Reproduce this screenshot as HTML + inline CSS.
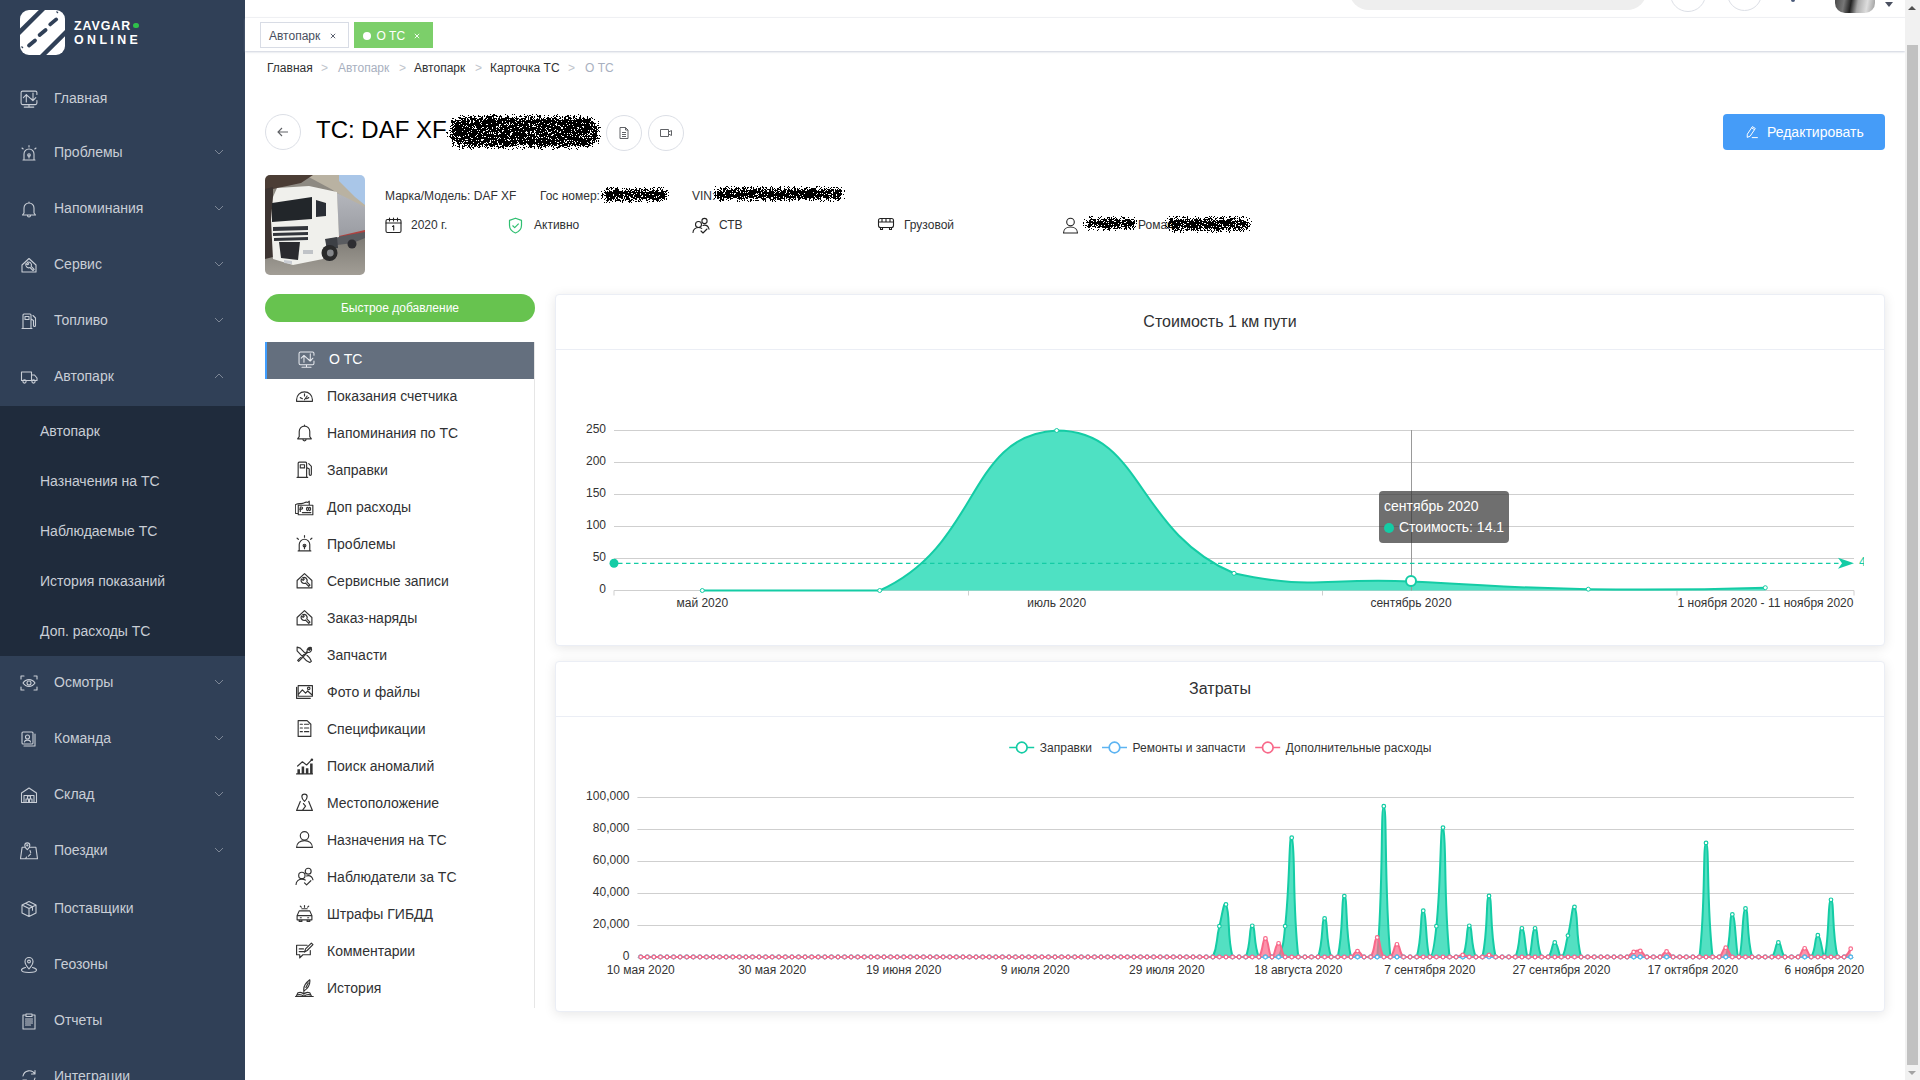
<!DOCTYPE html>
<html><head><meta charset="utf-8">
<style>
*{box-sizing:border-box;margin:0;padding:0}
html,body{width:1920px;height:1080px;overflow:hidden;background:#fff;font-family:"Liberation Sans",sans-serif}
.abs{position:absolute}
#sb{position:absolute;left:0;top:0;width:245px;height:1080px;background:#304057}
.mi{position:absolute;left:0;width:245px;height:56px;color:#c9ced6;font-size:14px}
.mi .t{position:absolute;left:54px;top:50%;transform:translateY(-50%);white-space:nowrap}
.mi svg.ic{position:absolute;left:20px;top:50%;margin-top:-8.5px;width:18px;height:18px}
.mi svg.ch{position:absolute;left:214px;top:50%;margin-top:-3px;width:10px;height:6px}
#sub{position:absolute;left:0;top:406px;width:245px;height:250px;background:#1f2b3c}
.si{position:absolute;left:40px;color:#c9ced6;font-size:14px;white-space:nowrap}
#hdr{position:absolute;left:245px;top:0;width:1660px;height:18px;background:#fff;border-bottom:1px solid #f3f4f6}
#tabs{position:absolute;left:245px;top:18px;width:1660px;height:33px;background:#fff;box-shadow:0 1px 2px rgba(160,170,190,.55)}
.tab{position:absolute;top:4px;height:26px;font-size:12px;line-height:24px;white-space:nowrap}
#sbar{position:absolute;left:1905px;top:0;width:15px;height:1080px;background:#f1f1f1}
.crumb{position:absolute;top:61px;font-size:12px;white-space:nowrap;color:#303133}
.circ{position:absolute;width:36px;height:36px;border:1px solid #dcdfe6;border-radius:50%;background:#fff}
.card{position:absolute;left:555px;width:1330px;background:#fff;border:1px solid #ebeef5;border-radius:4px;box-shadow:0 2px 12px 0 rgba(0,0,0,.1)}
.card .hd{position:absolute;left:0;top:0;width:100%;border-bottom:1px solid #ebeef5;text-align:center;color:#303133;font-size:16px}
.sm{position:absolute;left:265px;width:270px;height:37px;font-size:14px;color:#303133;white-space:nowrap}
.sm .t{position:absolute;left:62px;top:50%;margin-top:-2px;transform:translateY(-50%)}
.sm svg{position:absolute;left:30px;top:50%;margin-top:-11.5px;width:19px;height:19px}
.lbl{position:absolute;font-size:12px;color:#303133;white-space:nowrap}
</style></head><body>

<!-- SIDEBAR -->
<div id="sb">
 <svg class="abs" style="left:20px;top:10px" width="45" height="45" viewBox="0 0 45 45">
<path d="M9 0h9.8L0 18.6V9a9 9 0 0 1 9-9z" fill="#fff"/>
<path d="M25 0H36a9 9 0 0 1 9 9v11L20 45H9a9 9 0 0 1-9-9V25z" fill="#fff"/>
<path d="M45 26.2V36a9 9 0 0 1-9 9H26.2z" fill="#fff"/>
<path d="M30.2 14.4l6-5M19.6 25l6-5M9 35.5l6-5" stroke="#304057" stroke-width="3.8" stroke-linecap="round"/>
<path d="M36.5 1.5l1.5 1.5M1.5 36.5l1.5 1.5" stroke="#304057" stroke-width="1.2"/>
</svg>
<div class="abs" style="left:74px;top:20px;font-size:12.4px;font-weight:bold;color:#fff;letter-spacing:0.95px;line-height:13px">ZAVGAR</div>
<div class="abs" style="left:133px;top:22.7px;width:5.5px;height:5.5px;border-radius:50%;background:#2fc14a"></div>
<div class="abs" style="left:74px;top:34px;font-size:12.4px;font-weight:bold;color:#fff;letter-spacing:3.4px;line-height:13px">ONLINE</div>
<div id="sub"></div>
<div class="mi" style="top:70px"><svg class="ic" viewBox="0 0 18 18"><path d="M16.9 4.5V2.6a1.5 1.5 0 0 0-1.5-1.5H2.6a1.5 1.5 0 0 0-1.5 1.5v10.5a1.5 1.5 0 0 0 1.5 1.5h12.8a1.5 1.5 0 0 0 1.5-1.5V10.5M9 14.6v2M4.2 17.1h9.6M3.4 7.6l2.9-2.9 6.5 5.9 3-3M6.3 12V4.7M4.6 6.4l1.7-1.7 1.7 1.7M13 3v7.5M11.3 8.9l1.7 1.7 1.7-1.7" fill="none" stroke="#c9ced6" stroke-width="1.1" stroke-linecap="round" stroke-linejoin="round"/></svg><span class="t">Главная</span></div>
<div class="mi" style="top:124px"><svg class="ic" viewBox="0 0 18 18"><path d="M3 16h12M4 16v-6a5 5 0 0 1 10 0v6M9 11v3" fill="none" stroke="#c9ced6" stroke-width="1.1" stroke-linecap="round" stroke-linejoin="round"/><circle cx="9" cy="11" r="1.3" fill="none" stroke="#c9ced6" stroke-width="1.1" stroke-linecap="round" stroke-linejoin="round"/><path d="M9 1.5v1.5M2 4l1.2 1M16 4l-1.2 1" fill="none" stroke="#c9ced6" stroke-width="1.1" stroke-linecap="round" stroke-linejoin="round"/></svg><span class="t">Проблемы</span><svg class="ch" viewBox="0 0 10 6"><path d="M1 1l4 4 4-4" fill="none" stroke="#7d8796" stroke-width="1"/></svg></div>
<div class="mi" style="top:180px"><svg class="ic" viewBox="0 0 18 18"><path d="M4 13V8a5 5 0 0 1 10 0v5l1.5 2h-13z M7.5 15.5a1.5 1.5 0 0 0 3 0 M9 2v1" fill="none" stroke="#c9ced6" stroke-width="1.1" stroke-linecap="round" stroke-linejoin="round"/></svg><span class="t">Напоминания</span><svg class="ch" viewBox="0 0 10 6"><path d="M1 1l4 4 4-4" fill="none" stroke="#7d8796" stroke-width="1"/></svg></div>
<div class="mi" style="top:236px"><svg class="ic" viewBox="0 0 18 18"><path d="M2 9L9 2.5 16 9v7H2z" fill="none" stroke="#c9ced6" stroke-width="1.1" stroke-linecap="round" stroke-linejoin="round"/><path d="M6 7.5a3 3 0 0 0 4 4l3 3 1.2-1.2-3-3a3 3 0 0 0-4-4l1.5 1.5-1 1z" fill="none" stroke="#c9ced6" stroke-width="1.1" stroke-linecap="round" stroke-linejoin="round"/></svg><span class="t">Сервис</span><svg class="ch" viewBox="0 0 10 6"><path d="M1 1l4 4 4-4" fill="none" stroke="#7d8796" stroke-width="1"/></svg></div>
<div class="mi" style="top:292px"><svg class="ic" viewBox="0 0 18 18"><path d="M3 16V3a1 1 0 0 1 1-1h6a1 1 0 0 1 1 1v13M2 16.5h10M5 4.5h4v3H5zM11 7l2.5 1.5v5a1 1 0 0 0 2 0V6L13 3.5" fill="none" stroke="#c9ced6" stroke-width="1.1" stroke-linecap="round" stroke-linejoin="round"/></svg><span class="t">Топливо</span><svg class="ch" viewBox="0 0 10 6"><path d="M1 1l4 4 4-4" fill="none" stroke="#7d8796" stroke-width="1"/></svg></div>
<div class="mi" style="top:348px"><svg class="ic" viewBox="0 0 18 18"><path d="M1.5 4h10v8.5h-10zM11.5 7h3l2.5 3v2.5h-5.5" fill="none" stroke="#c9ced6" stroke-width="1.1" stroke-linecap="round" stroke-linejoin="round"/><circle cx="4.5" cy="13.5" r="1.6" fill="none" stroke="#c9ced6" stroke-width="1.1" stroke-linecap="round" stroke-linejoin="round"/><circle cx="13.5" cy="13.5" r="1.6" fill="none" stroke="#c9ced6" stroke-width="1.1" stroke-linecap="round" stroke-linejoin="round"/></svg><span class="t">Автопарк</span><svg class="ch" viewBox="0 0 10 6"><path d="M1 5l4-4 4 4" fill="none" stroke="#7d8796" stroke-width="1"/></svg></div>
<div class="mi" style="top:654px"><svg class="ic" viewBox="0 0 18 18"><path d="M1 5V2h3M14 2h3v3M17 13v3h-3M4 16H1v-3M3 9c3-4.5 9-4.5 12 0-3 4.5-9 4.5-12 0z" fill="none" stroke="#c9ced6" stroke-width="1.1" stroke-linecap="round" stroke-linejoin="round"/><circle cx="9" cy="9" r="2" fill="none" stroke="#c9ced6" stroke-width="1.1" stroke-linecap="round" stroke-linejoin="round"/></svg><span class="t">Осмотры</span><svg class="ch" viewBox="0 0 10 6"><path d="M1 1l4 4 4-4" fill="none" stroke="#7d8796" stroke-width="1"/></svg></div>
<div class="mi" style="top:710px"><svg class="ic" viewBox="0 0 18 18"><rect x="2" y="2" width="11" height="12" rx="1" fill="none" stroke="#c9ced6" stroke-width="1.1" stroke-linecap="round" stroke-linejoin="round"/><path d="M15 4v12H4M4.5 12c.5-2.5 5.5-2.5 6 0" fill="none" stroke="#c9ced6" stroke-width="1.1" stroke-linecap="round" stroke-linejoin="round"/><circle cx="7.5" cy="7" r="2" fill="none" stroke="#c9ced6" stroke-width="1.1" stroke-linecap="round" stroke-linejoin="round"/></svg><span class="t">Команда</span><svg class="ch" viewBox="0 0 10 6"><path d="M1 1l4 4 4-4" fill="none" stroke="#7d8796" stroke-width="1"/></svg></div>
<div class="mi" style="top:766px"><svg class="ic" viewBox="0 0 18 18"><path d="M1.5 7L9 2l7.5 5v9.5h-15zM4 16.5v-7h10v7M6 13h2.5v3.5H6zM9.5 13H12v3.5H9.5zM7.5 10h3v3h-3z" fill="none" stroke="#c9ced6" stroke-width="1.1" stroke-linecap="round" stroke-linejoin="round"/></svg><span class="t">Склад</span><svg class="ch" viewBox="0 0 10 6"><path d="M1 1l4 4 4-4" fill="none" stroke="#7d8796" stroke-width="1"/></svg></div>
<div class="mi" style="top:822px"><svg class="ic" viewBox="0 0 18 18"><path d="M5.2 5.3H2.1L.5 16.7h17L15.9 5.3H9.5M7.3 7.6S4.8 5.3 4.8 3.4a2.5 2.5 0 0 1 5 0c0 1.9-2.5 4.2-2.5 4.2zM10 8.5l.7 2.2M10.5 12.2l-2 2M6.6 15l-1.2 1.7" fill="none" stroke="#c9ced6" stroke-width="1.1" stroke-linecap="round" stroke-linejoin="round"/><circle cx="7.3" cy="3.4" r=".6" fill="none" stroke="#c9ced6" stroke-width="1.1" stroke-linecap="round" stroke-linejoin="round"/></svg><span class="t">Поездки</span><svg class="ch" viewBox="0 0 10 6"><path d="M1 1l4 4 4-4" fill="none" stroke="#7d8796" stroke-width="1"/></svg></div>
<div class="mi" style="top:880px"><svg class="ic" viewBox="0 0 18 18"><path d="M9 1.5l7 3.5v8l-7 3.5-7-3.5v-8zM2 5l7 3.5L16 5M9 8.5v8M5.5 3.3l7 3.5v3.5" fill="none" stroke="#c9ced6" stroke-width="1.1" stroke-linecap="round" stroke-linejoin="round"/></svg><span class="t">Поставщики</span></div>
<div class="mi" style="top:936px"><svg class="ic" viewBox="0 0 18 18"><path d="M9 13s-4-4.5-4-7.5a4 4 0 0 1 8 0c0 3-4 7.5-4 7.5z" fill="none" stroke="#c9ced6" stroke-width="1.1" stroke-linecap="round" stroke-linejoin="round"/><circle cx="9" cy="5.5" r="1.4" fill="none" stroke="#c9ced6" stroke-width="1.1" stroke-linecap="round" stroke-linejoin="round"/><path d="M5.5 11.5C2.5 12.2 1.5 13 1.5 14c0 1.5 3.4 2.5 7.5 2.5s7.5-1 7.5-2.5c0-1-1-1.8-4-2.5" fill="none" stroke="#c9ced6" stroke-width="1.1" stroke-linecap="round" stroke-linejoin="round"/></svg><span class="t">Геозоны</span></div>
<div class="mi" style="top:992px"><svg class="ic" viewBox="0 0 18 18"><path d="M3 3h3M12 3h3v14H3V3M6 2h6v2.5H6z M5.5 7h7M5.5 9h7M5.5 11h7M5.5 13h5" fill="none" stroke="#c9ced6" stroke-width="1.1" stroke-linecap="round" stroke-linejoin="round"/></svg><span class="t">Отчеты</span></div>
<div class="mi" style="top:1048px"><svg class="ic" viewBox="0 0 18 18"><path d="M3 8a6.5 6.5 0 0 1 12-2M15 10a6.5 6.5 0 0 1-12 2M15 2.5V6h-3.5M3 15.5V12h3.5" fill="none" stroke="#c9ced6" stroke-width="1.1" stroke-linecap="round" stroke-linejoin="round"/></svg><span class="t">Интеграции</span></div>
<div class="si" style="top:423px;line-height:16px">Автопарк</div>
<div class="si" style="top:473px;line-height:16px">Назначения на ТС</div>
<div class="si" style="top:523px;line-height:16px">Наблюдаемые ТС</div>
<div class="si" style="top:573px;line-height:16px">История показаний</div>
<div class="si" style="top:623px;line-height:16px">Доп. расходы ТС</div>
</div>

<!-- HEADER -->
<div id="hdr">
  <div class="abs" style="left:1104px;top:-30px;width:298px;height:40px;border-radius:20px;background:#eeeeee"></div>
  <div class="abs" style="left:1425px;top:-24px;width:36px;height:36px;border-radius:50%;border:1px solid #dcdfe6"></div>
  <div class="abs" style="left:1482px;top:-24px;width:35px;height:35px;border-radius:50%;border:1px solid #dcdfe6"></div>
  <div class="abs" style="left:1546px;top:-2px;width:4px;height:4px;border-radius:50%;background:#4a5a7a"></div>
  <div class="abs" style="left:1590px;top:-27px;width:40px;height:40px;border-radius:10px;background:linear-gradient(100deg,#333 0%,#777 30%,#222 45%,#aaa 60%,#ddd 80%,#999 100%)"></div>
  <div class="abs" style="left:1640px;top:2px;width:0;height:0;border-left:4px solid transparent;border-right:4px solid transparent;border-top:5px solid #4a5060"></div>
</div>

<!-- TABS -->
<div id="tabs">
  <div class="tab" style="left:15px;width:89px;border:1px solid #d8dce5"></div>
  <div class="abs" style="left:24px;top:11px;font-size:12px;line-height:14px;color:#495060;white-space:nowrap">Автопарк</div>
  <svg class="abs" style="left:84.5px;top:14.5px" width="6" height="6" viewBox="0 0 6 6"><path d="M.8 .8l4.4 4.4M5.2 .8L.8 5.2" stroke="#495060" stroke-width="0.9"/></svg>
  <div class="tab" style="left:109px;width:79px;background:#7ccf6a"></div>
  <div class="abs" style="left:117.9px;top:14px;width:8px;height:8px;border-radius:50%;background:#fff"></div>
  <div class="abs" style="left:131.4px;top:11px;font-size:12px;line-height:14px;color:#fff;white-space:nowrap">О ТС</div>
  <svg class="abs" style="left:168.5px;top:14.5px" width="6" height="6" viewBox="0 0 6 6"><path d="M.8 .8l4.4 4.4M5.2 .8L.8 5.2" stroke="#fff" stroke-width="0.9"/></svg>
</div>

<!-- SCROLLBAR -->
<div id="sbar">
  <div class="abs" style="left:3px;top:6px;width:0;height:0;border-left:4.5px solid transparent;border-right:4.5px solid transparent;border-bottom:4.5px solid #505050"></div>
  <div class="abs" style="left:2px;top:45px;width:11px;height:1020px;background:#c1c1c1"></div>
  <div class="abs" style="left:3px;top:1071px;width:0;height:0;border-left:4px solid transparent;border-right:4px solid transparent;border-top:4px solid #a3a3a3"></div>
</div>

<!-- BREADCRUMBS -->
<div class="crumb" style="left:267px">Главная</div>
<div class="crumb" style="left:321px;color:#c0c4cc">&gt;</div>
<div class="crumb" style="left:338px;color:#a8b0c0">Автопарк</div>
<div class="crumb" style="left:399px;color:#c0c4cc">&gt;</div>
<div class="crumb" style="left:414px">Автопарк</div>
<div class="crumb" style="left:475px;color:#c0c4cc">&gt;</div>
<div class="crumb" style="left:490px">Карточка ТС</div>
<div class="crumb" style="left:568px;color:#c0c4cc">&gt;</div>
<div class="crumb" style="left:585px;color:#a8b0c0">О ТС</div>

<!-- TITLE -->
<div class="circ" style="left:265px;top:114px"></div>
<svg class="abs" style="left:276px;top:125px" width="14" height="14" viewBox="0 0 14 14"><path d="M12 7H2M6 3L2 7l4 4" fill="none" stroke="#606266" stroke-width="1.1"/></svg>
<div class="abs" style="left:316px;top:114px;font-size:24px;color:#000;white-space:nowrap;line-height:32px">ТС: DAF XF</div>
<svg class="abs" style="left:446px;top:114px" width="156" height="36" viewBox="0 0 156 36" shape-rendering="crispEdges"><path d="M44 0h1v1h-1zM47 0h2v1h-2zM59 0h1v1h-1zM66 0h1v1h-1zM68 0h1v1h-1zM78 0h1v1h-1zM86 0h1v1h-1zM90 0h1v1h-1zM111 0h1v1h-1zM132 0h1v1h-1zM14 1h1v1h-1zM16 1h1v1h-1zM22 1h1v1h-1zM27 1h1v1h-1zM32 1h1v1h-1zM38 1h1v1h-1zM41 1h1v1h-1zM46 1h5v1h-5zM54 1h1v1h-1zM61 1h1v1h-1zM74 1h1v1h-1zM81 1h1v1h-1zM83 1h2v1h-2zM91 1h1v1h-1zM93 1h2v1h-2zM98 1h1v1h-1zM102 1h1v1h-1zM108 1h1v1h-1zM110 1h1v1h-1zM121 1h2v1h-2zM124 1h1v1h-1zM128 1h1v1h-1zM134 1h1v1h-1zM17 2h2v1h-2zM24 2h2v1h-2zM28 2h2v1h-2zM32 2h3v1h-3zM36 2h1v1h-1zM38 2h1v1h-1zM40 2h8v1h-8zM50 2h2v1h-2zM53 2h3v1h-3zM61 2h2v1h-2zM70 2h1v1h-1zM73 2h3v1h-3zM78 2h3v1h-3zM82 2h1v1h-1zM85 2h2v1h-2zM88 2h1v1h-1zM91 2h4v1h-4zM107 2h1v1h-1zM110 2h2v1h-2zM113 2h1v1h-1zM116 2h1v1h-1zM119 2h4v1h-4zM127 2h2v1h-2zM130 2h1v1h-1zM134 2h1v1h-1zM141 2h1v1h-1zM12 3h3v1h-3zM19 3h2v1h-2zM22 3h4v1h-4zM28 3h1v1h-1zM35 3h2v1h-2zM40 3h6v1h-6zM47 3h1v1h-1zM53 3h1v1h-1zM55 3h1v1h-1zM59 3h4v1h-4zM66 3h1v1h-1zM68 3h1v1h-1zM70 3h1v1h-1zM79 3h2v1h-2zM82 3h1v1h-1zM84 3h3v1h-3zM88 3h1v1h-1zM93 3h2v1h-2zM98 3h1v1h-1zM101 3h2v1h-2zM105 3h1v1h-1zM108 3h2v1h-2zM114 3h1v1h-1zM116 3h1v1h-1zM118 3h2v1h-2zM122 3h3v1h-3zM127 3h2v1h-2zM133 3h2v1h-2zM137 3h1v1h-1zM141 3h1v1h-1zM145 3h1v1h-1zM6 4h2v1h-2zM13 4h7v1h-7zM21 4h1v1h-1zM24 4h7v1h-7zM33 4h4v1h-4zM39 4h2v1h-2zM42 4h4v1h-4zM47 4h4v1h-4zM52 4h2v1h-2zM55 4h13v1h-13zM69 4h4v1h-4zM75 4h5v1h-5zM82 4h1v1h-1zM84 4h2v1h-2zM87 4h1v1h-1zM91 4h1v1h-1zM93 4h1v1h-1zM95 4h1v1h-1zM97 4h1v1h-1zM100 4h5v1h-5zM106 4h5v1h-5zM113 4h2v1h-2zM118 4h2v1h-2zM122 4h4v1h-4zM127 4h1v1h-1zM129 4h2v1h-2zM133 4h2v1h-2zM136 4h3v1h-3zM141 4h1v1h-1zM143 4h2v1h-2zM146 4h1v1h-1zM9 5h1v1h-1zM15 5h2v1h-2zM18 5h2v1h-2zM21 5h2v1h-2zM24 5h6v1h-6zM31 5h6v1h-6zM38 5h2v1h-2zM41 5h8v1h-8zM50 5h1v1h-1zM52 5h9v1h-9zM62 5h1v1h-1zM64 5h5v1h-5zM70 5h2v1h-2zM73 5h4v1h-4zM78 5h2v1h-2zM82 5h1v1h-1zM84 5h3v1h-3zM88 5h1v1h-1zM90 5h4v1h-4zM95 5h5v1h-5zM101 5h4v1h-4zM106 5h2v1h-2zM109 5h4v1h-4zM116 5h1v1h-1zM118 5h5v1h-5zM124 5h1v1h-1zM128 5h1v1h-1zM130 5h6v1h-6zM137 5h8v1h-8zM148 5h1v1h-1zM5 6h2v1h-2zM9 6h6v1h-6zM16 6h4v1h-4zM21 6h3v1h-3zM25 6h2v1h-2zM28 6h5v1h-5zM34 6h2v1h-2zM37 6h13v1h-13zM51 6h20v1h-20zM73 6h2v1h-2zM76 6h3v1h-3zM80 6h5v1h-5zM86 6h23v1h-23zM110 6h35v1h-35zM5 7h5v1h-5zM11 7h2v1h-2zM15 7h9v1h-9zM25 7h2v1h-2zM29 7h4v1h-4zM34 7h22v1h-22zM57 7h2v1h-2zM60 7h9v1h-9zM70 7h26v1h-26zM97 7h14v1h-14zM112 7h3v1h-3zM116 7h6v1h-6zM123 7h3v1h-3zM127 7h17v1h-17zM145 7h2v1h-2zM152 7h1v1h-1zM5 8h4v1h-4zM10 8h10v1h-10zM21 8h2v1h-2zM25 8h2v1h-2zM28 8h7v1h-7zM36 8h14v1h-14zM51 8h5v1h-5zM57 8h6v1h-6zM64 8h6v1h-6zM71 8h4v1h-4zM76 8h1v1h-1zM78 8h15v1h-15zM94 8h11v1h-11zM106 8h24v1h-24zM131 8h5v1h-5zM137 8h11v1h-11zM6 9h1v1h-1zM8 9h7v1h-7zM16 9h7v1h-7zM24 9h10v1h-10zM35 9h10v1h-10zM46 9h14v1h-14zM61 9h2v1h-2zM64 9h2v1h-2zM67 9h10v1h-10zM78 9h4v1h-4zM84 9h6v1h-6zM91 9h1v1h-1zM93 9h5v1h-5zM99 9h4v1h-4zM104 9h6v1h-6zM111 9h9v1h-9zM121 9h14v1h-14zM136 9h1v1h-1zM138 9h1v1h-1zM140 9h3v1h-3zM144 9h6v1h-6zM152 9h1v1h-1zM6 10h2v1h-2zM9 10h4v1h-4zM14 10h21v1h-21zM36 10h4v1h-4zM42 10h11v1h-11zM55 10h3v1h-3zM60 10h1v1h-1zM62 10h1v1h-1zM64 10h1v1h-1zM66 10h1v1h-1zM68 10h4v1h-4zM73 10h10v1h-10zM84 10h2v1h-2zM87 10h1v1h-1zM89 10h12v1h-12zM103 10h6v1h-6zM111 10h12v1h-12zM124 10h2v1h-2zM127 10h17v1h-17zM145 10h2v1h-2zM148 10h1v1h-1zM5 11h2v1h-2zM8 11h9v1h-9zM18 11h2v1h-2zM21 11h7v1h-7zM29 11h24v1h-24zM54 11h8v1h-8zM63 11h20v1h-20zM84 11h3v1h-3zM88 11h3v1h-3zM92 11h3v1h-3zM96 11h8v1h-8zM105 11h5v1h-5zM111 11h1v1h-1zM114 11h3v1h-3zM118 11h3v1h-3zM122 11h22v1h-22zM145 11h2v1h-2zM148 11h1v1h-1zM151 11h2v1h-2zM4 12h1v1h-1zM7 12h12v1h-12zM20 12h1v1h-1zM22 12h4v1h-4zM27 12h2v1h-2zM30 12h20v1h-20zM52 12h1v1h-1zM54 12h1v1h-1zM56 12h5v1h-5zM62 12h9v1h-9zM73 12h3v1h-3zM77 12h3v1h-3zM81 12h5v1h-5zM90 12h17v1h-17zM108 12h6v1h-6zM115 12h12v1h-12zM128 12h8v1h-8zM138 12h13v1h-13zM6 13h2v1h-2zM9 13h7v1h-7zM17 13h6v1h-6zM24 13h3v1h-3zM28 13h1v1h-1zM30 13h6v1h-6zM38 13h3v1h-3zM42 13h4v1h-4zM47 13h3v1h-3zM51 13h1v1h-1zM53 13h15v1h-15zM69 13h5v1h-5zM76 13h7v1h-7zM84 13h7v1h-7zM92 13h2v1h-2zM95 13h5v1h-5zM101 13h14v1h-14zM117 13h2v1h-2zM120 13h11v1h-11zM133 13h4v1h-4zM138 13h8v1h-8zM147 13h4v1h-4zM152 13h3v1h-3zM4 14h3v1h-3zM8 14h18v1h-18zM27 14h1v1h-1zM31 14h4v1h-4zM36 14h4v1h-4zM41 14h5v1h-5zM47 14h6v1h-6zM54 14h3v1h-3zM58 14h6v1h-6zM66 14h7v1h-7zM74 14h21v1h-21zM96 14h3v1h-3zM100 14h3v1h-3zM105 14h10v1h-10zM117 14h15v1h-15zM133 14h1v1h-1zM135 14h12v1h-12zM148 14h3v1h-3zM152 14h1v1h-1zM6 15h12v1h-12zM19 15h23v1h-23zM43 15h7v1h-7zM51 15h11v1h-11zM63 15h14v1h-14zM78 15h12v1h-12zM91 15h9v1h-9zM101 15h8v1h-8zM110 15h15v1h-15zM126 15h2v1h-2zM129 15h2v1h-2zM132 15h17v1h-17zM150 15h2v1h-2zM3 16h2v1h-2zM6 16h19v1h-19zM26 16h5v1h-5zM32 16h1v1h-1zM34 16h6v1h-6zM42 16h2v1h-2zM45 16h11v1h-11zM58 16h6v1h-6zM65 16h23v1h-23zM89 16h5v1h-5zM95 16h6v1h-6zM102 16h6v1h-6zM109 16h2v1h-2zM112 16h5v1h-5zM118 16h10v1h-10zM129 16h6v1h-6zM136 16h6v1h-6zM143 16h1v1h-1zM145 16h1v1h-1zM147 16h4v1h-4zM152 16h1v1h-1zM5 17h4v1h-4zM10 17h6v1h-6zM17 17h6v1h-6zM24 17h13v1h-13zM39 17h13v1h-13zM53 17h3v1h-3zM57 17h12v1h-12zM70 17h2v1h-2zM73 17h7v1h-7zM81 17h3v1h-3zM86 17h2v1h-2zM90 17h9v1h-9zM100 17h1v1h-1zM102 17h3v1h-3zM106 17h5v1h-5zM112 17h2v1h-2zM115 17h10v1h-10zM126 17h3v1h-3zM130 17h14v1h-14zM145 17h7v1h-7zM153 17h1v1h-1zM0 18h2v1h-2zM4 18h1v1h-1zM6 18h2v1h-2zM9 18h12v1h-12zM22 18h3v1h-3zM26 18h6v1h-6zM33 18h4v1h-4zM38 18h5v1h-5zM44 18h1v1h-1zM46 18h1v1h-1zM48 18h1v1h-1zM50 18h3v1h-3zM54 18h11v1h-11zM67 18h8v1h-8zM76 18h3v1h-3zM82 18h2v1h-2zM85 18h3v1h-3zM89 18h8v1h-8zM98 18h4v1h-4zM105 18h8v1h-8zM115 18h29v1h-29zM146 18h2v1h-2zM149 18h2v1h-2zM1 19h1v1h-1zM7 19h28v1h-28zM36 19h5v1h-5zM42 19h1v1h-1zM44 19h1v1h-1zM46 19h1v1h-1zM48 19h4v1h-4zM55 19h4v1h-4zM60 19h4v1h-4zM66 19h14v1h-14zM81 19h3v1h-3zM85 19h1v1h-1zM88 19h1v1h-1zM90 19h3v1h-3zM94 19h1v1h-1zM96 19h6v1h-6zM103 19h6v1h-6zM110 19h8v1h-8zM119 19h2v1h-2zM122 19h1v1h-1zM124 19h1v1h-1zM126 19h6v1h-6zM133 19h3v1h-3zM137 19h4v1h-4zM142 19h1v1h-1zM144 19h2v1h-2zM147 19h4v1h-4zM4 20h18v1h-18zM23 20h8v1h-8zM32 20h4v1h-4zM37 20h11v1h-11zM50 20h2v1h-2zM53 20h11v1h-11zM66 20h15v1h-15zM82 20h7v1h-7zM90 20h16v1h-16zM108 20h18v1h-18zM127 20h3v1h-3zM131 20h8v1h-8zM140 20h2v1h-2zM144 20h7v1h-7zM4 21h1v1h-1zM6 21h1v1h-1zM8 21h11v1h-11zM20 21h2v1h-2zM23 21h7v1h-7zM31 21h30v1h-30zM62 21h2v1h-2zM65 21h24v1h-24zM90 21h1v1h-1zM93 21h8v1h-8zM102 21h3v1h-3zM107 21h8v1h-8zM116 21h5v1h-5zM122 21h2v1h-2zM125 21h9v1h-9zM135 21h1v1h-1zM137 21h1v1h-1zM139 21h2v1h-2zM142 21h2v1h-2zM146 21h6v1h-6zM153 21h1v1h-1zM1 22h1v1h-1zM3 22h2v1h-2zM6 22h2v1h-2zM9 22h2v1h-2zM12 22h1v1h-1zM14 22h3v1h-3zM18 22h11v1h-11zM30 22h6v1h-6zM37 22h1v1h-1zM40 22h22v1h-22zM63 22h6v1h-6zM70 22h2v1h-2zM73 22h8v1h-8zM82 22h1v1h-1zM84 22h8v1h-8zM93 22h5v1h-5zM99 22h11v1h-11zM111 22h5v1h-5zM118 22h8v1h-8zM127 22h2v1h-2zM130 22h3v1h-3zM134 22h1v1h-1zM136 22h15v1h-15zM154 22h1v1h-1zM4 23h5v1h-5zM10 23h2v1h-2zM15 23h9v1h-9zM25 23h6v1h-6zM32 23h10v1h-10zM43 23h1v1h-1zM45 23h3v1h-3zM49 23h1v1h-1zM51 23h2v1h-2zM54 23h9v1h-9zM64 23h14v1h-14zM79 23h1v1h-1zM81 23h5v1h-5zM87 23h3v1h-3zM91 23h2v1h-2zM94 23h1v1h-1zM97 23h3v1h-3zM101 23h1v1h-1zM103 23h30v1h-30zM134 23h2v1h-2zM138 23h1v1h-1zM140 23h1v1h-1zM142 23h1v1h-1zM145 23h1v1h-1zM147 23h3v1h-3zM151 23h1v1h-1zM5 24h20v1h-20zM27 24h25v1h-25zM53 24h1v1h-1zM55 24h3v1h-3zM59 24h11v1h-11zM71 24h8v1h-8zM80 24h6v1h-6zM87 24h2v1h-2zM90 24h1v1h-1zM92 24h10v1h-10zM103 24h1v1h-1zM105 24h6v1h-6zM112 24h7v1h-7zM121 24h16v1h-16zM138 24h16v1h-16zM6 25h3v1h-3zM10 25h2v1h-2zM13 25h6v1h-6zM22 25h13v1h-13zM38 25h13v1h-13zM52 25h9v1h-9zM63 25h1v1h-1zM65 25h2v1h-2zM68 25h2v1h-2zM71 25h1v1h-1zM73 25h3v1h-3zM77 25h28v1h-28zM106 25h3v1h-3zM110 25h2v1h-2zM113 25h27v1h-27zM141 25h5v1h-5zM147 25h3v1h-3zM6 26h1v1h-1zM8 26h8v1h-8zM17 26h8v1h-8zM26 26h4v1h-4zM31 26h1v1h-1zM33 26h2v1h-2zM37 26h7v1h-7zM45 26h1v1h-1zM47 26h1v1h-1zM49 26h10v1h-10zM60 26h2v1h-2zM64 26h16v1h-16zM81 26h1v1h-1zM83 26h6v1h-6zM90 26h5v1h-5zM96 26h4v1h-4zM101 26h17v1h-17zM119 26h2v1h-2zM123 26h1v1h-1zM125 26h1v1h-1zM127 26h18v1h-18zM146 26h3v1h-3zM150 26h1v1h-1zM152 26h1v1h-1zM6 27h1v1h-1zM10 27h8v1h-8zM19 27h1v1h-1zM22 27h22v1h-22zM45 27h6v1h-6zM52 27h19v1h-19zM72 27h5v1h-5zM78 27h11v1h-11zM90 27h19v1h-19zM110 27h4v1h-4zM115 27h3v1h-3zM119 27h1v1h-1zM121 27h7v1h-7zM129 27h2v1h-2zM132 27h12v1h-12zM146 27h1v1h-1zM148 27h1v1h-1zM150 27h1v1h-1zM152 27h1v1h-1zM7 28h2v1h-2zM11 28h2v1h-2zM14 28h1v1h-1zM16 28h1v1h-1zM18 28h9v1h-9zM28 28h6v1h-6zM35 28h5v1h-5zM41 28h2v1h-2zM45 28h6v1h-6zM52 28h13v1h-13zM66 28h6v1h-6zM73 28h31v1h-31zM105 28h6v1h-6zM113 28h6v1h-6zM121 28h2v1h-2zM124 28h2v1h-2zM127 28h2v1h-2zM130 28h4v1h-4zM135 28h6v1h-6zM142 28h3v1h-3zM146 28h3v1h-3zM6 29h2v1h-2zM11 29h5v1h-5zM17 29h15v1h-15zM33 29h5v1h-5zM40 29h1v1h-1zM42 29h4v1h-4zM47 29h5v1h-5zM53 29h3v1h-3zM57 29h14v1h-14zM73 29h7v1h-7zM81 29h11v1h-11zM93 29h3v1h-3zM97 29h20v1h-20zM118 29h11v1h-11zM130 29h12v1h-12zM143 29h4v1h-4zM152 29h1v1h-1zM7 30h1v1h-1zM12 30h2v1h-2zM18 30h1v1h-1zM21 30h1v1h-1zM23 30h2v1h-2zM26 30h5v1h-5zM32 30h5v1h-5zM38 30h14v1h-14zM53 30h3v1h-3zM57 30h7v1h-7zM65 30h3v1h-3zM69 30h1v1h-1zM71 30h2v1h-2zM74 30h3v1h-3zM78 30h2v1h-2zM82 30h5v1h-5zM88 30h1v1h-1zM90 30h10v1h-10zM101 30h4v1h-4zM106 30h5v1h-5zM112 30h2v1h-2zM116 30h6v1h-6zM123 30h2v1h-2zM126 30h7v1h-7zM134 30h10v1h-10zM146 30h1v1h-1zM7 31h1v1h-1zM9 31h1v1h-1zM13 31h1v1h-1zM16 31h1v1h-1zM18 31h3v1h-3zM22 31h2v1h-2zM25 31h2v1h-2zM28 31h3v1h-3zM32 31h2v1h-2zM36 31h1v1h-1zM39 31h3v1h-3zM43 31h6v1h-6zM51 31h1v1h-1zM56 31h7v1h-7zM64 31h7v1h-7zM77 31h1v1h-1zM83 31h3v1h-3zM91 31h1v1h-1zM93 31h4v1h-4zM98 31h4v1h-4zM103 31h1v1h-1zM105 31h2v1h-2zM108 31h3v1h-3zM113 31h9v1h-9zM123 31h1v1h-1zM125 31h2v1h-2zM128 31h2v1h-2zM131 31h4v1h-4zM136 31h3v1h-3zM142 31h3v1h-3zM6 32h1v1h-1zM11 32h3v1h-3zM16 32h3v1h-3zM22 32h2v1h-2zM25 32h1v1h-1zM28 32h2v1h-2zM31 32h1v1h-1zM33 32h2v1h-2zM36 32h1v1h-1zM38 32h1v1h-1zM40 32h1v1h-1zM44 32h3v1h-3zM48 32h1v1h-1zM50 32h3v1h-3zM54 32h4v1h-4zM59 32h3v1h-3zM63 32h2v1h-2zM66 32h1v1h-1zM72 32h1v1h-1zM80 32h1v1h-1zM83 32h6v1h-6zM91 32h3v1h-3zM95 32h1v1h-1zM97 32h3v1h-3zM102 32h1v1h-1zM105 32h1v1h-1zM107 32h1v1h-1zM112 32h3v1h-3zM116 32h2v1h-2zM121 32h3v1h-3zM129 32h1v1h-1zM134 32h1v1h-1zM137 32h1v1h-1zM139 32h4v1h-4zM146 32h1v1h-1zM13 33h1v1h-1zM16 33h1v1h-1zM21 33h1v1h-1zM23 33h2v1h-2zM26 33h2v1h-2zM32 33h2v1h-2zM39 33h1v1h-1zM41 33h2v1h-2zM52 33h3v1h-3zM56 33h2v1h-2zM70 33h1v1h-1zM74 33h1v1h-1zM77 33h2v1h-2zM82 33h1v1h-1zM84 33h2v1h-2zM88 33h1v1h-1zM92 33h1v1h-1zM94 33h2v1h-2zM99 33h1v1h-1zM107 33h1v1h-1zM110 33h4v1h-4zM118 33h3v1h-3zM132 33h1v1h-1zM141 33h1v1h-1zM16 34h2v1h-2zM24 34h1v1h-1zM27 34h1v1h-1zM41 34h1v1h-1zM45 34h1v1h-1zM48 34h1v1h-1zM52 34h1v1h-1zM57 34h1v1h-1zM59 34h1v1h-1zM67 34h1v1h-1zM71 34h1v1h-1zM78 34h1v1h-1zM88 34h1v1h-1zM92 34h1v1h-1zM94 34h1v1h-1zM108 34h1v1h-1zM111 34h1v1h-1zM122 34h1v1h-1zM125 34h1v1h-1zM130 34h1v1h-1zM13 35h1v1h-1zM25 35h1v1h-1zM62 35h1v1h-1zM66 35h1v1h-1zM76 35h1v1h-1zM95 35h2v1h-2zM106 35h2v1h-2zM123 35h1v1h-1zM131 35h1v1h-1z" fill="#000"/></svg>
<div class="circ" style="left:606px;top:115px"></div>
<div class="circ" style="left:648px;top:115px"></div>
<svg class="abs" style="left:617px;top:126px" width="14" height="14" viewBox="0 0 14 14"><path d="M3 1.5h5.5L11 4v8.5H3z M8.5 1.5V4H11 M5 6.5h4M5 8.5h4M5 10.5h4" fill="none" stroke="#606266" stroke-width="1"/></svg>
<svg class="abs" style="left:659px;top:126px" width="14" height="14" viewBox="0 0 14 14"><path d="M1.5 3.5h8v7h-8z M9.5 6l3-1.5v5l-3-1.5" fill="none" stroke="#606266" stroke-width="1"/></svg>

<div class="abs" style="left:1723px;top:114px;width:162px;height:36px;background:#459cf8;border-radius:4px;color:#fff;font-size:14px;line-height:36px;padding-left:44px;white-space:nowrap">Редактировать</div>
<svg class="abs" style="left:1744px;top:125px" width="14" height="14" viewBox="0 0 14 14"><path d="M3.3 9.2L8.4 1.6l2.9 1.9-5.1 7.6-3 1.3z M7.6 2.8l2.9 1.9 M7.8 12.6h6" fill="none" stroke="#fff" stroke-width="1" stroke-linejoin="round"/></svg>

<!-- PHOTO -->
<svg class="abs" style="left:265px;top:175px" width="100" height="100" viewBox="0 0 100 100">
<defs><filter id="pbl"><feGaussianBlur stdDeviation="0.35"/></filter><clipPath id="pc"><rect x="0" y="0" width="100" height="100" rx="5"/></clipPath>
<linearGradient id="trl" x1="0" y1="0" x2="0" y2="1"><stop offset="0" stop-color="#b4b6bc"/><stop offset="1" stop-color="#9a9ca2"/></linearGradient>
<linearGradient id="gr" x1="0" y1="0" x2="0" y2="1"><stop offset="0" stop-color="#7d7a74"/><stop offset="1" stop-color="#a29e96"/></linearGradient></defs>
<g clip-path="url(#pc)" filter="url(#pbl)">
<rect width="100" height="100" fill="#8e8a82"/>
<rect x="0" y="62" width="100" height="38" fill="url(#gr)"/>
<path d="M40 0H100V36L66 14z" fill="#b9b2a2"/>
<path d="M74 0H100V30L90 22 74 6z" fill="#a9c6e8"/>
<path d="M0 0H48L36 8 8 14 0 20z" fill="#4b3c36"/>
<path d="M0 14L8 12V82L0 84z" fill="#3d3430"/>
<path d="M72 18L100 32V56L74 62z" fill="url(#trl)"/>
<path d="M74 61L100 55V58L75 64z" fill="#b0423f"/>
<path d="M72 62L100 57V63L88 68 72 70z" fill="#5a5b60"/>
<path d="M8 22L12 13 44 11 72 17 74 62 64 64 58 84 28 90 8 84 6 45z" fill="#f0f0ec"/>
<path d="M7 28L47 22V44L7 47z" fill="#24272c"/>
<path d="M51 25L61 28V41L51 42z" fill="#2c2f34"/>
<path d="M8 52L43 51V55L8 56zM8 58L43 57V60L8 61zM9 63L43 62V65L9 66z" fill="#33363b"/>
<path d="M14 67L35 67 33 85 16 83z" fill="#2a2c2f"/>
<path d="M60 64L72 62 73 73 62 75z" fill="#3c3f44"/>
<circle cx="64.5" cy="78" r="8" fill="#29292a"/><circle cx="65.3" cy="78" r="3.4" fill="#85878a"/>
<circle cx="87" cy="69" r="4.5" fill="#2e2e30"/>
<path d="M38 75L48 75 48 79 38 79z" fill="#c0c3c7"/>
<path d="M19 85L27 86 27 89 19 88z" fill="#c9ccd2"/>
</g></svg>

<!-- INFO -->
<div class="lbl" style="left:385px;top:189px">Марка/Модель: DAF XF</div>
<div class="lbl" style="left:540px;top:189px">Гос номер:</div>
<svg class="abs" style="left:601px;top:187px" width="69" height="16" viewBox="0 0 69 16" shape-rendering="crispEdges"><path d="M6 0h1v1h-1zM9 0h2v1h-2zM12 0h1v1h-1zM16 0h1v1h-1zM34 0h1v1h-1zM43 0h1v1h-1zM52 0h2v1h-2zM57 0h2v1h-2zM60 0h1v1h-1zM62 0h1v1h-1zM5 1h2v1h-2zM8 1h1v1h-1zM10 1h2v1h-2zM14 1h3v1h-3zM21 1h1v1h-1zM23 1h1v1h-1zM25 1h1v1h-1zM28 1h1v1h-1zM35 1h1v1h-1zM38 1h2v1h-2zM44 1h1v1h-1zM49 1h1v1h-1zM51 1h1v1h-1zM56 1h1v1h-1zM59 1h1v1h-1zM5 2h3v1h-3zM10 2h1v1h-1zM14 2h4v1h-4zM25 2h2v1h-2zM28 2h1v1h-1zM30 2h3v1h-3zM34 2h2v1h-2zM38 2h1v1h-1zM40 2h2v1h-2zM43 2h4v1h-4zM49 2h1v1h-1zM52 2h1v1h-1zM56 2h1v1h-1zM59 2h1v1h-1zM61 2h1v1h-1zM3 3h1v1h-1zM8 3h1v1h-1zM12 3h6v1h-6zM21 3h1v1h-1zM24 3h1v1h-1zM27 3h1v1h-1zM29 3h2v1h-2zM33 3h6v1h-6zM40 3h1v1h-1zM42 3h3v1h-3zM46 3h2v1h-2zM51 3h3v1h-3zM55 3h3v1h-3zM60 3h2v1h-2zM65 3h2v1h-2zM0 4h1v1h-1zM4 4h1v1h-1zM6 4h1v1h-1zM8 4h3v1h-3zM12 4h10v1h-10zM23 4h7v1h-7zM31 4h3v1h-3zM35 4h1v1h-1zM37 4h2v1h-2zM40 4h2v1h-2zM44 4h1v1h-1zM48 4h5v1h-5zM54 4h3v1h-3zM60 4h6v1h-6zM3 5h24v1h-24zM28 5h35v1h-35zM64 5h1v1h-1zM67 5h1v1h-1zM1 6h1v1h-1zM4 6h26v1h-26zM32 6h3v1h-3zM36 6h3v1h-3zM40 6h4v1h-4zM45 6h19v1h-19zM65 6h1v1h-1zM1 7h2v1h-2zM5 7h7v1h-7zM13 7h5v1h-5zM19 7h3v1h-3zM24 7h9v1h-9zM34 7h5v1h-5zM40 7h8v1h-8zM49 7h2v1h-2zM53 7h13v1h-13zM0 8h2v1h-2zM3 8h9v1h-9zM13 8h10v1h-10zM24 8h2v1h-2zM27 8h5v1h-5zM33 8h8v1h-8zM42 8h16v1h-16zM59 8h5v1h-5zM67 8h1v1h-1zM1 9h1v1h-1zM5 9h10v1h-10zM16 9h6v1h-6zM23 9h5v1h-5zM29 9h3v1h-3zM33 9h7v1h-7zM42 9h2v1h-2zM45 9h10v1h-10zM56 9h1v1h-1zM58 9h8v1h-8zM1 10h1v1h-1zM5 10h3v1h-3zM9 10h5v1h-5zM15 10h2v1h-2zM18 10h4v1h-4zM23 10h1v1h-1zM25 10h3v1h-3zM30 10h4v1h-4zM35 10h18v1h-18zM54 10h1v1h-1zM56 10h8v1h-8zM0 11h1v1h-1zM4 11h1v1h-1zM6 11h8v1h-8zM15 11h2v1h-2zM20 11h2v1h-2zM23 11h1v1h-1zM25 11h4v1h-4zM32 11h4v1h-4zM38 11h1v1h-1zM40 11h6v1h-6zM48 11h12v1h-12zM61 11h3v1h-3zM65 11h1v1h-1zM3 12h1v1h-1zM6 12h5v1h-5zM12 12h1v1h-1zM14 12h1v1h-1zM16 12h3v1h-3zM22 12h1v1h-1zM24 12h5v1h-5zM30 12h2v1h-2zM34 12h2v1h-2zM38 12h2v1h-2zM41 12h1v1h-1zM45 12h1v1h-1zM47 12h2v1h-2zM51 12h7v1h-7zM60 12h1v1h-1zM63 12h1v1h-1zM65 12h1v1h-1zM5 13h3v1h-3zM9 13h2v1h-2zM14 13h6v1h-6zM21 13h2v1h-2zM24 13h1v1h-1zM28 13h3v1h-3zM32 13h1v1h-1zM37 13h1v1h-1zM39 13h1v1h-1zM45 13h2v1h-2zM52 13h1v1h-1zM55 13h3v1h-3zM59 13h1v1h-1zM61 13h1v1h-1zM6 14h1v1h-1zM11 14h1v1h-1zM14 14h1v1h-1zM19 14h1v1h-1zM21 14h1v1h-1zM27 14h3v1h-3zM34 14h2v1h-2zM37 14h2v1h-2zM40 14h1v1h-1zM48 14h1v1h-1zM51 14h2v1h-2zM56 14h1v1h-1zM58 14h1v1h-1zM3 15h1v1h-1zM5 15h1v1h-1zM8 15h1v1h-1zM21 15h1v1h-1zM28 15h1v1h-1zM30 15h1v1h-1zM46 15h1v1h-1z" fill="#000"/></svg>
<div class="lbl" style="left:692px;top:189px">VIN:</div>
<svg class="abs" style="left:713px;top:186px" width="132" height="16" viewBox="0 0 132 16" shape-rendering="crispEdges"><path d="M2 0h1v1h-1zM13 0h2v1h-2zM18 0h1v1h-1zM21 0h1v1h-1zM31 0h1v1h-1zM38 0h1v1h-1zM44 0h1v1h-1zM49 0h1v1h-1zM58 0h1v1h-1zM67 0h1v1h-1zM71 0h1v1h-1zM75 0h1v1h-1zM81 0h1v1h-1zM88 0h1v1h-1zM103 0h2v1h-2zM106 0h1v1h-1zM111 0h1v1h-1zM7 1h1v1h-1zM12 1h1v1h-1zM15 1h1v1h-1zM23 1h1v1h-1zM25 1h1v1h-1zM29 1h2v1h-2zM32 1h1v1h-1zM34 1h2v1h-2zM37 1h2v1h-2zM40 1h1v1h-1zM47 1h1v1h-1zM49 1h2v1h-2zM52 1h2v1h-2zM57 1h1v1h-1zM59 1h1v1h-1zM66 1h2v1h-2zM74 1h1v1h-1zM76 1h1v1h-1zM80 1h2v1h-2zM93 1h2v1h-2zM96 1h1v1h-1zM103 1h1v1h-1zM108 1h1v1h-1zM115 1h1v1h-1zM118 1h1v1h-1zM120 1h2v1h-2zM123 1h2v1h-2zM128 1h1v1h-1zM7 2h2v1h-2zM10 2h4v1h-4zM16 2h1v1h-1zM18 2h1v1h-1zM22 2h5v1h-5zM29 2h4v1h-4zM34 2h1v1h-1zM38 2h1v1h-1zM40 2h1v1h-1zM43 2h1v1h-1zM45 2h3v1h-3zM50 2h1v1h-1zM53 2h1v1h-1zM57 2h1v1h-1zM59 2h1v1h-1zM61 2h1v1h-1zM64 2h2v1h-2zM67 2h1v1h-1zM71 2h1v1h-1zM75 2h1v1h-1zM79 2h1v1h-1zM81 2h2v1h-2zM84 2h1v1h-1zM86 2h1v1h-1zM91 2h3v1h-3zM98 2h5v1h-5zM107 2h1v1h-1zM111 2h1v1h-1zM113 2h1v1h-1zM117 2h1v1h-1zM125 2h1v1h-1zM1 3h1v1h-1zM4 3h2v1h-2zM8 3h1v1h-1zM10 3h3v1h-3zM14 3h1v1h-1zM18 3h2v1h-2zM21 3h3v1h-3zM25 3h1v1h-1zM27 3h1v1h-1zM30 3h2v1h-2zM33 3h1v1h-1zM37 3h1v1h-1zM40 3h4v1h-4zM45 3h3v1h-3zM49 3h1v1h-1zM51 3h2v1h-2zM54 3h4v1h-4zM59 3h2v1h-2zM62 3h1v1h-1zM64 3h4v1h-4zM71 3h3v1h-3zM75 3h2v1h-2zM78 3h1v1h-1zM81 3h2v1h-2zM84 3h2v1h-2zM88 3h2v1h-2zM91 3h2v1h-2zM94 3h1v1h-1zM96 3h7v1h-7zM106 3h1v1h-1zM108 3h2v1h-2zM111 3h2v1h-2zM114 3h3v1h-3zM118 3h3v1h-3zM122 3h1v1h-1zM124 3h1v1h-1zM126 3h2v1h-2zM6 4h2v1h-2zM10 4h2v1h-2zM13 4h10v1h-10zM24 4h2v1h-2zM27 4h5v1h-5zM33 4h11v1h-11zM45 4h2v1h-2zM48 4h3v1h-3zM52 4h2v1h-2zM56 4h2v1h-2zM59 4h1v1h-1zM61 4h4v1h-4zM67 4h2v1h-2zM70 4h3v1h-3zM74 4h6v1h-6zM81 4h2v1h-2zM84 4h4v1h-4zM89 4h3v1h-3zM94 4h10v1h-10zM105 4h1v1h-1zM108 4h4v1h-4zM113 4h1v1h-1zM115 4h6v1h-6zM122 4h7v1h-7zM131 4h1v1h-1zM2 5h1v1h-1zM4 5h2v1h-2zM7 5h2v1h-2zM10 5h2v1h-2zM13 5h6v1h-6zM20 5h3v1h-3zM25 5h2v1h-2zM28 5h7v1h-7zM36 5h14v1h-14zM51 5h3v1h-3zM56 5h5v1h-5zM62 5h1v1h-1zM64 5h3v1h-3zM68 5h5v1h-5zM74 5h37v1h-37zM112 5h7v1h-7zM120 5h1v1h-1zM122 5h7v1h-7zM131 5h1v1h-1zM1 6h2v1h-2zM4 6h7v1h-7zM12 6h15v1h-15zM28 6h2v1h-2zM31 6h1v1h-1zM33 6h1v1h-1zM35 6h13v1h-13zM49 6h13v1h-13zM63 6h3v1h-3zM67 6h6v1h-6zM74 6h2v1h-2zM77 6h23v1h-23zM101 6h17v1h-17zM120 6h6v1h-6zM127 6h1v1h-1zM2 7h1v1h-1zM4 7h6v1h-6zM12 7h5v1h-5zM18 7h1v1h-1zM20 7h1v1h-1zM23 7h20v1h-20zM44 7h1v1h-1zM46 7h2v1h-2zM49 7h12v1h-12zM62 7h10v1h-10zM73 7h12v1h-12zM86 7h5v1h-5zM92 7h12v1h-12zM105 7h2v1h-2zM108 7h1v1h-1zM110 7h3v1h-3zM114 7h5v1h-5zM120 7h9v1h-9zM2 8h1v1h-1zM4 8h17v1h-17zM22 8h20v1h-20zM45 8h6v1h-6zM52 8h2v1h-2zM55 8h22v1h-22zM78 8h8v1h-8zM87 8h16v1h-16zM104 8h7v1h-7zM112 8h3v1h-3zM118 8h5v1h-5zM124 8h5v1h-5zM130 8h1v1h-1zM1 9h11v1h-11zM13 9h22v1h-22zM36 9h4v1h-4zM41 9h4v1h-4zM46 9h30v1h-30zM77 9h1v1h-1zM79 9h1v1h-1zM81 9h8v1h-8zM90 9h29v1h-29zM120 9h3v1h-3zM124 9h4v1h-4zM2 10h1v1h-1zM4 10h2v1h-2zM7 10h20v1h-20zM28 10h3v1h-3zM32 10h1v1h-1zM34 10h10v1h-10zM45 10h8v1h-8zM54 10h7v1h-7zM62 10h1v1h-1zM64 10h6v1h-6zM71 10h12v1h-12zM84 10h3v1h-3zM88 10h13v1h-13zM102 10h7v1h-7zM110 10h6v1h-6zM117 10h2v1h-2zM120 10h7v1h-7zM2 11h1v1h-1zM4 11h5v1h-5zM10 11h8v1h-8zM20 11h4v1h-4zM25 11h4v1h-4zM30 11h1v1h-1zM32 11h3v1h-3zM36 11h5v1h-5zM43 11h6v1h-6zM50 11h1v1h-1zM53 11h5v1h-5zM60 11h6v1h-6zM67 11h3v1h-3zM71 11h1v1h-1zM73 11h10v1h-10zM84 11h6v1h-6zM91 11h11v1h-11zM103 11h3v1h-3zM107 11h1v1h-1zM110 11h7v1h-7zM118 11h5v1h-5zM124 11h2v1h-2zM127 11h1v1h-1zM1 12h1v1h-1zM4 12h2v1h-2zM7 12h2v1h-2zM10 12h1v1h-1zM14 12h2v1h-2zM17 12h3v1h-3zM24 12h8v1h-8zM33 12h2v1h-2zM40 12h1v1h-1zM42 12h3v1h-3zM48 12h5v1h-5zM56 12h2v1h-2zM60 12h3v1h-3zM64 12h8v1h-8zM73 12h1v1h-1zM76 12h2v1h-2zM80 12h1v1h-1zM82 12h1v1h-1zM85 12h3v1h-3zM89 12h5v1h-5zM96 12h2v1h-2zM100 12h2v1h-2zM104 12h4v1h-4zM113 12h3v1h-3zM117 12h1v1h-1zM120 12h8v1h-8zM131 12h1v1h-1zM7 13h4v1h-4zM13 13h1v1h-1zM17 13h1v1h-1zM26 13h1v1h-1zM28 13h1v1h-1zM31 13h1v1h-1zM37 13h2v1h-2zM49 13h4v1h-4zM57 13h4v1h-4zM62 13h1v1h-1zM64 13h4v1h-4zM71 13h1v1h-1zM75 13h2v1h-2zM78 13h2v1h-2zM81 13h2v1h-2zM85 13h2v1h-2zM92 13h2v1h-2zM96 13h1v1h-1zM100 13h1v1h-1zM102 13h2v1h-2zM105 13h1v1h-1zM107 13h1v1h-1zM113 13h1v1h-1zM115 13h1v1h-1zM122 13h1v1h-1zM125 13h2v1h-2zM6 14h2v1h-2zM9 14h2v1h-2zM15 14h1v1h-1zM24 14h1v1h-1zM29 14h1v1h-1zM31 14h1v1h-1zM34 14h1v1h-1zM37 14h2v1h-2zM40 14h1v1h-1zM42 14h4v1h-4zM50 14h1v1h-1zM52 14h1v1h-1zM57 14h1v1h-1zM59 14h1v1h-1zM61 14h1v1h-1zM67 14h2v1h-2zM71 14h1v1h-1zM73 14h1v1h-1zM76 14h1v1h-1zM79 14h1v1h-1zM85 14h1v1h-1zM96 14h1v1h-1zM98 14h1v1h-1zM100 14h1v1h-1zM108 14h1v1h-1zM111 14h1v1h-1zM115 14h1v1h-1zM117 14h1v1h-1zM124 14h2v1h-2zM7 15h1v1h-1zM24 15h1v1h-1zM26 15h1v1h-1zM35 15h1v1h-1zM37 15h1v1h-1zM52 15h1v1h-1zM59 15h1v1h-1zM62 15h1v1h-1zM76 15h1v1h-1zM107 15h1v1h-1zM110 15h1v1h-1zM117 15h1v1h-1zM120 15h1v1h-1z" fill="#000"/></svg>
<div class="lbl" style="left:411px;top:218px">2020 г.</div>
<div class="lbl" style="left:534px;top:218px">Активно</div>
<div class="lbl" style="left:719px;top:218px">СТВ</div>
<div class="lbl" style="left:904px;top:218px">Грузовой</div>
<div class="lbl" style="left:1138px;top:218px">Роман</div>
<svg class="abs" style="left:1083px;top:216px" width="55" height="15" viewBox="0 0 55 15" shape-rendering="crispEdges"><path d="M6 0h1v1h-1zM8 0h2v1h-2zM18 0h1v1h-1zM30 0h1v1h-1zM38 0h1v1h-1zM6 1h2v1h-2zM15 1h1v1h-1zM17 1h1v1h-1zM24 1h3v1h-3zM28 1h1v1h-1zM32 1h1v1h-1zM39 1h3v1h-3zM45 1h1v1h-1zM51 1h1v1h-1zM8 2h1v1h-1zM16 2h1v1h-1zM21 2h1v1h-1zM24 2h1v1h-1zM26 2h1v1h-1zM28 2h1v1h-1zM30 2h2v1h-2zM33 2h1v1h-1zM37 2h1v1h-1zM40 2h2v1h-2zM1 3h1v1h-1zM7 3h6v1h-6zM14 3h2v1h-2zM18 3h6v1h-6zM25 3h6v1h-6zM32 3h3v1h-3zM36 3h1v1h-1zM42 3h5v1h-5zM48 3h3v1h-3zM3 4h1v1h-1zM6 4h2v1h-2zM10 4h3v1h-3zM15 4h1v1h-1zM17 4h1v1h-1zM20 4h4v1h-4zM26 4h3v1h-3zM31 4h7v1h-7zM39 4h9v1h-9zM51 4h1v1h-1zM53 4h1v1h-1zM4 5h1v1h-1zM6 5h4v1h-4zM11 5h2v1h-2zM14 5h7v1h-7zM22 5h9v1h-9zM33 5h4v1h-4zM39 5h4v1h-4zM44 5h5v1h-5zM50 5h2v1h-2zM53 5h1v1h-1zM0 6h1v1h-1zM3 6h17v1h-17zM21 6h2v1h-2zM24 6h1v1h-1zM26 6h15v1h-15zM43 6h9v1h-9zM0 7h1v1h-1zM6 7h2v1h-2zM9 7h26v1h-26zM36 7h2v1h-2zM39 7h13v1h-13zM53 7h1v1h-1zM5 8h5v1h-5zM11 8h3v1h-3zM15 8h10v1h-10zM26 8h2v1h-2zM29 8h1v1h-1zM31 8h6v1h-6zM38 8h6v1h-6zM45 8h6v1h-6zM0 9h1v1h-1zM2 9h2v1h-2zM5 9h4v1h-4zM11 9h1v1h-1zM13 9h2v1h-2zM16 9h2v1h-2zM19 9h2v1h-2zM22 9h15v1h-15zM38 9h1v1h-1zM41 9h8v1h-8zM50 9h1v1h-1zM4 10h4v1h-4zM9 10h4v1h-4zM15 10h15v1h-15zM31 10h2v1h-2zM34 10h2v1h-2zM38 10h6v1h-6zM45 10h1v1h-1zM47 10h1v1h-1zM49 10h2v1h-2zM52 10h1v1h-1zM2 11h1v1h-1zM5 11h2v1h-2zM12 11h1v1h-1zM14 11h3v1h-3zM19 11h8v1h-8zM28 11h1v1h-1zM31 11h1v1h-1zM34 11h4v1h-4zM42 11h2v1h-2zM45 11h2v1h-2zM49 11h1v1h-1zM51 11h1v1h-1zM8 12h1v1h-1zM22 12h1v1h-1zM25 12h3v1h-3zM30 12h5v1h-5zM36 12h1v1h-1zM38 12h1v1h-1zM41 12h3v1h-3zM46 12h2v1h-2zM50 12h1v1h-1zM6 13h1v1h-1zM10 13h1v1h-1zM15 13h1v1h-1zM20 13h2v1h-2zM24 13h3v1h-3zM41 13h1v1h-1zM43 13h1v1h-1zM47 13h1v1h-1zM50 13h1v1h-1zM5 14h1v1h-1zM14 14h1v1h-1zM20 14h1v1h-1zM26 14h1v1h-1zM32 14h1v1h-1z" fill="#000"/></svg>
<svg class="abs" style="left:1165px;top:216px" width="87" height="17" viewBox="0 0 87 17" shape-rendering="crispEdges"><path d="M4 0h1v1h-1zM8 0h1v1h-1zM11 0h2v1h-2zM14 0h1v1h-1zM18 0h1v1h-1zM22 0h1v1h-1zM30 0h1v1h-1zM44 0h1v1h-1zM46 0h1v1h-1zM49 0h1v1h-1zM57 0h1v1h-1zM59 0h1v1h-1zM64 0h2v1h-2zM70 0h1v1h-1zM72 0h1v1h-1zM77 0h2v1h-2zM10 1h2v1h-2zM17 1h4v1h-4zM22 1h1v1h-1zM33 1h1v1h-1zM40 1h3v1h-3zM45 1h1v1h-1zM48 1h1v1h-1zM52 1h1v1h-1zM55 1h2v1h-2zM58 1h1v1h-1zM61 1h1v1h-1zM64 1h1v1h-1zM69 1h1v1h-1zM74 1h1v1h-1zM76 1h1v1h-1zM78 1h1v1h-1zM81 1h1v1h-1zM2 2h1v1h-1zM5 2h3v1h-3zM9 2h1v1h-1zM12 2h1v1h-1zM22 2h1v1h-1zM25 2h1v1h-1zM28 2h1v1h-1zM31 2h1v1h-1zM33 2h1v1h-1zM35 2h1v1h-1zM39 2h1v1h-1zM43 2h4v1h-4zM50 2h2v1h-2zM54 2h5v1h-5zM65 2h6v1h-6zM72 2h1v1h-1zM74 2h1v1h-1zM84 2h1v1h-1zM4 3h4v1h-4zM11 3h1v1h-1zM13 3h1v1h-1zM15 3h2v1h-2zM18 3h1v1h-1zM20 3h5v1h-5zM27 3h1v1h-1zM29 3h4v1h-4zM34 3h2v1h-2zM38 3h7v1h-7zM46 3h2v1h-2zM50 3h1v1h-1zM58 3h1v1h-1zM62 3h6v1h-6zM69 3h1v1h-1zM74 3h2v1h-2zM82 3h1v1h-1zM0 4h1v1h-1zM5 4h3v1h-3zM9 4h10v1h-10zM20 4h1v1h-1zM22 4h1v1h-1zM24 4h1v1h-1zM26 4h2v1h-2zM29 4h8v1h-8zM39 4h2v1h-2zM42 4h1v1h-1zM44 4h1v1h-1zM46 4h1v1h-1zM48 4h2v1h-2zM51 4h2v1h-2zM54 4h6v1h-6zM61 4h6v1h-6zM70 4h1v1h-1zM72 4h1v1h-1zM74 4h5v1h-5zM82 4h1v1h-1zM4 5h25v1h-25zM30 5h4v1h-4zM35 5h7v1h-7zM43 5h3v1h-3zM47 5h4v1h-4zM52 5h14v1h-14zM67 5h10v1h-10zM78 5h3v1h-3zM86 5h1v1h-1zM1 6h1v1h-1zM4 6h7v1h-7zM12 6h3v1h-3zM16 6h6v1h-6zM24 6h13v1h-13zM38 6h11v1h-11zM50 6h20v1h-20zM71 6h2v1h-2zM75 6h9v1h-9zM3 7h3v1h-3zM7 7h11v1h-11zM19 7h20v1h-20zM41 7h10v1h-10zM52 7h2v1h-2zM55 7h16v1h-16zM72 7h9v1h-9zM82 7h1v1h-1zM84 7h1v1h-1zM3 8h2v1h-2zM6 8h10v1h-10zM17 8h2v1h-2zM21 8h10v1h-10zM32 8h2v1h-2zM35 8h7v1h-7zM43 8h10v1h-10zM54 8h1v1h-1zM56 8h1v1h-1zM58 8h6v1h-6zM65 8h3v1h-3zM69 8h1v1h-1zM71 8h12v1h-12zM85 8h1v1h-1zM0 9h1v1h-1zM3 9h5v1h-5zM9 9h9v1h-9zM19 9h6v1h-6zM26 9h10v1h-10zM37 9h20v1h-20zM58 9h12v1h-12zM71 9h2v1h-2zM75 9h1v1h-1zM77 9h3v1h-3zM81 9h2v1h-2zM84 9h1v1h-1zM1 10h1v1h-1zM3 10h2v1h-2zM7 10h6v1h-6zM14 10h1v1h-1zM16 10h17v1h-17zM34 10h3v1h-3zM39 10h7v1h-7zM47 10h1v1h-1zM49 10h2v1h-2zM52 10h5v1h-5zM59 10h2v1h-2zM63 10h1v1h-1zM65 10h5v1h-5zM71 10h4v1h-4zM77 10h4v1h-4zM82 10h3v1h-3zM2 11h1v1h-1zM4 11h11v1h-11zM17 11h1v1h-1zM19 11h2v1h-2zM22 11h11v1h-11zM34 11h4v1h-4zM39 11h15v1h-15zM56 11h7v1h-7zM64 11h2v1h-2zM67 11h1v1h-1zM69 11h9v1h-9zM80 11h3v1h-3zM7 12h3v1h-3zM11 12h3v1h-3zM16 12h3v1h-3zM22 12h1v1h-1zM24 12h1v1h-1zM26 12h1v1h-1zM28 12h2v1h-2zM31 12h5v1h-5zM38 12h1v1h-1zM40 12h3v1h-3zM44 12h1v1h-1zM46 12h1v1h-1zM48 12h11v1h-11zM61 12h1v1h-1zM63 12h3v1h-3zM68 12h3v1h-3zM73 12h2v1h-2zM76 12h1v1h-1zM78 12h1v1h-1zM81 12h2v1h-2zM4 13h1v1h-1zM7 13h2v1h-2zM10 13h1v1h-1zM12 13h3v1h-3zM16 13h1v1h-1zM20 13h5v1h-5zM26 13h4v1h-4zM31 13h2v1h-2zM35 13h1v1h-1zM39 13h1v1h-1zM42 13h1v1h-1zM45 13h1v1h-1zM49 13h1v1h-1zM51 13h4v1h-4zM57 13h2v1h-2zM61 13h1v1h-1zM63 13h2v1h-2zM68 13h1v1h-1zM70 13h1v1h-1zM73 13h3v1h-3zM77 13h1v1h-1zM79 13h1v1h-1zM81 13h1v1h-1zM4 14h1v1h-1zM9 14h4v1h-4zM15 14h2v1h-2zM18 14h1v1h-1zM21 14h2v1h-2zM26 14h1v1h-1zM28 14h1v1h-1zM30 14h1v1h-1zM32 14h2v1h-2zM35 14h3v1h-3zM39 14h2v1h-2zM42 14h3v1h-3zM46 14h1v1h-1zM49 14h1v1h-1zM51 14h3v1h-3zM55 14h1v1h-1zM63 14h1v1h-1zM65 14h1v1h-1zM68 14h2v1h-2zM71 14h2v1h-2zM74 14h1v1h-1zM76 14h1v1h-1zM78 14h1v1h-1zM84 14h1v1h-1zM7 15h1v1h-1zM9 15h1v1h-1zM15 15h1v1h-1zM46 15h1v1h-1zM48 15h1v1h-1zM53 15h1v1h-1zM55 15h2v1h-2zM61 15h1v1h-1zM64 15h1v1h-1zM75 15h1v1h-1zM78 15h1v1h-1zM9 16h1v1h-1zM15 16h1v1h-1zM18 16h1v1h-1zM32 16h1v1h-1zM42 16h1v1h-1zM47 16h1v1h-1zM51 16h1v1h-1zM64 16h1v1h-1z" fill="#000"/></svg>
<svg class="abs" style="left:385px;top:217px" width="17" height="17" viewBox="0 0 17 17"><rect x="1" y="2.5" width="15" height="13" rx="1.5" fill="none" stroke="#222" stroke-width="1.1" stroke-linecap="round" stroke-linejoin="round"/><path d="M1 6h15M4.5 1v3M8.5 1v3M12.5 1v3M7.5 9.5l1.2-.8V13" fill="none" stroke="#222" stroke-width="1.1" stroke-linecap="round" stroke-linejoin="round"/></svg>
<svg class="abs" style="left:507px;top:217px" width="17" height="17" viewBox="0 0 17 17"><path d="M8.5 1.2l6 2.2v4.8c0 4-2.8 6.5-6 7.8-3.2-1.3-6-3.8-6-7.8V3.4z M5.5 8.5l2.2 2.2 4-4" fill="none" stroke="#2fbf71" stroke-width="1.2" stroke-linejoin="round"/></svg>
<svg class="abs" style="left:692px;top:217px" width="18" height="17" viewBox="0 0 18 17"><circle cx="6.5" cy="7.5" r="3" fill="none" stroke="#222" stroke-width="1.1" stroke-linecap="round" stroke-linejoin="round"/><circle cx="12.5" cy="4" r="2.6" fill="none" stroke="#222" stroke-width="1.1" stroke-linecap="round" stroke-linejoin="round"/><path d="M1 15.5c0-3 2.5-5 5.5-5 1.2 0 2.3.3 3.2.9M11 8.5c.6-.3 1-.4 1.5-.4 2.2 0 4 1.7 4.5 4M9 14l2 2 4-4" fill="none" stroke="#222" stroke-width="1.1" stroke-linecap="round" stroke-linejoin="round"/></svg>
<svg class="abs" style="left:877px;top:217px" width="18" height="14" viewBox="0 0 18 14"><rect x="1.5" y="1.5" width="15" height="9" rx="2" fill="none" stroke="#222" stroke-width="1.1" stroke-linecap="round" stroke-linejoin="round"/><path d="M1.5 5h15M5 1.5V5M9 1.5V5M13 1.5V5M3.5 10.5v2h2v-2M12.5 10.5v2h2v-2" fill="none" stroke="#222" stroke-width="1.1" stroke-linecap="round" stroke-linejoin="round"/></svg>
<svg class="abs" style="left:1062px;top:217px" width="17" height="17" viewBox="0 0 17 17"><circle cx="8.5" cy="5" r="3.8" fill="none" stroke="#222" stroke-width="1.1" stroke-linecap="round" stroke-linejoin="round"/><path d="M1.5 16c0-3.8 3-6 7-6s7 2.2 7 6z" fill="none" stroke="#222" stroke-width="1.1" stroke-linecap="round" stroke-linejoin="round"/></svg>

<!-- QUICK ADD -->
<div class="abs" style="left:265px;top:294px;width:270px;height:28px;border-radius:14px;background:#67c34f;color:#fff;font-size:12px;line-height:28px;text-align:center">Быстрое добавление</div>

<!-- SUBMENU -->
<div class="abs" style="left:534px;top:342px;width:1px;height:666px;background:#e6e6e6"></div>
<div class="sm" style="top:342px;background:#646f7e;width:269px;border-left:2px solid #409eff;color:#fff"><svg viewBox="0 0 18 18" style="left:31px;width:17px;height:17px;margin-top:-10px"><path d="M16.9 4.5V2.6a1.5 1.5 0 0 0-1.5-1.5H2.6a1.5 1.5 0 0 0-1.5 1.5v10.5a1.5 1.5 0 0 0 1.5 1.5h12.8a1.5 1.5 0 0 0 1.5-1.5V10.5M9 14.6v2M4.2 17.1h9.6M3.4 7.6l2.9-2.9 6.5 5.9 3-3M6.3 12V4.7M4.6 6.4l1.7-1.7 1.7 1.7M13 3v7.5M11.3 8.9l1.7 1.7 1.7-1.7" fill="none" stroke="#e6e9ee" stroke-width="1.1" stroke-linecap="round" stroke-linejoin="round"/></svg><span class="t" style="left:62px">О ТС</span></div>
<div class="sm" style="top:379px"><svg viewBox="0 0 18 18"><path d="M1.5 13a7.5 7.5 0 0 1 15 0v1.5h-15z M5 11l2 1M9 7.5v2M13 11l-2 1M9 13l2.5-3.5" fill="none" stroke="#333" stroke-width="1.1" stroke-linecap="round" stroke-linejoin="round"/></svg><span class="t">Показания счетчика</span></div>
<div class="sm" style="top:416px"><svg viewBox="0 0 18 18"><path d="M4 13V8a5 5 0 0 1 10 0v5l1.5 2h-13z M7.5 15.5a1.5 1.5 0 0 0 3 0 M9 2v1" fill="none" stroke="#333" stroke-width="1.1" stroke-linecap="round" stroke-linejoin="round"/></svg><span class="t">Напоминания по ТС</span></div>
<div class="sm" style="top:453px"><svg viewBox="0 0 18 18"><path d="M3 16V3a1 1 0 0 1 1-1h6a1 1 0 0 1 1 1v13M2 16.5h10M5 4.5h4v3H5zM11 7l2.5 1.5v5a1 1 0 0 0 2 0V6L13 3.5" fill="none" stroke="#333" stroke-width="1.1" stroke-linecap="round" stroke-linejoin="round"/></svg><span class="t">Заправки</span></div>
<div class="sm" style="top:490px"><svg viewBox="0 0 18 18"><path d="M3.1 7.8h13.8v9H3.1zM3.1 15.6H1.2a.9.9 0 0 1-.9-.9V7.8a.9.9 0 0 1 .9-.9C3 6 5 6.5 7 6s3-1.5 4.5-1c1 .3 2-1 2-1v3.8M5 13.7V9.5h1.2a1 1 0 0 1 0 2H4.4M7 14.8h8" fill="none" stroke="#333" stroke-width="1.1" stroke-linecap="round" stroke-linejoin="round"/><ellipse cx="11.8" cy="11.4" rx=".9" ry="1.5" fill="none" stroke="#333" stroke-width="1.1" stroke-linecap="round" stroke-linejoin="round"/><ellipse cx="13.9" cy="11.4" rx=".9" ry="1.5" fill="none" stroke="#333" stroke-width="1.1" stroke-linecap="round" stroke-linejoin="round"/></svg><span class="t">Доп расходы</span></div>
<div class="sm" style="top:527px"><svg viewBox="0 0 18 18"><path d="M3 16h12M4 16v-6a5 5 0 0 1 10 0v6M9 11v3" fill="none" stroke="#333" stroke-width="1.1" stroke-linecap="round" stroke-linejoin="round"/><circle cx="9" cy="11" r="1.3" fill="none" stroke="#333" stroke-width="1.1" stroke-linecap="round" stroke-linejoin="round"/><path d="M9 1.5v1.5M2 4l1.2 1M16 4l-1.2 1" fill="none" stroke="#333" stroke-width="1.1" stroke-linecap="round" stroke-linejoin="round"/></svg><span class="t">Проблемы</span></div>
<div class="sm" style="top:564px"><svg viewBox="0 0 18 18"><path d="M2 9L9 2.5 16 9v7H2z" fill="none" stroke="#333" stroke-width="1.1" stroke-linecap="round" stroke-linejoin="round"/><path d="M6 7.5a3 3 0 0 0 4 4l3 3 1.2-1.2-3-3a3 3 0 0 0-4-4l1.5 1.5-1 1z" fill="none" stroke="#333" stroke-width="1.1" stroke-linecap="round" stroke-linejoin="round"/></svg><span class="t">Сервисные записи</span></div>
<div class="sm" style="top:601px"><svg viewBox="0 0 18 18"><path d="M2 9L9 2.5 16 9v7H2z" fill="none" stroke="#333" stroke-width="1.1" stroke-linecap="round" stroke-linejoin="round"/><path d="M6 7.5a3 3 0 0 0 4 4l3 3 1.2-1.2-3-3a3 3 0 0 0-4-4l1.5 1.5-1 1z" fill="none" stroke="#333" stroke-width="1.1" stroke-linecap="round" stroke-linejoin="round"/></svg><span class="t">Заказ-наряды</span></div>
<div class="sm" style="top:638px"><svg viewBox="0 0 18 18"><path d="M2 2l3 1 9 9.5 1.5 3-1.5 1-3-1.5L2 5.5zM15.5 2.5a3 3 0 0 0-4 3.5L2.5 14.5l1 1 8.5-8.5a3 3 0 0 0 3.5-4l-2 2-1-1z" fill="none" stroke="#333" stroke-width="1.1" stroke-linecap="round" stroke-linejoin="round"/></svg><span class="t">Запчасти</span></div>
<div class="sm" style="top:675px"><svg viewBox="0 0 18 18"><path d="M3 3.5h13.5v10H3zM1.5 5v10.5h13M3 12l4-4.5 3 3 2-2 4.5 4" fill="none" stroke="#333" stroke-width="1.1" stroke-linecap="round" stroke-linejoin="round"/><circle cx="13" cy="6" r="1.2" fill="none" stroke="#333" stroke-width="1.1" stroke-linecap="round" stroke-linejoin="round"/></svg><span class="t">Фото и файлы</span></div>
<div class="sm" style="top:712px"><svg viewBox="0 0 18 18"><path d="M3 1.5h8.5L15 5v11.5H3zM5 5h2M5 8.5h2M5 12h2M9 5h4M9 8.5h4M9 12h4" fill="none" stroke="#333" stroke-width="1.1" stroke-linecap="round" stroke-linejoin="round"/></svg><span class="t">Спецификации</span></div>
<div class="sm" style="top:749px"><svg viewBox="0 0 18 18"><path d="M1.5 17h15" fill="none" stroke="#333" stroke-width="1.1" stroke-linecap="round" stroke-linejoin="round"/><path d="M2.3 12.5h2.4v4.5H2.3zM6.3 10h2.4v7H6.3zM10.3 11.5h2.4v5.5h-2.4zM14.3 7h2.4v10h-2.4z" fill="#333"/><path d="M2.5 9.5L7 5.5l4 3 5-5" fill="none" stroke="#333" stroke-width="1.1" stroke-linecap="round" stroke-linejoin="round"/><circle cx="16" cy="3.5" r="1.2" fill="#333"/></svg><span class="t">Поиск аномалий</span></div>
<div class="sm" style="top:786px"><svg viewBox="0 0 18 18"><path d="M9 8s-2.5-2.5-2.5-4.5a2.5 2.5 0 0 1 5 0C11.5 5.5 9 8 9 8zM5 8l-3.5 8.5h15L13 8M7 16.5l3-4-2-2.5" fill="none" stroke="#333" stroke-width="1.1" stroke-linecap="round" stroke-linejoin="round"/></svg><span class="t">Местоположение</span></div>
<div class="sm" style="top:823px"><svg viewBox="0 0 18 18"><circle cx="9" cy="5.5" r="4" fill="none" stroke="#333" stroke-width="1.1" stroke-linecap="round" stroke-linejoin="round"/><path d="M1.5 16.5c0-4 3.3-6.5 7.5-6.5s7.5 2.5 7.5 6.5z" fill="none" stroke="#333" stroke-width="1.1" stroke-linecap="round" stroke-linejoin="round"/></svg><span class="t">Назначения на ТС</span></div>
<div class="sm" style="top:860px"><svg viewBox="0 0 18 18"><circle cx="6.5" cy="8" r="3" fill="none" stroke="#333" stroke-width="1.1" stroke-linecap="round" stroke-linejoin="round"/><circle cx="12.5" cy="4" r="2.8" fill="none" stroke="#333" stroke-width="1.1" stroke-linecap="round" stroke-linejoin="round"/><path d="M1 16.5c0-3 2.5-5 5.5-5 1.2 0 2.3.3 3.2.9M11 8.5c.6-.3 1-.4 1.5-.4 2.2 0 4 1.7 4.5 4M9 15l2 2 4-4" fill="none" stroke="#333" stroke-width="1.1" stroke-linecap="round" stroke-linejoin="round"/></svg><span class="t">Наблюдатели за ТС</span></div>
<div class="sm" style="top:897px"><svg viewBox="0 0 18 18"><path d="M2 11l2-4.5h10l2 4.5v4H2zM2 11h14M4 15v1.5h2.5V15M11.5 15v1.5H14V15M5 13h1M12 13h1M6.5 4.5h5M9 1.5v1.5M5 2l1 1M13 2l-1 1" fill="none" stroke="#333" stroke-width="1.1" stroke-linecap="round" stroke-linejoin="round"/></svg><span class="t">Штрафы ГИБДД</span></div>
<div class="sm" style="top:934px"><svg viewBox="0 0 18 18"><path d="M1.5 4h10M1.5 4v9h3v3l3-3h7v-4M4 7.5h4M4 10h5M9 10.5l1-3L15.5 2l1.5 1.5L11.5 9z" fill="none" stroke="#333" stroke-width="1.1" stroke-linecap="round" stroke-linejoin="round"/></svg><span class="t">Комментарии</span></div>
<div class="sm" style="top:971px"><svg viewBox="0 0 18 18"><path d="M.5 17.5h16.8M1.2 17.3l1.6-3.3c2-.7 4.2-.3 5.6 1.3 1.4-1.6 3.6-2 5.6-1.3l1.6 3.3M2.5 16c2-.5 4.2 0 5.9 1.3 1.7-1.3 3.9-1.8 5.9-1.3M8.4 12.3c-.5-3 1.5-7.5 5.6-10.6.4 3.5-1.5 8-5.6 10.6zM8.4 12.3v2.8M10.3 9l2.3-4.3" fill="none" stroke="#333" stroke-width="1.1" stroke-linecap="round" stroke-linejoin="round"/></svg><span class="t">История</span></div>

<!-- CHART 1 -->
<div class="card" style="top:294px;height:352px">
  <div class="hd" style="height:55px;line-height:54px">Стоимость 1 км пути</div>
</div>
<svg class="abs" style="left:0;top:0" width="1920" height="1080" viewBox="0 0 1920 1080">
<line x1="614" y1="590.5" x2="1854" y2="590.5" stroke="#cfcfcf" stroke-width="1"/>
<text x="606" y="593.0" text-anchor="end" font-size="12" fill="#333" font-family="Liberation Sans">0</text>
<line x1="614" y1="558.5" x2="1854" y2="558.5" stroke="#cfcfcf" stroke-width="1"/>
<text x="606" y="561.0" text-anchor="end" font-size="12" fill="#333" font-family="Liberation Sans">50</text>
<line x1="614" y1="526.5" x2="1854" y2="526.5" stroke="#cfcfcf" stroke-width="1"/>
<text x="606" y="529.0" text-anchor="end" font-size="12" fill="#333" font-family="Liberation Sans">100</text>
<line x1="614" y1="494.5" x2="1854" y2="494.5" stroke="#cfcfcf" stroke-width="1"/>
<text x="606" y="497.0" text-anchor="end" font-size="12" fill="#333" font-family="Liberation Sans">150</text>
<line x1="614" y1="462.5" x2="1854" y2="462.5" stroke="#cfcfcf" stroke-width="1"/>
<text x="606" y="465.0" text-anchor="end" font-size="12" fill="#333" font-family="Liberation Sans">200</text>
<line x1="614" y1="430.5" x2="1854" y2="430.5" stroke="#cfcfcf" stroke-width="1"/>
<text x="606" y="433.0" text-anchor="end" font-size="12" fill="#333" font-family="Liberation Sans">250</text>
<line x1="614.0" y1="590.5" x2="614.0" y2="595.5" stroke="#cfcfcf"/>
<line x1="968.5" y1="590.5" x2="968.5" y2="595.5" stroke="#cfcfcf"/>
<line x1="1322.5" y1="590.5" x2="1322.5" y2="595.5" stroke="#cfcfcf"/>
<line x1="1677.0" y1="590.5" x2="1677.0" y2="595.5" stroke="#cfcfcf"/>
<line x1="1854.0" y1="590.5" x2="1854.0" y2="595.5" stroke="#cfcfcf"/>
<path d="M702.30 590.50 C702.30 590.50 804.13 590.50 879.70 590.50 C981.33 544.62 966.04 434.91 1056.70 430.50 C1143.19 430.50 1134.39 530.84 1234.00 573.28 C1311.54 590.50 1322.49 577.50 1411.00 581.48 C1499.64 585.46 1499.61 587.67 1588.30 589.22 C1676.76 590.50 1765.30 587.68 1765.30 587.68 L1765.3 590.5 L702.3 590.5 Z" fill="#4ee1c3"/>
<path d="M702.30 590.50 C702.30 590.50 804.13 590.50 879.70 590.50 C981.33 544.62 966.04 434.91 1056.70 430.50 C1143.19 430.50 1134.39 530.84 1234.00 573.28 C1311.54 590.50 1322.49 577.50 1411.00 581.48 C1499.64 585.46 1499.61 587.67 1588.30 589.22 C1676.76 590.50 1765.30 587.68 1765.30 587.68" fill="none" stroke="#14cca5" stroke-width="2"/>
<circle cx="702.3" cy="590.5" r="2" fill="#fff" stroke="#14cca5" stroke-width="1"/>
<circle cx="879.7" cy="590.5" r="2" fill="#fff" stroke="#14cca5" stroke-width="1"/>
<circle cx="1056.7" cy="430.5" r="2" fill="#fff" stroke="#14cca5" stroke-width="1"/>
<circle cx="1234.0" cy="573.3" r="2" fill="#fff" stroke="#14cca5" stroke-width="1"/>
<circle cx="1411.0" cy="581.5" r="2" fill="#fff" stroke="#14cca5" stroke-width="1"/>
<circle cx="1588.3" cy="589.2" r="2" fill="#fff" stroke="#14cca5" stroke-width="1"/>
<circle cx="1765.3" cy="587.7" r="2" fill="#fff" stroke="#14cca5" stroke-width="1"/>
<line x1="1411.5" y1="430" x2="1411.5" y2="590.5" stroke="#999" stroke-width="1"/>
<circle cx="1411" cy="581" r="5" fill="#fff" stroke="#14cca5" stroke-width="2"/>
<line x1="618" y1="563.3" x2="1845" y2="563.3" stroke="#14cca5" stroke-width="1.2" stroke-dasharray="4.5,3.5"/>
<circle cx="614" cy="563.3" r="4.5" fill="#14cca5"/>
<path d="M1838 557.8 L1854 563.3 L1838 568.8 L1842 563.3 Z" fill="#14cca5"/>
<svg x="1850" y="553.3" width="14" height="20" overflow="hidden"><text x="9" y="13" font-size="12" fill="#14cca5" font-family="Liberation Sans">4</text></svg>
<text x="702.3" y="607" text-anchor="middle" font-size="12" fill="#333" font-family="Liberation Sans">май 2020</text>
<text x="1056.7" y="607" text-anchor="middle" font-size="12" fill="#333" font-family="Liberation Sans">июль 2020</text>
<text x="1411.0" y="607" text-anchor="middle" font-size="12" fill="#333" font-family="Liberation Sans">сентябрь 2020</text>
<text x="1765.5" y="607" text-anchor="middle" font-size="12" fill="#333" font-family="Liberation Sans">1 ноября 2020 - 11 ноября 2020</text>
</svg>
<div class="abs" style="left:1379px;top:491px;width:130px;height:52px;background:rgba(50,50,50,.7);border-radius:4px;color:#fff;font-size:14px;line-height:21px;padding:5px 5px 0 5px;white-space:nowrap">сентябрь 2020<br><span style="display:inline-block;width:10px;height:10px;border-radius:50%;background:#14cca5;margin-right:5px;vertical-align:-1px"></span>Стоимость: 14.1</div>

<!-- CHART 2 -->
<div class="card" style="top:661px;height:351px">
  <div class="hd" style="height:55px;line-height:54px">Затраты</div>
</div>
<svg class="abs" style="left:0;top:0" width="1920" height="1080" viewBox="0 0 1920 1080">
<line x1="637.4" y1="957.5" x2="1854" y2="957.5" stroke="#cfcfcf" stroke-width="1"/>
<text x="629.5" y="960.0" text-anchor="end" font-size="12" fill="#333" font-family="Liberation Sans">0</text>
<line x1="637.4" y1="925.5" x2="1854" y2="925.5" stroke="#cfcfcf" stroke-width="1"/>
<text x="629.5" y="928.0" text-anchor="end" font-size="12" fill="#333" font-family="Liberation Sans">20,000</text>
<line x1="637.4" y1="893.5" x2="1854" y2="893.5" stroke="#cfcfcf" stroke-width="1"/>
<text x="629.5" y="896.0" text-anchor="end" font-size="12" fill="#333" font-family="Liberation Sans">40,000</text>
<line x1="637.4" y1="861.5" x2="1854" y2="861.5" stroke="#cfcfcf" stroke-width="1"/>
<text x="629.5" y="864.0" text-anchor="end" font-size="12" fill="#333" font-family="Liberation Sans">60,000</text>
<line x1="637.4" y1="829.5" x2="1854" y2="829.5" stroke="#cfcfcf" stroke-width="1"/>
<text x="629.5" y="832.0" text-anchor="end" font-size="12" fill="#333" font-family="Liberation Sans">80,000</text>
<line x1="637.4" y1="797.5" x2="1854" y2="797.5" stroke="#cfcfcf" stroke-width="1"/>
<text x="629.5" y="800.0" text-anchor="end" font-size="12" fill="#333" font-family="Liberation Sans">100,000</text>
<path d="M640.69 957.00 C640.69 957.00 643.98 957.00 647.26 957.00 C650.55 957.00 650.55 957.00 653.84 957.00 C657.13 957.00 657.13 957.00 660.42 957.00 C663.70 957.00 663.70 957.00 666.99 957.00 C670.28 957.00 670.28 957.00 673.57 957.00 C676.86 957.00 676.86 957.00 680.15 957.00 C683.43 957.00 683.43 957.00 686.72 957.00 C690.01 957.00 690.01 957.00 693.30 957.00 C696.59 957.00 696.59 957.00 699.87 957.00 C703.16 957.00 703.16 957.00 706.45 957.00 C709.74 957.00 709.74 957.00 713.03 957.00 C716.31 957.00 716.31 957.00 719.60 957.00 C722.89 957.00 722.89 957.00 726.18 957.00 C729.47 957.00 729.47 957.00 732.76 957.00 C736.04 957.00 736.04 957.00 739.33 957.00 C742.62 957.00 742.62 957.00 745.91 957.00 C749.20 957.00 749.20 957.00 752.48 957.00 C755.77 957.00 755.77 957.00 759.06 957.00 C762.35 957.00 762.35 957.00 765.64 957.00 C768.92 957.00 768.92 957.00 772.21 957.00 C775.50 957.00 775.50 957.00 778.79 957.00 C782.08 957.00 782.08 957.00 785.36 957.00 C788.65 957.00 788.65 957.00 791.94 957.00 C795.23 957.00 795.23 957.00 798.52 957.00 C801.81 957.00 801.81 957.00 805.09 957.00 C808.38 957.00 808.38 957.00 811.67 957.00 C814.96 957.00 814.96 957.00 818.25 957.00 C821.53 957.00 821.53 957.00 824.82 957.00 C828.11 957.00 828.11 957.00 831.40 957.00 C834.69 957.00 834.69 957.00 837.97 957.00 C841.26 957.00 841.26 957.00 844.55 957.00 C847.84 957.00 847.84 957.00 851.13 957.00 C854.42 957.00 854.42 957.00 857.70 957.00 C860.99 957.00 860.99 957.00 864.28 957.00 C867.57 957.00 867.57 957.00 870.86 957.00 C874.14 957.00 874.14 957.00 877.43 957.00 C880.72 957.00 880.72 957.00 884.01 957.00 C887.30 957.00 887.30 957.00 890.58 957.00 C893.87 957.00 893.87 957.00 897.16 957.00 C900.45 957.00 900.45 957.00 903.74 957.00 C907.02 957.00 907.02 957.00 910.31 957.00 C913.60 957.00 913.60 957.00 916.89 957.00 C920.18 957.00 920.18 957.00 923.47 957.00 C926.75 957.00 926.75 957.00 930.04 957.00 C933.33 957.00 933.33 957.00 936.62 957.00 C939.91 957.00 939.91 957.00 943.19 957.00 C946.48 957.00 946.48 957.00 949.77 957.00 C953.06 957.00 953.06 957.00 956.35 957.00 C959.63 957.00 959.63 957.00 962.92 957.00 C966.21 957.00 966.21 957.00 969.50 957.00 C972.79 957.00 972.79 957.00 976.08 957.00 C979.36 957.00 979.36 957.00 982.65 957.00 C985.94 957.00 985.94 957.00 989.23 957.00 C992.52 957.00 992.52 957.00 995.80 957.00 C999.09 957.00 999.09 957.00 1002.38 957.00 C1005.67 957.00 1005.67 957.00 1008.96 957.00 C1012.24 957.00 1012.24 957.00 1015.53 957.00 C1018.82 957.00 1018.82 957.00 1022.11 957.00 C1025.40 957.00 1025.40 957.00 1028.68 957.00 C1031.97 957.00 1031.97 957.00 1035.26 957.00 C1038.55 957.00 1038.55 957.00 1041.84 957.00 C1045.13 957.00 1045.13 957.00 1048.41 957.00 C1051.70 957.00 1051.70 957.00 1054.99 957.00 C1058.28 957.00 1058.28 957.00 1061.57 957.00 C1064.85 957.00 1064.85 957.00 1068.14 957.00 C1071.43 957.00 1071.43 957.00 1074.72 957.00 C1078.01 957.00 1078.01 957.00 1081.29 957.00 C1084.58 957.00 1084.58 957.00 1087.87 957.00 C1091.16 957.00 1091.16 957.00 1094.45 957.00 C1097.74 957.00 1097.74 957.00 1101.02 957.00 C1104.31 957.00 1104.31 957.00 1107.60 957.00 C1110.89 957.00 1110.89 957.00 1114.18 957.00 C1117.46 957.00 1117.46 957.00 1120.75 957.00 C1124.04 957.00 1124.04 957.00 1127.33 957.00 C1130.62 957.00 1130.62 957.00 1133.90 957.00 C1137.19 957.00 1137.19 957.00 1140.48 957.00 C1143.77 957.00 1143.77 957.00 1147.06 957.00 C1150.34 957.00 1150.34 957.00 1153.63 957.00 C1156.92 957.00 1156.92 957.00 1160.21 957.00 C1163.50 957.00 1163.50 957.00 1166.79 957.00 C1170.07 957.00 1170.07 957.00 1173.36 957.00 C1176.65 957.00 1176.65 957.00 1179.94 957.00 C1183.23 957.00 1183.23 957.00 1186.51 957.00 C1189.80 957.00 1189.80 957.00 1193.09 957.00 C1196.38 957.00 1196.38 957.00 1199.67 957.00 C1202.95 957.00 1202.95 957.00 1206.24 957.00 C1209.53 957.00 1211.68 957.00 1212.82 957.00 C1218.26 944.26 1215.58 941.46 1219.40 926.20 C1222.15 915.16 1224.00 899.77 1225.97 904.40 C1230.57 915.17 1226.70 933.60 1232.55 957.00 C1233.27 957.00 1235.84 957.00 1239.12 957.00 C1242.41 957.00 1244.58 957.00 1245.70 957.00 C1251.15 944.07 1248.99 925.80 1252.28 925.80 C1255.56 925.80 1253.40 944.07 1258.85 957.00 C1259.98 957.00 1262.14 957.00 1265.43 957.00 C1268.72 957.00 1268.72 957.00 1272.00 957.00 C1275.29 957.00 1277.45 957.00 1278.58 957.00 C1284.02 944.26 1283.43 941.82 1285.16 926.20 C1290.01 882.17 1288.93 831.14 1291.73 837.70 C1295.51 846.54 1292.08 900.46 1298.31 957.00 C1298.65 957.00 1301.60 957.00 1304.89 957.00 C1308.17 957.00 1308.17 957.00 1311.46 957.00 C1314.75 957.00 1317.09 957.00 1318.04 957.00 C1323.67 940.48 1321.33 918.40 1324.61 918.40 C1327.90 918.40 1325.56 940.48 1331.19 957.00 C1332.14 957.00 1337.13 957.00 1337.77 957.00 C1343.71 929.50 1341.06 896.10 1344.34 896.10 C1347.63 896.10 1344.98 929.50 1350.92 957.00 C1351.56 957.00 1354.21 957.00 1357.50 957.00 C1360.78 957.00 1360.78 957.00 1364.07 957.00 C1367.36 957.00 1367.36 957.00 1370.65 957.00 C1373.94 957.00 1376.95 957.00 1377.22 957.00 C1383.53 884.75 1380.51 806.20 1383.80 806.20 C1387.09 806.20 1384.08 884.75 1390.38 957.00 C1390.65 957.00 1393.66 957.00 1396.95 957.00 C1400.24 957.00 1400.24 957.00 1403.53 957.00 C1406.82 957.00 1406.82 957.00 1410.11 957.00 C1413.39 957.00 1415.87 957.00 1416.68 957.00 C1422.45 936.70 1419.97 910.70 1423.26 910.70 C1426.55 910.70 1425.90 952.37 1429.83 957.00 C1432.48 957.00 1434.82 941.84 1436.41 926.20 C1441.40 877.14 1440.14 820.94 1442.99 827.60 C1446.72 836.34 1443.30 895.43 1449.56 957.00 C1449.88 957.00 1452.85 957.00 1456.14 957.00 C1459.43 957.00 1461.59 957.00 1462.72 957.00 C1468.17 944.07 1466.00 925.80 1469.29 925.80 C1472.58 925.80 1470.42 944.07 1475.87 957.00 C1476.99 957.00 1481.81 957.00 1482.44 957.00 C1488.38 929.45 1485.73 896.00 1489.02 896.00 C1492.31 896.00 1489.66 929.45 1495.60 957.00 C1496.23 957.00 1498.88 957.00 1502.17 957.00 C1505.46 957.00 1505.46 957.00 1508.75 957.00 C1512.04 957.00 1514.12 957.00 1515.32 957.00 C1520.70 945.27 1518.61 928.30 1521.90 928.30 C1525.19 928.30 1525.19 957.00 1528.48 957.00 C1531.77 957.00 1531.77 928.30 1535.05 928.30 C1538.34 928.30 1536.25 945.27 1541.63 957.00 C1542.83 957.00 1546.28 957.00 1548.21 957.00 C1552.86 951.87 1551.49 942.50 1554.78 942.50 C1558.07 942.50 1558.63 957.00 1561.36 957.00 C1565.20 954.98 1565.09 946.42 1567.93 935.60 C1571.66 921.42 1572.09 903.06 1574.51 907.00 C1578.67 913.76 1575.27 934.88 1581.09 957.00 C1581.85 957.00 1584.38 957.00 1587.66 957.00 C1590.95 957.00 1590.95 957.00 1594.24 957.00 C1597.53 957.00 1597.53 957.00 1600.82 957.00 C1604.10 957.00 1604.10 957.00 1607.39 957.00 C1610.68 957.00 1610.68 957.00 1613.97 957.00 C1617.26 957.00 1617.26 957.00 1620.54 957.00 C1623.83 957.00 1623.83 957.00 1627.12 957.00 C1630.41 957.00 1630.41 957.00 1633.70 957.00 C1636.98 957.00 1636.98 957.00 1640.27 957.00 C1643.56 957.00 1643.56 957.00 1646.85 957.00 C1650.14 957.00 1650.14 957.00 1653.43 957.00 C1656.71 957.00 1656.71 957.00 1660.00 957.00 C1663.29 957.00 1663.29 957.00 1666.58 957.00 C1669.87 957.00 1669.87 957.00 1673.15 957.00 C1676.44 957.00 1676.44 957.00 1679.73 957.00 C1683.02 957.00 1683.02 957.00 1686.31 957.00 C1689.59 957.00 1689.59 957.00 1692.88 957.00 C1696.17 957.00 1699.10 957.00 1699.46 957.00 C1705.68 903.05 1702.75 842.90 1706.04 842.90 C1709.32 842.90 1706.39 903.05 1712.61 957.00 C1712.97 957.00 1715.90 957.00 1719.19 957.00 C1722.48 957.00 1724.89 957.00 1725.76 957.00 C1731.47 938.52 1729.05 914.40 1732.34 914.40 C1735.63 914.40 1735.84 957.00 1738.92 957.00 C1742.41 955.43 1742.20 908.50 1745.49 908.50 C1748.78 908.50 1746.27 935.62 1752.07 957.00 C1752.85 957.00 1755.36 957.00 1758.64 957.00 C1761.93 957.00 1761.93 957.00 1765.22 957.00 C1768.51 957.00 1769.87 957.00 1771.80 957.00 C1776.45 951.87 1775.09 942.50 1778.37 942.50 C1781.66 942.50 1780.30 951.87 1784.95 957.00 C1786.87 957.00 1788.24 957.00 1791.53 957.00 C1794.81 957.00 1794.81 957.00 1798.10 957.00 C1801.39 957.00 1801.39 957.00 1804.68 957.00 C1807.97 957.00 1809.78 957.00 1811.25 957.00 C1816.36 948.54 1814.54 935.20 1817.83 935.20 C1821.12 935.20 1822.54 957.00 1824.41 957.00 C1829.12 944.32 1827.70 899.80 1830.98 899.80 C1834.27 899.80 1831.66 931.33 1837.56 957.00 C1838.23 957.00 1840.85 957.00 1844.14 957.00 C1847.42 957.00 1850.71 957.00 1850.71 957.00 L1850.71 957.00 L640.69 957.00 Z" fill="#19d5ad" fill-opacity="0.75"/>
<path d="M640.69 957.00 C640.69 957.00 643.98 957.00 647.26 957.00 C650.55 957.00 650.55 957.00 653.84 957.00 C657.13 957.00 657.13 957.00 660.42 957.00 C663.70 957.00 663.70 957.00 666.99 957.00 C670.28 957.00 670.28 957.00 673.57 957.00 C676.86 957.00 676.86 957.00 680.15 957.00 C683.43 957.00 683.43 957.00 686.72 957.00 C690.01 957.00 690.01 957.00 693.30 957.00 C696.59 957.00 696.59 957.00 699.87 957.00 C703.16 957.00 703.16 957.00 706.45 957.00 C709.74 957.00 709.74 957.00 713.03 957.00 C716.31 957.00 716.31 957.00 719.60 957.00 C722.89 957.00 722.89 957.00 726.18 957.00 C729.47 957.00 729.47 957.00 732.76 957.00 C736.04 957.00 736.04 957.00 739.33 957.00 C742.62 957.00 742.62 957.00 745.91 957.00 C749.20 957.00 749.20 957.00 752.48 957.00 C755.77 957.00 755.77 957.00 759.06 957.00 C762.35 957.00 762.35 957.00 765.64 957.00 C768.92 957.00 768.92 957.00 772.21 957.00 C775.50 957.00 775.50 957.00 778.79 957.00 C782.08 957.00 782.08 957.00 785.36 957.00 C788.65 957.00 788.65 957.00 791.94 957.00 C795.23 957.00 795.23 957.00 798.52 957.00 C801.81 957.00 801.81 957.00 805.09 957.00 C808.38 957.00 808.38 957.00 811.67 957.00 C814.96 957.00 814.96 957.00 818.25 957.00 C821.53 957.00 821.53 957.00 824.82 957.00 C828.11 957.00 828.11 957.00 831.40 957.00 C834.69 957.00 834.69 957.00 837.97 957.00 C841.26 957.00 841.26 957.00 844.55 957.00 C847.84 957.00 847.84 957.00 851.13 957.00 C854.42 957.00 854.42 957.00 857.70 957.00 C860.99 957.00 860.99 957.00 864.28 957.00 C867.57 957.00 867.57 957.00 870.86 957.00 C874.14 957.00 874.14 957.00 877.43 957.00 C880.72 957.00 880.72 957.00 884.01 957.00 C887.30 957.00 887.30 957.00 890.58 957.00 C893.87 957.00 893.87 957.00 897.16 957.00 C900.45 957.00 900.45 957.00 903.74 957.00 C907.02 957.00 907.02 957.00 910.31 957.00 C913.60 957.00 913.60 957.00 916.89 957.00 C920.18 957.00 920.18 957.00 923.47 957.00 C926.75 957.00 926.75 957.00 930.04 957.00 C933.33 957.00 933.33 957.00 936.62 957.00 C939.91 957.00 939.91 957.00 943.19 957.00 C946.48 957.00 946.48 957.00 949.77 957.00 C953.06 957.00 953.06 957.00 956.35 957.00 C959.63 957.00 959.63 957.00 962.92 957.00 C966.21 957.00 966.21 957.00 969.50 957.00 C972.79 957.00 972.79 957.00 976.08 957.00 C979.36 957.00 979.36 957.00 982.65 957.00 C985.94 957.00 985.94 957.00 989.23 957.00 C992.52 957.00 992.52 957.00 995.80 957.00 C999.09 957.00 999.09 957.00 1002.38 957.00 C1005.67 957.00 1005.67 957.00 1008.96 957.00 C1012.24 957.00 1012.24 957.00 1015.53 957.00 C1018.82 957.00 1018.82 957.00 1022.11 957.00 C1025.40 957.00 1025.40 957.00 1028.68 957.00 C1031.97 957.00 1031.97 957.00 1035.26 957.00 C1038.55 957.00 1038.55 957.00 1041.84 957.00 C1045.13 957.00 1045.13 957.00 1048.41 957.00 C1051.70 957.00 1051.70 957.00 1054.99 957.00 C1058.28 957.00 1058.28 957.00 1061.57 957.00 C1064.85 957.00 1064.85 957.00 1068.14 957.00 C1071.43 957.00 1071.43 957.00 1074.72 957.00 C1078.01 957.00 1078.01 957.00 1081.29 957.00 C1084.58 957.00 1084.58 957.00 1087.87 957.00 C1091.16 957.00 1091.16 957.00 1094.45 957.00 C1097.74 957.00 1097.74 957.00 1101.02 957.00 C1104.31 957.00 1104.31 957.00 1107.60 957.00 C1110.89 957.00 1110.89 957.00 1114.18 957.00 C1117.46 957.00 1117.46 957.00 1120.75 957.00 C1124.04 957.00 1124.04 957.00 1127.33 957.00 C1130.62 957.00 1130.62 957.00 1133.90 957.00 C1137.19 957.00 1137.19 957.00 1140.48 957.00 C1143.77 957.00 1143.77 957.00 1147.06 957.00 C1150.34 957.00 1150.34 957.00 1153.63 957.00 C1156.92 957.00 1156.92 957.00 1160.21 957.00 C1163.50 957.00 1163.50 957.00 1166.79 957.00 C1170.07 957.00 1170.07 957.00 1173.36 957.00 C1176.65 957.00 1176.65 957.00 1179.94 957.00 C1183.23 957.00 1183.23 957.00 1186.51 957.00 C1189.80 957.00 1189.80 957.00 1193.09 957.00 C1196.38 957.00 1196.38 957.00 1199.67 957.00 C1202.95 957.00 1202.95 957.00 1206.24 957.00 C1209.53 957.00 1211.68 957.00 1212.82 957.00 C1218.26 944.26 1215.58 941.46 1219.40 926.20 C1222.15 915.16 1224.00 899.77 1225.97 904.40 C1230.57 915.17 1226.70 933.60 1232.55 957.00 C1233.27 957.00 1235.84 957.00 1239.12 957.00 C1242.41 957.00 1244.58 957.00 1245.70 957.00 C1251.15 944.07 1248.99 925.80 1252.28 925.80 C1255.56 925.80 1253.40 944.07 1258.85 957.00 C1259.98 957.00 1262.14 957.00 1265.43 957.00 C1268.72 957.00 1268.72 957.00 1272.00 957.00 C1275.29 957.00 1277.45 957.00 1278.58 957.00 C1284.02 944.26 1283.43 941.82 1285.16 926.20 C1290.01 882.17 1288.93 831.14 1291.73 837.70 C1295.51 846.54 1292.08 900.46 1298.31 957.00 C1298.65 957.00 1301.60 957.00 1304.89 957.00 C1308.17 957.00 1308.17 957.00 1311.46 957.00 C1314.75 957.00 1317.09 957.00 1318.04 957.00 C1323.67 940.48 1321.33 918.40 1324.61 918.40 C1327.90 918.40 1325.56 940.48 1331.19 957.00 C1332.14 957.00 1337.13 957.00 1337.77 957.00 C1343.71 929.50 1341.06 896.10 1344.34 896.10 C1347.63 896.10 1344.98 929.50 1350.92 957.00 C1351.56 957.00 1354.21 957.00 1357.50 957.00 C1360.78 957.00 1360.78 957.00 1364.07 957.00 C1367.36 957.00 1367.36 957.00 1370.65 957.00 C1373.94 957.00 1376.95 957.00 1377.22 957.00 C1383.53 884.75 1380.51 806.20 1383.80 806.20 C1387.09 806.20 1384.08 884.75 1390.38 957.00 C1390.65 957.00 1393.66 957.00 1396.95 957.00 C1400.24 957.00 1400.24 957.00 1403.53 957.00 C1406.82 957.00 1406.82 957.00 1410.11 957.00 C1413.39 957.00 1415.87 957.00 1416.68 957.00 C1422.45 936.70 1419.97 910.70 1423.26 910.70 C1426.55 910.70 1425.90 952.37 1429.83 957.00 C1432.48 957.00 1434.82 941.84 1436.41 926.20 C1441.40 877.14 1440.14 820.94 1442.99 827.60 C1446.72 836.34 1443.30 895.43 1449.56 957.00 C1449.88 957.00 1452.85 957.00 1456.14 957.00 C1459.43 957.00 1461.59 957.00 1462.72 957.00 C1468.17 944.07 1466.00 925.80 1469.29 925.80 C1472.58 925.80 1470.42 944.07 1475.87 957.00 C1476.99 957.00 1481.81 957.00 1482.44 957.00 C1488.38 929.45 1485.73 896.00 1489.02 896.00 C1492.31 896.00 1489.66 929.45 1495.60 957.00 C1496.23 957.00 1498.88 957.00 1502.17 957.00 C1505.46 957.00 1505.46 957.00 1508.75 957.00 C1512.04 957.00 1514.12 957.00 1515.32 957.00 C1520.70 945.27 1518.61 928.30 1521.90 928.30 C1525.19 928.30 1525.19 957.00 1528.48 957.00 C1531.77 957.00 1531.77 928.30 1535.05 928.30 C1538.34 928.30 1536.25 945.27 1541.63 957.00 C1542.83 957.00 1546.28 957.00 1548.21 957.00 C1552.86 951.87 1551.49 942.50 1554.78 942.50 C1558.07 942.50 1558.63 957.00 1561.36 957.00 C1565.20 954.98 1565.09 946.42 1567.93 935.60 C1571.66 921.42 1572.09 903.06 1574.51 907.00 C1578.67 913.76 1575.27 934.88 1581.09 957.00 C1581.85 957.00 1584.38 957.00 1587.66 957.00 C1590.95 957.00 1590.95 957.00 1594.24 957.00 C1597.53 957.00 1597.53 957.00 1600.82 957.00 C1604.10 957.00 1604.10 957.00 1607.39 957.00 C1610.68 957.00 1610.68 957.00 1613.97 957.00 C1617.26 957.00 1617.26 957.00 1620.54 957.00 C1623.83 957.00 1623.83 957.00 1627.12 957.00 C1630.41 957.00 1630.41 957.00 1633.70 957.00 C1636.98 957.00 1636.98 957.00 1640.27 957.00 C1643.56 957.00 1643.56 957.00 1646.85 957.00 C1650.14 957.00 1650.14 957.00 1653.43 957.00 C1656.71 957.00 1656.71 957.00 1660.00 957.00 C1663.29 957.00 1663.29 957.00 1666.58 957.00 C1669.87 957.00 1669.87 957.00 1673.15 957.00 C1676.44 957.00 1676.44 957.00 1679.73 957.00 C1683.02 957.00 1683.02 957.00 1686.31 957.00 C1689.59 957.00 1689.59 957.00 1692.88 957.00 C1696.17 957.00 1699.10 957.00 1699.46 957.00 C1705.68 903.05 1702.75 842.90 1706.04 842.90 C1709.32 842.90 1706.39 903.05 1712.61 957.00 C1712.97 957.00 1715.90 957.00 1719.19 957.00 C1722.48 957.00 1724.89 957.00 1725.76 957.00 C1731.47 938.52 1729.05 914.40 1732.34 914.40 C1735.63 914.40 1735.84 957.00 1738.92 957.00 C1742.41 955.43 1742.20 908.50 1745.49 908.50 C1748.78 908.50 1746.27 935.62 1752.07 957.00 C1752.85 957.00 1755.36 957.00 1758.64 957.00 C1761.93 957.00 1761.93 957.00 1765.22 957.00 C1768.51 957.00 1769.87 957.00 1771.80 957.00 C1776.45 951.87 1775.09 942.50 1778.37 942.50 C1781.66 942.50 1780.30 951.87 1784.95 957.00 C1786.87 957.00 1788.24 957.00 1791.53 957.00 C1794.81 957.00 1794.81 957.00 1798.10 957.00 C1801.39 957.00 1801.39 957.00 1804.68 957.00 C1807.97 957.00 1809.78 957.00 1811.25 957.00 C1816.36 948.54 1814.54 935.20 1817.83 935.20 C1821.12 935.20 1822.54 957.00 1824.41 957.00 C1829.12 944.32 1827.70 899.80 1830.98 899.80 C1834.27 899.80 1831.66 931.33 1837.56 957.00 C1838.23 957.00 1840.85 957.00 1844.14 957.00 C1847.42 957.00 1850.71 957.00 1850.71 957.00" fill="none" stroke="#14cca5" stroke-width="2"/>
<path d="M640.69 957.00 C640.69 957.00 643.98 957.00 647.26 957.00 C650.55 957.00 650.55 957.00 653.84 957.00 C657.13 957.00 657.13 957.00 660.42 957.00 C663.70 957.00 663.70 957.00 666.99 957.00 C670.28 957.00 670.28 957.00 673.57 957.00 C676.86 957.00 676.86 957.00 680.15 957.00 C683.43 957.00 683.43 957.00 686.72 957.00 C690.01 957.00 690.01 957.00 693.30 957.00 C696.59 957.00 696.59 957.00 699.87 957.00 C703.16 957.00 703.16 957.00 706.45 957.00 C709.74 957.00 709.74 957.00 713.03 957.00 C716.31 957.00 716.31 957.00 719.60 957.00 C722.89 957.00 722.89 957.00 726.18 957.00 C729.47 957.00 729.47 957.00 732.76 957.00 C736.04 957.00 736.04 957.00 739.33 957.00 C742.62 957.00 742.62 957.00 745.91 957.00 C749.20 957.00 749.20 957.00 752.48 957.00 C755.77 957.00 755.77 957.00 759.06 957.00 C762.35 957.00 762.35 957.00 765.64 957.00 C768.92 957.00 768.92 957.00 772.21 957.00 C775.50 957.00 775.50 957.00 778.79 957.00 C782.08 957.00 782.08 957.00 785.36 957.00 C788.65 957.00 788.65 957.00 791.94 957.00 C795.23 957.00 795.23 957.00 798.52 957.00 C801.81 957.00 801.81 957.00 805.09 957.00 C808.38 957.00 808.38 957.00 811.67 957.00 C814.96 957.00 814.96 957.00 818.25 957.00 C821.53 957.00 821.53 957.00 824.82 957.00 C828.11 957.00 828.11 957.00 831.40 957.00 C834.69 957.00 834.69 957.00 837.97 957.00 C841.26 957.00 841.26 957.00 844.55 957.00 C847.84 957.00 847.84 957.00 851.13 957.00 C854.42 957.00 854.42 957.00 857.70 957.00 C860.99 957.00 860.99 957.00 864.28 957.00 C867.57 957.00 867.57 957.00 870.86 957.00 C874.14 957.00 874.14 957.00 877.43 957.00 C880.72 957.00 880.72 957.00 884.01 957.00 C887.30 957.00 887.30 957.00 890.58 957.00 C893.87 957.00 893.87 957.00 897.16 957.00 C900.45 957.00 900.45 957.00 903.74 957.00 C907.02 957.00 907.02 957.00 910.31 957.00 C913.60 957.00 913.60 957.00 916.89 957.00 C920.18 957.00 920.18 957.00 923.47 957.00 C926.75 957.00 926.75 957.00 930.04 957.00 C933.33 957.00 933.33 957.00 936.62 957.00 C939.91 957.00 939.91 957.00 943.19 957.00 C946.48 957.00 946.48 957.00 949.77 957.00 C953.06 957.00 953.06 957.00 956.35 957.00 C959.63 957.00 959.63 957.00 962.92 957.00 C966.21 957.00 966.21 957.00 969.50 957.00 C972.79 957.00 972.79 957.00 976.08 957.00 C979.36 957.00 979.36 957.00 982.65 957.00 C985.94 957.00 985.94 957.00 989.23 957.00 C992.52 957.00 992.52 957.00 995.80 957.00 C999.09 957.00 999.09 957.00 1002.38 957.00 C1005.67 957.00 1005.67 957.00 1008.96 957.00 C1012.24 957.00 1012.24 957.00 1015.53 957.00 C1018.82 957.00 1018.82 957.00 1022.11 957.00 C1025.40 957.00 1025.40 957.00 1028.68 957.00 C1031.97 957.00 1031.97 957.00 1035.26 957.00 C1038.55 957.00 1038.55 957.00 1041.84 957.00 C1045.13 957.00 1045.13 957.00 1048.41 957.00 C1051.70 957.00 1051.70 957.00 1054.99 957.00 C1058.28 957.00 1058.28 957.00 1061.57 957.00 C1064.85 957.00 1064.85 957.00 1068.14 957.00 C1071.43 957.00 1071.43 957.00 1074.72 957.00 C1078.01 957.00 1078.01 957.00 1081.29 957.00 C1084.58 957.00 1084.58 957.00 1087.87 957.00 C1091.16 957.00 1091.16 957.00 1094.45 957.00 C1097.74 957.00 1097.74 957.00 1101.02 957.00 C1104.31 957.00 1104.31 957.00 1107.60 957.00 C1110.89 957.00 1110.89 957.00 1114.18 957.00 C1117.46 957.00 1117.46 957.00 1120.75 957.00 C1124.04 957.00 1124.04 957.00 1127.33 957.00 C1130.62 957.00 1130.62 957.00 1133.90 957.00 C1137.19 957.00 1137.19 957.00 1140.48 957.00 C1143.77 957.00 1143.77 957.00 1147.06 957.00 C1150.34 957.00 1150.34 957.00 1153.63 957.00 C1156.92 957.00 1156.92 957.00 1160.21 957.00 C1163.50 957.00 1163.50 957.00 1166.79 957.00 C1170.07 957.00 1170.07 957.00 1173.36 957.00 C1176.65 957.00 1176.65 957.00 1179.94 957.00 C1183.23 957.00 1183.23 957.00 1186.51 957.00 C1189.80 957.00 1189.80 957.00 1193.09 957.00 C1196.38 957.00 1196.38 957.00 1199.67 957.00 C1202.95 957.00 1202.95 957.00 1206.24 957.00 C1209.53 957.00 1209.53 957.00 1212.82 957.00 C1216.11 957.00 1216.11 957.00 1219.40 957.00 C1222.68 957.00 1222.68 957.00 1225.97 957.00 C1229.26 957.00 1229.26 957.00 1232.55 957.00 C1235.84 957.00 1235.84 957.00 1239.12 957.00 C1242.41 957.00 1242.41 957.00 1245.70 957.00 C1248.99 957.00 1248.99 957.00 1252.28 957.00 C1255.56 957.00 1255.56 957.00 1258.85 957.00 C1262.14 957.00 1262.14 957.00 1265.43 957.00 C1268.72 957.00 1268.72 957.00 1272.00 957.00 C1275.29 957.00 1275.29 957.00 1278.58 957.00 C1281.87 957.00 1281.87 957.00 1285.16 957.00 C1288.45 957.00 1288.45 957.00 1291.73 957.00 C1295.02 957.00 1295.02 957.00 1298.31 957.00 C1301.60 957.00 1301.60 957.00 1304.89 957.00 C1308.17 957.00 1308.17 957.00 1311.46 957.00 C1314.75 957.00 1314.75 957.00 1318.04 957.00 C1321.33 957.00 1321.33 957.00 1324.61 957.00 C1327.90 957.00 1327.90 957.00 1331.19 957.00 C1334.48 957.00 1334.48 957.00 1337.77 957.00 C1341.06 957.00 1341.06 957.00 1344.34 957.00 C1347.63 957.00 1347.63 957.00 1350.92 957.00 C1354.21 957.00 1354.21 957.00 1357.50 957.00 C1360.78 957.00 1360.78 957.00 1364.07 957.00 C1367.36 957.00 1367.36 957.00 1370.65 957.00 C1373.94 957.00 1373.94 957.00 1377.22 957.00 C1380.51 957.00 1380.51 957.00 1383.80 957.00 C1387.09 957.00 1387.09 957.00 1390.38 957.00 C1393.66 957.00 1393.66 957.00 1396.95 957.00 C1400.24 957.00 1400.24 957.00 1403.53 957.00 C1406.82 957.00 1406.82 957.00 1410.11 957.00 C1413.39 957.00 1413.39 957.00 1416.68 957.00 C1419.97 957.00 1419.97 957.00 1423.26 957.00 C1426.55 957.00 1426.55 957.00 1429.83 957.00 C1433.12 957.00 1433.12 957.00 1436.41 957.00 C1439.70 957.00 1439.70 957.00 1442.99 957.00 C1446.27 957.00 1446.27 957.00 1449.56 957.00 C1452.85 957.00 1452.85 957.00 1456.14 957.00 C1459.43 957.00 1459.43 957.00 1462.72 957.00 C1466.00 957.00 1466.00 957.00 1469.29 957.00 C1472.58 957.00 1472.58 957.00 1475.87 957.00 C1479.16 957.00 1479.16 957.00 1482.44 957.00 C1485.73 957.00 1485.73 957.00 1489.02 957.00 C1492.31 957.00 1492.31 957.00 1495.60 957.00 C1498.88 957.00 1498.88 957.00 1502.17 957.00 C1505.46 957.00 1505.46 957.00 1508.75 957.00 C1512.04 957.00 1512.04 957.00 1515.32 957.00 C1518.61 957.00 1518.61 957.00 1521.90 957.00 C1525.19 957.00 1525.19 957.00 1528.48 957.00 C1531.77 957.00 1531.77 957.00 1535.05 957.00 C1538.34 957.00 1538.34 957.00 1541.63 957.00 C1544.92 957.00 1544.92 957.00 1548.21 957.00 C1551.49 957.00 1551.49 957.00 1554.78 957.00 C1558.07 957.00 1558.07 957.00 1561.36 957.00 C1564.65 957.00 1564.65 957.00 1567.93 957.00 C1571.22 957.00 1571.22 957.00 1574.51 957.00 C1577.80 957.00 1577.80 957.00 1581.09 957.00 C1584.38 957.00 1584.38 957.00 1587.66 957.00 C1590.95 957.00 1590.95 957.00 1594.24 957.00 C1597.53 957.00 1597.53 957.00 1600.82 957.00 C1604.10 957.00 1604.10 957.00 1607.39 957.00 C1610.68 957.00 1610.68 957.00 1613.97 957.00 C1617.26 957.00 1617.26 957.00 1620.54 957.00 C1623.83 957.00 1623.83 957.00 1627.12 957.00 C1630.41 957.00 1630.41 957.00 1633.70 957.00 C1636.98 957.00 1636.98 957.00 1640.27 957.00 C1643.56 957.00 1643.56 957.00 1646.85 957.00 C1650.14 957.00 1650.14 957.00 1653.43 957.00 C1656.71 957.00 1656.71 957.00 1660.00 957.00 C1663.29 957.00 1663.29 957.00 1666.58 957.00 C1669.87 957.00 1669.87 957.00 1673.15 957.00 C1676.44 957.00 1676.44 957.00 1679.73 957.00 C1683.02 957.00 1683.02 957.00 1686.31 957.00 C1689.59 957.00 1689.59 957.00 1692.88 957.00 C1696.17 957.00 1696.17 957.00 1699.46 957.00 C1702.75 957.00 1702.75 957.00 1706.04 957.00 C1709.32 957.00 1709.32 957.00 1712.61 957.00 C1715.90 957.00 1715.90 957.00 1719.19 957.00 C1722.48 957.00 1722.48 957.00 1725.76 957.00 C1729.05 957.00 1729.05 957.00 1732.34 957.00 C1735.63 957.00 1735.63 957.00 1738.92 957.00 C1742.20 957.00 1742.20 957.00 1745.49 957.00 C1748.78 957.00 1748.78 957.00 1752.07 957.00 C1755.36 957.00 1755.36 957.00 1758.64 957.00 C1761.93 957.00 1761.93 957.00 1765.22 957.00 C1768.51 957.00 1768.51 957.00 1771.80 957.00 C1775.09 957.00 1775.09 957.00 1778.37 957.00 C1781.66 957.00 1781.66 957.00 1784.95 957.00 C1788.24 957.00 1788.24 957.00 1791.53 957.00 C1794.81 957.00 1794.81 957.00 1798.10 957.00 C1801.39 957.00 1801.39 957.00 1804.68 957.00 C1807.97 957.00 1807.97 957.00 1811.25 957.00 C1814.54 957.00 1814.54 957.00 1817.83 957.00 C1821.12 957.00 1821.12 957.00 1824.41 957.00 C1827.70 957.00 1827.70 957.00 1830.98 957.00 C1834.27 957.00 1834.27 957.00 1837.56 957.00 C1840.85 957.00 1840.85 957.00 1844.14 957.00 C1847.42 957.00 1850.71 957.00 1850.71 957.00" fill="none" stroke="#5db4f2" stroke-width="2"/>
<path d="M640.69 957.00 C640.69 957.00 643.98 957.00 647.26 957.00 C650.55 957.00 650.55 957.00 653.84 957.00 C657.13 957.00 657.13 957.00 660.42 957.00 C663.70 957.00 663.70 957.00 666.99 957.00 C670.28 957.00 670.28 957.00 673.57 957.00 C676.86 957.00 676.86 957.00 680.15 957.00 C683.43 957.00 683.43 957.00 686.72 957.00 C690.01 957.00 690.01 957.00 693.30 957.00 C696.59 957.00 696.59 957.00 699.87 957.00 C703.16 957.00 703.16 957.00 706.45 957.00 C709.74 957.00 709.74 957.00 713.03 957.00 C716.31 957.00 716.31 957.00 719.60 957.00 C722.89 957.00 722.89 957.00 726.18 957.00 C729.47 957.00 729.47 957.00 732.76 957.00 C736.04 957.00 736.04 957.00 739.33 957.00 C742.62 957.00 742.62 957.00 745.91 957.00 C749.20 957.00 749.20 957.00 752.48 957.00 C755.77 957.00 755.77 957.00 759.06 957.00 C762.35 957.00 762.35 957.00 765.64 957.00 C768.92 957.00 768.92 957.00 772.21 957.00 C775.50 957.00 775.50 957.00 778.79 957.00 C782.08 957.00 782.08 957.00 785.36 957.00 C788.65 957.00 788.65 957.00 791.94 957.00 C795.23 957.00 795.23 957.00 798.52 957.00 C801.81 957.00 801.81 957.00 805.09 957.00 C808.38 957.00 808.38 957.00 811.67 957.00 C814.96 957.00 814.96 957.00 818.25 957.00 C821.53 957.00 821.53 957.00 824.82 957.00 C828.11 957.00 828.11 957.00 831.40 957.00 C834.69 957.00 834.69 957.00 837.97 957.00 C841.26 957.00 841.26 957.00 844.55 957.00 C847.84 957.00 847.84 957.00 851.13 957.00 C854.42 957.00 854.42 957.00 857.70 957.00 C860.99 957.00 860.99 957.00 864.28 957.00 C867.57 957.00 867.57 957.00 870.86 957.00 C874.14 957.00 874.14 957.00 877.43 957.00 C880.72 957.00 880.72 957.00 884.01 957.00 C887.30 957.00 887.30 957.00 890.58 957.00 C893.87 957.00 893.87 957.00 897.16 957.00 C900.45 957.00 900.45 957.00 903.74 957.00 C907.02 957.00 907.02 957.00 910.31 957.00 C913.60 957.00 913.60 957.00 916.89 957.00 C920.18 957.00 920.18 957.00 923.47 957.00 C926.75 957.00 926.75 957.00 930.04 957.00 C933.33 957.00 933.33 957.00 936.62 957.00 C939.91 957.00 939.91 957.00 943.19 957.00 C946.48 957.00 946.48 957.00 949.77 957.00 C953.06 957.00 953.06 957.00 956.35 957.00 C959.63 957.00 959.63 957.00 962.92 957.00 C966.21 957.00 966.21 957.00 969.50 957.00 C972.79 957.00 972.79 957.00 976.08 957.00 C979.36 957.00 979.36 957.00 982.65 957.00 C985.94 957.00 985.94 957.00 989.23 957.00 C992.52 957.00 992.52 957.00 995.80 957.00 C999.09 957.00 999.09 957.00 1002.38 957.00 C1005.67 957.00 1005.67 957.00 1008.96 957.00 C1012.24 957.00 1012.24 957.00 1015.53 957.00 C1018.82 957.00 1018.82 957.00 1022.11 957.00 C1025.40 957.00 1025.40 957.00 1028.68 957.00 C1031.97 957.00 1031.97 957.00 1035.26 957.00 C1038.55 957.00 1038.55 957.00 1041.84 957.00 C1045.13 957.00 1045.13 957.00 1048.41 957.00 C1051.70 957.00 1051.70 957.00 1054.99 957.00 C1058.28 957.00 1058.28 957.00 1061.57 957.00 C1064.85 957.00 1064.85 957.00 1068.14 957.00 C1071.43 957.00 1071.43 957.00 1074.72 957.00 C1078.01 957.00 1078.01 957.00 1081.29 957.00 C1084.58 957.00 1084.58 957.00 1087.87 957.00 C1091.16 957.00 1091.16 957.00 1094.45 957.00 C1097.74 957.00 1097.74 957.00 1101.02 957.00 C1104.31 957.00 1104.31 957.00 1107.60 957.00 C1110.89 957.00 1110.89 957.00 1114.18 957.00 C1117.46 957.00 1117.46 957.00 1120.75 957.00 C1124.04 957.00 1124.04 957.00 1127.33 957.00 C1130.62 957.00 1130.62 957.00 1133.90 957.00 C1137.19 957.00 1137.19 957.00 1140.48 957.00 C1143.77 957.00 1143.77 957.00 1147.06 957.00 C1150.34 957.00 1150.34 957.00 1153.63 957.00 C1156.92 957.00 1156.92 957.00 1160.21 957.00 C1163.50 957.00 1163.50 957.00 1166.79 957.00 C1170.07 957.00 1170.07 957.00 1173.36 957.00 C1176.65 957.00 1176.65 957.00 1179.94 957.00 C1183.23 957.00 1183.23 957.00 1186.51 957.00 C1189.80 957.00 1189.80 957.00 1193.09 957.00 C1196.38 957.00 1196.38 957.00 1199.67 957.00 C1202.95 957.00 1202.95 957.00 1206.24 957.00 C1209.53 957.00 1209.53 957.00 1212.82 957.00 C1216.11 957.00 1216.11 957.00 1219.40 957.00 C1222.68 957.00 1222.68 957.00 1225.97 957.00 C1229.26 957.00 1229.26 957.00 1232.55 957.00 C1235.84 957.00 1235.84 957.00 1239.12 957.00 C1242.41 957.00 1242.41 957.00 1245.70 957.00 C1248.99 957.00 1248.99 957.00 1252.28 957.00 C1255.56 957.00 1257.20 957.00 1258.85 957.00 C1263.78 950.07 1262.14 938.50 1265.43 938.50 C1268.72 938.50 1268.30 955.65 1272.00 957.00 C1274.87 957.00 1275.29 943.30 1278.58 943.30 C1281.87 943.30 1280.57 952.22 1285.16 957.00 C1287.14 957.00 1288.45 957.00 1291.73 957.00 C1295.02 957.00 1295.02 957.00 1298.31 957.00 C1301.60 957.00 1301.60 957.00 1304.89 957.00 C1308.17 957.00 1308.17 957.00 1311.46 957.00 C1314.75 957.00 1314.75 957.00 1318.04 957.00 C1321.33 957.00 1321.33 957.00 1324.61 957.00 C1327.90 957.00 1327.90 957.00 1331.19 957.00 C1334.48 957.00 1334.48 957.00 1337.77 957.00 C1341.06 957.00 1341.06 957.00 1344.34 957.00 C1347.63 957.00 1348.11 957.00 1350.92 957.00 C1354.69 955.31 1354.21 951.10 1357.50 951.10 C1360.78 951.10 1360.30 955.31 1364.07 957.00 C1366.88 957.00 1369.06 957.00 1370.65 957.00 C1375.63 949.61 1373.94 937.50 1377.22 937.50 C1380.51 937.50 1378.82 949.61 1383.80 957.00 C1385.39 957.00 1388.31 957.00 1390.38 957.00 C1394.88 952.65 1393.66 944.30 1396.95 944.30 C1400.24 944.30 1399.02 952.65 1403.53 957.00 C1405.60 957.00 1406.82 957.00 1410.11 957.00 C1413.39 957.00 1413.39 957.00 1416.68 957.00 C1419.97 957.00 1419.97 957.00 1423.26 957.00 C1426.55 957.00 1426.55 957.00 1429.83 957.00 C1433.12 957.00 1433.12 957.00 1436.41 957.00 C1439.70 957.00 1439.70 957.00 1442.99 957.00 C1446.27 957.00 1446.27 957.00 1449.56 957.00 C1452.85 957.00 1452.92 957.00 1456.14 957.00 C1459.50 956.49 1459.43 955.00 1462.72 955.00 C1466.00 955.00 1465.93 956.49 1469.29 957.00 C1472.51 957.00 1472.58 957.00 1475.87 957.00 C1479.16 957.00 1479.23 957.00 1482.44 957.00 C1485.80 956.49 1485.73 955.00 1489.02 955.00 C1492.31 955.00 1492.24 956.49 1495.60 957.00 C1498.81 957.00 1498.88 957.00 1502.17 957.00 C1505.46 957.00 1505.46 957.00 1508.75 957.00 C1512.04 957.00 1512.04 957.00 1515.32 957.00 C1518.61 957.00 1518.61 957.00 1521.90 957.00 C1525.19 957.00 1525.19 957.00 1528.48 957.00 C1531.77 957.00 1531.77 957.00 1535.05 957.00 C1538.34 957.00 1538.34 957.00 1541.63 957.00 C1544.92 957.00 1544.92 957.00 1548.21 957.00 C1551.49 957.00 1551.49 957.00 1554.78 957.00 C1558.07 957.00 1558.07 957.00 1561.36 957.00 C1564.65 957.00 1564.65 957.00 1567.93 957.00 C1571.22 957.00 1571.22 957.00 1574.51 957.00 C1577.80 957.00 1577.80 957.00 1581.09 957.00 C1584.38 957.00 1584.38 957.00 1587.66 957.00 C1590.95 957.00 1590.95 957.00 1594.24 957.00 C1597.53 957.00 1597.53 957.00 1600.82 957.00 C1604.10 957.00 1604.10 957.00 1607.39 957.00 C1610.68 957.00 1610.68 957.00 1613.97 957.00 C1617.26 957.00 1617.26 957.00 1620.54 957.00 C1623.83 957.00 1624.22 957.00 1627.12 957.00 C1630.79 955.58 1630.04 953.57 1633.70 951.90 C1636.61 950.57 1637.46 949.91 1640.27 951.00 C1644.04 952.46 1643.07 955.27 1646.85 957.00 C1649.64 957.00 1650.14 957.00 1653.43 957.00 C1656.71 957.00 1657.15 957.00 1660.00 957.00 C1663.72 955.44 1663.29 951.50 1666.58 951.50 C1669.87 951.50 1669.43 955.44 1673.15 957.00 C1676.01 957.00 1676.44 957.00 1679.73 957.00 C1683.02 957.00 1683.02 957.00 1686.31 957.00 C1689.59 957.00 1689.59 957.00 1692.88 957.00 C1696.17 957.00 1696.17 957.00 1699.46 957.00 C1702.75 957.00 1702.75 957.00 1706.04 957.00 C1709.32 957.00 1709.32 957.00 1712.61 957.00 C1715.90 957.00 1716.78 957.00 1719.19 957.00 C1723.36 954.05 1722.48 947.70 1725.76 947.70 C1729.05 947.70 1728.17 954.05 1732.34 957.00 C1734.75 957.00 1735.63 957.00 1738.92 957.00 C1742.20 957.00 1742.20 957.00 1745.49 957.00 C1748.78 957.00 1748.78 957.00 1752.07 957.00 C1755.36 957.00 1755.36 957.00 1758.64 957.00 C1761.93 957.00 1761.93 957.00 1765.22 957.00 C1768.51 957.00 1768.51 957.00 1771.80 957.00 C1775.09 957.00 1775.09 957.00 1778.37 957.00 C1781.66 957.00 1781.66 957.00 1784.95 957.00 C1788.24 957.00 1788.24 957.00 1791.53 957.00 C1794.81 957.00 1795.63 957.00 1798.10 957.00 C1802.20 954.29 1801.39 948.30 1804.68 948.30 C1807.97 948.30 1807.15 954.29 1811.25 957.00 C1813.73 957.00 1814.54 957.00 1817.83 957.00 C1821.12 957.00 1821.12 957.00 1824.41 957.00 C1827.70 957.00 1827.70 957.00 1830.98 957.00 C1834.27 957.00 1834.27 957.00 1837.56 957.00 C1840.85 957.00 1841.61 957.00 1844.14 957.00 C1848.19 954.46 1850.71 948.75 1850.71 948.75 L1850.71 957.00 L640.69 957.00 Z" fill="#fa6f8f" fill-opacity="0.75"/>
<path d="M640.69 957.00 C640.69 957.00 643.98 957.00 647.26 957.00 C650.55 957.00 650.55 957.00 653.84 957.00 C657.13 957.00 657.13 957.00 660.42 957.00 C663.70 957.00 663.70 957.00 666.99 957.00 C670.28 957.00 670.28 957.00 673.57 957.00 C676.86 957.00 676.86 957.00 680.15 957.00 C683.43 957.00 683.43 957.00 686.72 957.00 C690.01 957.00 690.01 957.00 693.30 957.00 C696.59 957.00 696.59 957.00 699.87 957.00 C703.16 957.00 703.16 957.00 706.45 957.00 C709.74 957.00 709.74 957.00 713.03 957.00 C716.31 957.00 716.31 957.00 719.60 957.00 C722.89 957.00 722.89 957.00 726.18 957.00 C729.47 957.00 729.47 957.00 732.76 957.00 C736.04 957.00 736.04 957.00 739.33 957.00 C742.62 957.00 742.62 957.00 745.91 957.00 C749.20 957.00 749.20 957.00 752.48 957.00 C755.77 957.00 755.77 957.00 759.06 957.00 C762.35 957.00 762.35 957.00 765.64 957.00 C768.92 957.00 768.92 957.00 772.21 957.00 C775.50 957.00 775.50 957.00 778.79 957.00 C782.08 957.00 782.08 957.00 785.36 957.00 C788.65 957.00 788.65 957.00 791.94 957.00 C795.23 957.00 795.23 957.00 798.52 957.00 C801.81 957.00 801.81 957.00 805.09 957.00 C808.38 957.00 808.38 957.00 811.67 957.00 C814.96 957.00 814.96 957.00 818.25 957.00 C821.53 957.00 821.53 957.00 824.82 957.00 C828.11 957.00 828.11 957.00 831.40 957.00 C834.69 957.00 834.69 957.00 837.97 957.00 C841.26 957.00 841.26 957.00 844.55 957.00 C847.84 957.00 847.84 957.00 851.13 957.00 C854.42 957.00 854.42 957.00 857.70 957.00 C860.99 957.00 860.99 957.00 864.28 957.00 C867.57 957.00 867.57 957.00 870.86 957.00 C874.14 957.00 874.14 957.00 877.43 957.00 C880.72 957.00 880.72 957.00 884.01 957.00 C887.30 957.00 887.30 957.00 890.58 957.00 C893.87 957.00 893.87 957.00 897.16 957.00 C900.45 957.00 900.45 957.00 903.74 957.00 C907.02 957.00 907.02 957.00 910.31 957.00 C913.60 957.00 913.60 957.00 916.89 957.00 C920.18 957.00 920.18 957.00 923.47 957.00 C926.75 957.00 926.75 957.00 930.04 957.00 C933.33 957.00 933.33 957.00 936.62 957.00 C939.91 957.00 939.91 957.00 943.19 957.00 C946.48 957.00 946.48 957.00 949.77 957.00 C953.06 957.00 953.06 957.00 956.35 957.00 C959.63 957.00 959.63 957.00 962.92 957.00 C966.21 957.00 966.21 957.00 969.50 957.00 C972.79 957.00 972.79 957.00 976.08 957.00 C979.36 957.00 979.36 957.00 982.65 957.00 C985.94 957.00 985.94 957.00 989.23 957.00 C992.52 957.00 992.52 957.00 995.80 957.00 C999.09 957.00 999.09 957.00 1002.38 957.00 C1005.67 957.00 1005.67 957.00 1008.96 957.00 C1012.24 957.00 1012.24 957.00 1015.53 957.00 C1018.82 957.00 1018.82 957.00 1022.11 957.00 C1025.40 957.00 1025.40 957.00 1028.68 957.00 C1031.97 957.00 1031.97 957.00 1035.26 957.00 C1038.55 957.00 1038.55 957.00 1041.84 957.00 C1045.13 957.00 1045.13 957.00 1048.41 957.00 C1051.70 957.00 1051.70 957.00 1054.99 957.00 C1058.28 957.00 1058.28 957.00 1061.57 957.00 C1064.85 957.00 1064.85 957.00 1068.14 957.00 C1071.43 957.00 1071.43 957.00 1074.72 957.00 C1078.01 957.00 1078.01 957.00 1081.29 957.00 C1084.58 957.00 1084.58 957.00 1087.87 957.00 C1091.16 957.00 1091.16 957.00 1094.45 957.00 C1097.74 957.00 1097.74 957.00 1101.02 957.00 C1104.31 957.00 1104.31 957.00 1107.60 957.00 C1110.89 957.00 1110.89 957.00 1114.18 957.00 C1117.46 957.00 1117.46 957.00 1120.75 957.00 C1124.04 957.00 1124.04 957.00 1127.33 957.00 C1130.62 957.00 1130.62 957.00 1133.90 957.00 C1137.19 957.00 1137.19 957.00 1140.48 957.00 C1143.77 957.00 1143.77 957.00 1147.06 957.00 C1150.34 957.00 1150.34 957.00 1153.63 957.00 C1156.92 957.00 1156.92 957.00 1160.21 957.00 C1163.50 957.00 1163.50 957.00 1166.79 957.00 C1170.07 957.00 1170.07 957.00 1173.36 957.00 C1176.65 957.00 1176.65 957.00 1179.94 957.00 C1183.23 957.00 1183.23 957.00 1186.51 957.00 C1189.80 957.00 1189.80 957.00 1193.09 957.00 C1196.38 957.00 1196.38 957.00 1199.67 957.00 C1202.95 957.00 1202.95 957.00 1206.24 957.00 C1209.53 957.00 1209.53 957.00 1212.82 957.00 C1216.11 957.00 1216.11 957.00 1219.40 957.00 C1222.68 957.00 1222.68 957.00 1225.97 957.00 C1229.26 957.00 1229.26 957.00 1232.55 957.00 C1235.84 957.00 1235.84 957.00 1239.12 957.00 C1242.41 957.00 1242.41 957.00 1245.70 957.00 C1248.99 957.00 1248.99 957.00 1252.28 957.00 C1255.56 957.00 1257.20 957.00 1258.85 957.00 C1263.78 950.07 1262.14 938.50 1265.43 938.50 C1268.72 938.50 1268.30 955.65 1272.00 957.00 C1274.87 957.00 1275.29 943.30 1278.58 943.30 C1281.87 943.30 1280.57 952.22 1285.16 957.00 C1287.14 957.00 1288.45 957.00 1291.73 957.00 C1295.02 957.00 1295.02 957.00 1298.31 957.00 C1301.60 957.00 1301.60 957.00 1304.89 957.00 C1308.17 957.00 1308.17 957.00 1311.46 957.00 C1314.75 957.00 1314.75 957.00 1318.04 957.00 C1321.33 957.00 1321.33 957.00 1324.61 957.00 C1327.90 957.00 1327.90 957.00 1331.19 957.00 C1334.48 957.00 1334.48 957.00 1337.77 957.00 C1341.06 957.00 1341.06 957.00 1344.34 957.00 C1347.63 957.00 1348.11 957.00 1350.92 957.00 C1354.69 955.31 1354.21 951.10 1357.50 951.10 C1360.78 951.10 1360.30 955.31 1364.07 957.00 C1366.88 957.00 1369.06 957.00 1370.65 957.00 C1375.63 949.61 1373.94 937.50 1377.22 937.50 C1380.51 937.50 1378.82 949.61 1383.80 957.00 C1385.39 957.00 1388.31 957.00 1390.38 957.00 C1394.88 952.65 1393.66 944.30 1396.95 944.30 C1400.24 944.30 1399.02 952.65 1403.53 957.00 C1405.60 957.00 1406.82 957.00 1410.11 957.00 C1413.39 957.00 1413.39 957.00 1416.68 957.00 C1419.97 957.00 1419.97 957.00 1423.26 957.00 C1426.55 957.00 1426.55 957.00 1429.83 957.00 C1433.12 957.00 1433.12 957.00 1436.41 957.00 C1439.70 957.00 1439.70 957.00 1442.99 957.00 C1446.27 957.00 1446.27 957.00 1449.56 957.00 C1452.85 957.00 1452.92 957.00 1456.14 957.00 C1459.50 956.49 1459.43 955.00 1462.72 955.00 C1466.00 955.00 1465.93 956.49 1469.29 957.00 C1472.51 957.00 1472.58 957.00 1475.87 957.00 C1479.16 957.00 1479.23 957.00 1482.44 957.00 C1485.80 956.49 1485.73 955.00 1489.02 955.00 C1492.31 955.00 1492.24 956.49 1495.60 957.00 C1498.81 957.00 1498.88 957.00 1502.17 957.00 C1505.46 957.00 1505.46 957.00 1508.75 957.00 C1512.04 957.00 1512.04 957.00 1515.32 957.00 C1518.61 957.00 1518.61 957.00 1521.90 957.00 C1525.19 957.00 1525.19 957.00 1528.48 957.00 C1531.77 957.00 1531.77 957.00 1535.05 957.00 C1538.34 957.00 1538.34 957.00 1541.63 957.00 C1544.92 957.00 1544.92 957.00 1548.21 957.00 C1551.49 957.00 1551.49 957.00 1554.78 957.00 C1558.07 957.00 1558.07 957.00 1561.36 957.00 C1564.65 957.00 1564.65 957.00 1567.93 957.00 C1571.22 957.00 1571.22 957.00 1574.51 957.00 C1577.80 957.00 1577.80 957.00 1581.09 957.00 C1584.38 957.00 1584.38 957.00 1587.66 957.00 C1590.95 957.00 1590.95 957.00 1594.24 957.00 C1597.53 957.00 1597.53 957.00 1600.82 957.00 C1604.10 957.00 1604.10 957.00 1607.39 957.00 C1610.68 957.00 1610.68 957.00 1613.97 957.00 C1617.26 957.00 1617.26 957.00 1620.54 957.00 C1623.83 957.00 1624.22 957.00 1627.12 957.00 C1630.79 955.58 1630.04 953.57 1633.70 951.90 C1636.61 950.57 1637.46 949.91 1640.27 951.00 C1644.04 952.46 1643.07 955.27 1646.85 957.00 C1649.64 957.00 1650.14 957.00 1653.43 957.00 C1656.71 957.00 1657.15 957.00 1660.00 957.00 C1663.72 955.44 1663.29 951.50 1666.58 951.50 C1669.87 951.50 1669.43 955.44 1673.15 957.00 C1676.01 957.00 1676.44 957.00 1679.73 957.00 C1683.02 957.00 1683.02 957.00 1686.31 957.00 C1689.59 957.00 1689.59 957.00 1692.88 957.00 C1696.17 957.00 1696.17 957.00 1699.46 957.00 C1702.75 957.00 1702.75 957.00 1706.04 957.00 C1709.32 957.00 1709.32 957.00 1712.61 957.00 C1715.90 957.00 1716.78 957.00 1719.19 957.00 C1723.36 954.05 1722.48 947.70 1725.76 947.70 C1729.05 947.70 1728.17 954.05 1732.34 957.00 C1734.75 957.00 1735.63 957.00 1738.92 957.00 C1742.20 957.00 1742.20 957.00 1745.49 957.00 C1748.78 957.00 1748.78 957.00 1752.07 957.00 C1755.36 957.00 1755.36 957.00 1758.64 957.00 C1761.93 957.00 1761.93 957.00 1765.22 957.00 C1768.51 957.00 1768.51 957.00 1771.80 957.00 C1775.09 957.00 1775.09 957.00 1778.37 957.00 C1781.66 957.00 1781.66 957.00 1784.95 957.00 C1788.24 957.00 1788.24 957.00 1791.53 957.00 C1794.81 957.00 1795.63 957.00 1798.10 957.00 C1802.20 954.29 1801.39 948.30 1804.68 948.30 C1807.97 948.30 1807.15 954.29 1811.25 957.00 C1813.73 957.00 1814.54 957.00 1817.83 957.00 C1821.12 957.00 1821.12 957.00 1824.41 957.00 C1827.70 957.00 1827.70 957.00 1830.98 957.00 C1834.27 957.00 1834.27 957.00 1837.56 957.00 C1840.85 957.00 1841.61 957.00 1844.14 957.00 C1848.19 954.46 1850.71 948.75 1850.71 948.75" fill="none" stroke="#f8698a" stroke-width="2"/>
<circle cx="640.69" cy="957.00" r="1.8" fill="#fff" stroke="#14cca5" stroke-width="1.2"/>
<circle cx="647.26" cy="957.00" r="1.8" fill="#fff" stroke="#14cca5" stroke-width="1.2"/>
<circle cx="653.84" cy="957.00" r="1.8" fill="#fff" stroke="#14cca5" stroke-width="1.2"/>
<circle cx="660.42" cy="957.00" r="1.8" fill="#fff" stroke="#14cca5" stroke-width="1.2"/>
<circle cx="666.99" cy="957.00" r="1.8" fill="#fff" stroke="#14cca5" stroke-width="1.2"/>
<circle cx="673.57" cy="957.00" r="1.8" fill="#fff" stroke="#14cca5" stroke-width="1.2"/>
<circle cx="680.15" cy="957.00" r="1.8" fill="#fff" stroke="#14cca5" stroke-width="1.2"/>
<circle cx="686.72" cy="957.00" r="1.8" fill="#fff" stroke="#14cca5" stroke-width="1.2"/>
<circle cx="693.30" cy="957.00" r="1.8" fill="#fff" stroke="#14cca5" stroke-width="1.2"/>
<circle cx="699.87" cy="957.00" r="1.8" fill="#fff" stroke="#14cca5" stroke-width="1.2"/>
<circle cx="706.45" cy="957.00" r="1.8" fill="#fff" stroke="#14cca5" stroke-width="1.2"/>
<circle cx="713.03" cy="957.00" r="1.8" fill="#fff" stroke="#14cca5" stroke-width="1.2"/>
<circle cx="719.60" cy="957.00" r="1.8" fill="#fff" stroke="#14cca5" stroke-width="1.2"/>
<circle cx="726.18" cy="957.00" r="1.8" fill="#fff" stroke="#14cca5" stroke-width="1.2"/>
<circle cx="732.76" cy="957.00" r="1.8" fill="#fff" stroke="#14cca5" stroke-width="1.2"/>
<circle cx="739.33" cy="957.00" r="1.8" fill="#fff" stroke="#14cca5" stroke-width="1.2"/>
<circle cx="745.91" cy="957.00" r="1.8" fill="#fff" stroke="#14cca5" stroke-width="1.2"/>
<circle cx="752.48" cy="957.00" r="1.8" fill="#fff" stroke="#14cca5" stroke-width="1.2"/>
<circle cx="759.06" cy="957.00" r="1.8" fill="#fff" stroke="#14cca5" stroke-width="1.2"/>
<circle cx="765.64" cy="957.00" r="1.8" fill="#fff" stroke="#14cca5" stroke-width="1.2"/>
<circle cx="772.21" cy="957.00" r="1.8" fill="#fff" stroke="#14cca5" stroke-width="1.2"/>
<circle cx="778.79" cy="957.00" r="1.8" fill="#fff" stroke="#14cca5" stroke-width="1.2"/>
<circle cx="785.36" cy="957.00" r="1.8" fill="#fff" stroke="#14cca5" stroke-width="1.2"/>
<circle cx="791.94" cy="957.00" r="1.8" fill="#fff" stroke="#14cca5" stroke-width="1.2"/>
<circle cx="798.52" cy="957.00" r="1.8" fill="#fff" stroke="#14cca5" stroke-width="1.2"/>
<circle cx="805.09" cy="957.00" r="1.8" fill="#fff" stroke="#14cca5" stroke-width="1.2"/>
<circle cx="811.67" cy="957.00" r="1.8" fill="#fff" stroke="#14cca5" stroke-width="1.2"/>
<circle cx="818.25" cy="957.00" r="1.8" fill="#fff" stroke="#14cca5" stroke-width="1.2"/>
<circle cx="824.82" cy="957.00" r="1.8" fill="#fff" stroke="#14cca5" stroke-width="1.2"/>
<circle cx="831.40" cy="957.00" r="1.8" fill="#fff" stroke="#14cca5" stroke-width="1.2"/>
<circle cx="837.97" cy="957.00" r="1.8" fill="#fff" stroke="#14cca5" stroke-width="1.2"/>
<circle cx="844.55" cy="957.00" r="1.8" fill="#fff" stroke="#14cca5" stroke-width="1.2"/>
<circle cx="851.13" cy="957.00" r="1.8" fill="#fff" stroke="#14cca5" stroke-width="1.2"/>
<circle cx="857.70" cy="957.00" r="1.8" fill="#fff" stroke="#14cca5" stroke-width="1.2"/>
<circle cx="864.28" cy="957.00" r="1.8" fill="#fff" stroke="#14cca5" stroke-width="1.2"/>
<circle cx="870.86" cy="957.00" r="1.8" fill="#fff" stroke="#14cca5" stroke-width="1.2"/>
<circle cx="877.43" cy="957.00" r="1.8" fill="#fff" stroke="#14cca5" stroke-width="1.2"/>
<circle cx="884.01" cy="957.00" r="1.8" fill="#fff" stroke="#14cca5" stroke-width="1.2"/>
<circle cx="890.58" cy="957.00" r="1.8" fill="#fff" stroke="#14cca5" stroke-width="1.2"/>
<circle cx="897.16" cy="957.00" r="1.8" fill="#fff" stroke="#14cca5" stroke-width="1.2"/>
<circle cx="903.74" cy="957.00" r="1.8" fill="#fff" stroke="#14cca5" stroke-width="1.2"/>
<circle cx="910.31" cy="957.00" r="1.8" fill="#fff" stroke="#14cca5" stroke-width="1.2"/>
<circle cx="916.89" cy="957.00" r="1.8" fill="#fff" stroke="#14cca5" stroke-width="1.2"/>
<circle cx="923.47" cy="957.00" r="1.8" fill="#fff" stroke="#14cca5" stroke-width="1.2"/>
<circle cx="930.04" cy="957.00" r="1.8" fill="#fff" stroke="#14cca5" stroke-width="1.2"/>
<circle cx="936.62" cy="957.00" r="1.8" fill="#fff" stroke="#14cca5" stroke-width="1.2"/>
<circle cx="943.19" cy="957.00" r="1.8" fill="#fff" stroke="#14cca5" stroke-width="1.2"/>
<circle cx="949.77" cy="957.00" r="1.8" fill="#fff" stroke="#14cca5" stroke-width="1.2"/>
<circle cx="956.35" cy="957.00" r="1.8" fill="#fff" stroke="#14cca5" stroke-width="1.2"/>
<circle cx="962.92" cy="957.00" r="1.8" fill="#fff" stroke="#14cca5" stroke-width="1.2"/>
<circle cx="969.50" cy="957.00" r="1.8" fill="#fff" stroke="#14cca5" stroke-width="1.2"/>
<circle cx="976.08" cy="957.00" r="1.8" fill="#fff" stroke="#14cca5" stroke-width="1.2"/>
<circle cx="982.65" cy="957.00" r="1.8" fill="#fff" stroke="#14cca5" stroke-width="1.2"/>
<circle cx="989.23" cy="957.00" r="1.8" fill="#fff" stroke="#14cca5" stroke-width="1.2"/>
<circle cx="995.80" cy="957.00" r="1.8" fill="#fff" stroke="#14cca5" stroke-width="1.2"/>
<circle cx="1002.38" cy="957.00" r="1.8" fill="#fff" stroke="#14cca5" stroke-width="1.2"/>
<circle cx="1008.96" cy="957.00" r="1.8" fill="#fff" stroke="#14cca5" stroke-width="1.2"/>
<circle cx="1015.53" cy="957.00" r="1.8" fill="#fff" stroke="#14cca5" stroke-width="1.2"/>
<circle cx="1022.11" cy="957.00" r="1.8" fill="#fff" stroke="#14cca5" stroke-width="1.2"/>
<circle cx="1028.68" cy="957.00" r="1.8" fill="#fff" stroke="#14cca5" stroke-width="1.2"/>
<circle cx="1035.26" cy="957.00" r="1.8" fill="#fff" stroke="#14cca5" stroke-width="1.2"/>
<circle cx="1041.84" cy="957.00" r="1.8" fill="#fff" stroke="#14cca5" stroke-width="1.2"/>
<circle cx="1048.41" cy="957.00" r="1.8" fill="#fff" stroke="#14cca5" stroke-width="1.2"/>
<circle cx="1054.99" cy="957.00" r="1.8" fill="#fff" stroke="#14cca5" stroke-width="1.2"/>
<circle cx="1061.57" cy="957.00" r="1.8" fill="#fff" stroke="#14cca5" stroke-width="1.2"/>
<circle cx="1068.14" cy="957.00" r="1.8" fill="#fff" stroke="#14cca5" stroke-width="1.2"/>
<circle cx="1074.72" cy="957.00" r="1.8" fill="#fff" stroke="#14cca5" stroke-width="1.2"/>
<circle cx="1081.29" cy="957.00" r="1.8" fill="#fff" stroke="#14cca5" stroke-width="1.2"/>
<circle cx="1087.87" cy="957.00" r="1.8" fill="#fff" stroke="#14cca5" stroke-width="1.2"/>
<circle cx="1094.45" cy="957.00" r="1.8" fill="#fff" stroke="#14cca5" stroke-width="1.2"/>
<circle cx="1101.02" cy="957.00" r="1.8" fill="#fff" stroke="#14cca5" stroke-width="1.2"/>
<circle cx="1107.60" cy="957.00" r="1.8" fill="#fff" stroke="#14cca5" stroke-width="1.2"/>
<circle cx="1114.18" cy="957.00" r="1.8" fill="#fff" stroke="#14cca5" stroke-width="1.2"/>
<circle cx="1120.75" cy="957.00" r="1.8" fill="#fff" stroke="#14cca5" stroke-width="1.2"/>
<circle cx="1127.33" cy="957.00" r="1.8" fill="#fff" stroke="#14cca5" stroke-width="1.2"/>
<circle cx="1133.90" cy="957.00" r="1.8" fill="#fff" stroke="#14cca5" stroke-width="1.2"/>
<circle cx="1140.48" cy="957.00" r="1.8" fill="#fff" stroke="#14cca5" stroke-width="1.2"/>
<circle cx="1147.06" cy="957.00" r="1.8" fill="#fff" stroke="#14cca5" stroke-width="1.2"/>
<circle cx="1153.63" cy="957.00" r="1.8" fill="#fff" stroke="#14cca5" stroke-width="1.2"/>
<circle cx="1160.21" cy="957.00" r="1.8" fill="#fff" stroke="#14cca5" stroke-width="1.2"/>
<circle cx="1166.79" cy="957.00" r="1.8" fill="#fff" stroke="#14cca5" stroke-width="1.2"/>
<circle cx="1173.36" cy="957.00" r="1.8" fill="#fff" stroke="#14cca5" stroke-width="1.2"/>
<circle cx="1179.94" cy="957.00" r="1.8" fill="#fff" stroke="#14cca5" stroke-width="1.2"/>
<circle cx="1186.51" cy="957.00" r="1.8" fill="#fff" stroke="#14cca5" stroke-width="1.2"/>
<circle cx="1193.09" cy="957.00" r="1.8" fill="#fff" stroke="#14cca5" stroke-width="1.2"/>
<circle cx="1199.67" cy="957.00" r="1.8" fill="#fff" stroke="#14cca5" stroke-width="1.2"/>
<circle cx="1206.24" cy="957.00" r="1.8" fill="#fff" stroke="#14cca5" stroke-width="1.2"/>
<circle cx="1212.82" cy="957.00" r="1.8" fill="#fff" stroke="#14cca5" stroke-width="1.2"/>
<circle cx="1219.40" cy="926.20" r="1.8" fill="#fff" stroke="#14cca5" stroke-width="1.2"/>
<circle cx="1225.97" cy="904.40" r="1.8" fill="#fff" stroke="#14cca5" stroke-width="1.2"/>
<circle cx="1232.55" cy="957.00" r="1.8" fill="#fff" stroke="#14cca5" stroke-width="1.2"/>
<circle cx="1239.12" cy="957.00" r="1.8" fill="#fff" stroke="#14cca5" stroke-width="1.2"/>
<circle cx="1245.70" cy="957.00" r="1.8" fill="#fff" stroke="#14cca5" stroke-width="1.2"/>
<circle cx="1252.28" cy="925.80" r="1.8" fill="#fff" stroke="#14cca5" stroke-width="1.2"/>
<circle cx="1258.85" cy="957.00" r="1.8" fill="#fff" stroke="#14cca5" stroke-width="1.2"/>
<circle cx="1265.43" cy="957.00" r="1.8" fill="#fff" stroke="#14cca5" stroke-width="1.2"/>
<circle cx="1272.00" cy="957.00" r="1.8" fill="#fff" stroke="#14cca5" stroke-width="1.2"/>
<circle cx="1278.58" cy="957.00" r="1.8" fill="#fff" stroke="#14cca5" stroke-width="1.2"/>
<circle cx="1285.16" cy="926.20" r="1.8" fill="#fff" stroke="#14cca5" stroke-width="1.2"/>
<circle cx="1291.73" cy="837.70" r="1.8" fill="#fff" stroke="#14cca5" stroke-width="1.2"/>
<circle cx="1298.31" cy="957.00" r="1.8" fill="#fff" stroke="#14cca5" stroke-width="1.2"/>
<circle cx="1304.89" cy="957.00" r="1.8" fill="#fff" stroke="#14cca5" stroke-width="1.2"/>
<circle cx="1311.46" cy="957.00" r="1.8" fill="#fff" stroke="#14cca5" stroke-width="1.2"/>
<circle cx="1318.04" cy="957.00" r="1.8" fill="#fff" stroke="#14cca5" stroke-width="1.2"/>
<circle cx="1324.61" cy="918.40" r="1.8" fill="#fff" stroke="#14cca5" stroke-width="1.2"/>
<circle cx="1331.19" cy="957.00" r="1.8" fill="#fff" stroke="#14cca5" stroke-width="1.2"/>
<circle cx="1337.77" cy="957.00" r="1.8" fill="#fff" stroke="#14cca5" stroke-width="1.2"/>
<circle cx="1344.34" cy="896.10" r="1.8" fill="#fff" stroke="#14cca5" stroke-width="1.2"/>
<circle cx="1350.92" cy="957.00" r="1.8" fill="#fff" stroke="#14cca5" stroke-width="1.2"/>
<circle cx="1357.50" cy="957.00" r="1.8" fill="#fff" stroke="#14cca5" stroke-width="1.2"/>
<circle cx="1364.07" cy="957.00" r="1.8" fill="#fff" stroke="#14cca5" stroke-width="1.2"/>
<circle cx="1370.65" cy="957.00" r="1.8" fill="#fff" stroke="#14cca5" stroke-width="1.2"/>
<circle cx="1377.22" cy="957.00" r="1.8" fill="#fff" stroke="#14cca5" stroke-width="1.2"/>
<circle cx="1383.80" cy="806.20" r="1.8" fill="#fff" stroke="#14cca5" stroke-width="1.2"/>
<circle cx="1390.38" cy="957.00" r="1.8" fill="#fff" stroke="#14cca5" stroke-width="1.2"/>
<circle cx="1396.95" cy="957.00" r="1.8" fill="#fff" stroke="#14cca5" stroke-width="1.2"/>
<circle cx="1403.53" cy="957.00" r="1.8" fill="#fff" stroke="#14cca5" stroke-width="1.2"/>
<circle cx="1410.11" cy="957.00" r="1.8" fill="#fff" stroke="#14cca5" stroke-width="1.2"/>
<circle cx="1416.68" cy="957.00" r="1.8" fill="#fff" stroke="#14cca5" stroke-width="1.2"/>
<circle cx="1423.26" cy="910.70" r="1.8" fill="#fff" stroke="#14cca5" stroke-width="1.2"/>
<circle cx="1429.83" cy="957.00" r="1.8" fill="#fff" stroke="#14cca5" stroke-width="1.2"/>
<circle cx="1436.41" cy="926.20" r="1.8" fill="#fff" stroke="#14cca5" stroke-width="1.2"/>
<circle cx="1442.99" cy="827.60" r="1.8" fill="#fff" stroke="#14cca5" stroke-width="1.2"/>
<circle cx="1449.56" cy="957.00" r="1.8" fill="#fff" stroke="#14cca5" stroke-width="1.2"/>
<circle cx="1456.14" cy="957.00" r="1.8" fill="#fff" stroke="#14cca5" stroke-width="1.2"/>
<circle cx="1462.72" cy="957.00" r="1.8" fill="#fff" stroke="#14cca5" stroke-width="1.2"/>
<circle cx="1469.29" cy="925.80" r="1.8" fill="#fff" stroke="#14cca5" stroke-width="1.2"/>
<circle cx="1475.87" cy="957.00" r="1.8" fill="#fff" stroke="#14cca5" stroke-width="1.2"/>
<circle cx="1482.44" cy="957.00" r="1.8" fill="#fff" stroke="#14cca5" stroke-width="1.2"/>
<circle cx="1489.02" cy="896.00" r="1.8" fill="#fff" stroke="#14cca5" stroke-width="1.2"/>
<circle cx="1495.60" cy="957.00" r="1.8" fill="#fff" stroke="#14cca5" stroke-width="1.2"/>
<circle cx="1502.17" cy="957.00" r="1.8" fill="#fff" stroke="#14cca5" stroke-width="1.2"/>
<circle cx="1508.75" cy="957.00" r="1.8" fill="#fff" stroke="#14cca5" stroke-width="1.2"/>
<circle cx="1515.32" cy="957.00" r="1.8" fill="#fff" stroke="#14cca5" stroke-width="1.2"/>
<circle cx="1521.90" cy="928.30" r="1.8" fill="#fff" stroke="#14cca5" stroke-width="1.2"/>
<circle cx="1528.48" cy="957.00" r="1.8" fill="#fff" stroke="#14cca5" stroke-width="1.2"/>
<circle cx="1535.05" cy="928.30" r="1.8" fill="#fff" stroke="#14cca5" stroke-width="1.2"/>
<circle cx="1541.63" cy="957.00" r="1.8" fill="#fff" stroke="#14cca5" stroke-width="1.2"/>
<circle cx="1548.21" cy="957.00" r="1.8" fill="#fff" stroke="#14cca5" stroke-width="1.2"/>
<circle cx="1554.78" cy="942.50" r="1.8" fill="#fff" stroke="#14cca5" stroke-width="1.2"/>
<circle cx="1561.36" cy="957.00" r="1.8" fill="#fff" stroke="#14cca5" stroke-width="1.2"/>
<circle cx="1567.93" cy="935.60" r="1.8" fill="#fff" stroke="#14cca5" stroke-width="1.2"/>
<circle cx="1574.51" cy="907.00" r="1.8" fill="#fff" stroke="#14cca5" stroke-width="1.2"/>
<circle cx="1581.09" cy="957.00" r="1.8" fill="#fff" stroke="#14cca5" stroke-width="1.2"/>
<circle cx="1587.66" cy="957.00" r="1.8" fill="#fff" stroke="#14cca5" stroke-width="1.2"/>
<circle cx="1594.24" cy="957.00" r="1.8" fill="#fff" stroke="#14cca5" stroke-width="1.2"/>
<circle cx="1600.82" cy="957.00" r="1.8" fill="#fff" stroke="#14cca5" stroke-width="1.2"/>
<circle cx="1607.39" cy="957.00" r="1.8" fill="#fff" stroke="#14cca5" stroke-width="1.2"/>
<circle cx="1613.97" cy="957.00" r="1.8" fill="#fff" stroke="#14cca5" stroke-width="1.2"/>
<circle cx="1620.54" cy="957.00" r="1.8" fill="#fff" stroke="#14cca5" stroke-width="1.2"/>
<circle cx="1627.12" cy="957.00" r="1.8" fill="#fff" stroke="#14cca5" stroke-width="1.2"/>
<circle cx="1633.70" cy="957.00" r="1.8" fill="#fff" stroke="#14cca5" stroke-width="1.2"/>
<circle cx="1640.27" cy="957.00" r="1.8" fill="#fff" stroke="#14cca5" stroke-width="1.2"/>
<circle cx="1646.85" cy="957.00" r="1.8" fill="#fff" stroke="#14cca5" stroke-width="1.2"/>
<circle cx="1653.43" cy="957.00" r="1.8" fill="#fff" stroke="#14cca5" stroke-width="1.2"/>
<circle cx="1660.00" cy="957.00" r="1.8" fill="#fff" stroke="#14cca5" stroke-width="1.2"/>
<circle cx="1666.58" cy="957.00" r="1.8" fill="#fff" stroke="#14cca5" stroke-width="1.2"/>
<circle cx="1673.15" cy="957.00" r="1.8" fill="#fff" stroke="#14cca5" stroke-width="1.2"/>
<circle cx="1679.73" cy="957.00" r="1.8" fill="#fff" stroke="#14cca5" stroke-width="1.2"/>
<circle cx="1686.31" cy="957.00" r="1.8" fill="#fff" stroke="#14cca5" stroke-width="1.2"/>
<circle cx="1692.88" cy="957.00" r="1.8" fill="#fff" stroke="#14cca5" stroke-width="1.2"/>
<circle cx="1699.46" cy="957.00" r="1.8" fill="#fff" stroke="#14cca5" stroke-width="1.2"/>
<circle cx="1706.04" cy="842.90" r="1.8" fill="#fff" stroke="#14cca5" stroke-width="1.2"/>
<circle cx="1712.61" cy="957.00" r="1.8" fill="#fff" stroke="#14cca5" stroke-width="1.2"/>
<circle cx="1719.19" cy="957.00" r="1.8" fill="#fff" stroke="#14cca5" stroke-width="1.2"/>
<circle cx="1725.76" cy="957.00" r="1.8" fill="#fff" stroke="#14cca5" stroke-width="1.2"/>
<circle cx="1732.34" cy="914.40" r="1.8" fill="#fff" stroke="#14cca5" stroke-width="1.2"/>
<circle cx="1738.92" cy="957.00" r="1.8" fill="#fff" stroke="#14cca5" stroke-width="1.2"/>
<circle cx="1745.49" cy="908.50" r="1.8" fill="#fff" stroke="#14cca5" stroke-width="1.2"/>
<circle cx="1752.07" cy="957.00" r="1.8" fill="#fff" stroke="#14cca5" stroke-width="1.2"/>
<circle cx="1758.64" cy="957.00" r="1.8" fill="#fff" stroke="#14cca5" stroke-width="1.2"/>
<circle cx="1765.22" cy="957.00" r="1.8" fill="#fff" stroke="#14cca5" stroke-width="1.2"/>
<circle cx="1771.80" cy="957.00" r="1.8" fill="#fff" stroke="#14cca5" stroke-width="1.2"/>
<circle cx="1778.37" cy="942.50" r="1.8" fill="#fff" stroke="#14cca5" stroke-width="1.2"/>
<circle cx="1784.95" cy="957.00" r="1.8" fill="#fff" stroke="#14cca5" stroke-width="1.2"/>
<circle cx="1791.53" cy="957.00" r="1.8" fill="#fff" stroke="#14cca5" stroke-width="1.2"/>
<circle cx="1798.10" cy="957.00" r="1.8" fill="#fff" stroke="#14cca5" stroke-width="1.2"/>
<circle cx="1804.68" cy="957.00" r="1.8" fill="#fff" stroke="#14cca5" stroke-width="1.2"/>
<circle cx="1811.25" cy="957.00" r="1.8" fill="#fff" stroke="#14cca5" stroke-width="1.2"/>
<circle cx="1817.83" cy="935.20" r="1.8" fill="#fff" stroke="#14cca5" stroke-width="1.2"/>
<circle cx="1824.41" cy="957.00" r="1.8" fill="#fff" stroke="#14cca5" stroke-width="1.2"/>
<circle cx="1830.98" cy="899.80" r="1.8" fill="#fff" stroke="#14cca5" stroke-width="1.2"/>
<circle cx="1837.56" cy="957.00" r="1.8" fill="#fff" stroke="#14cca5" stroke-width="1.2"/>
<circle cx="1844.14" cy="957.00" r="1.8" fill="#fff" stroke="#14cca5" stroke-width="1.2"/>
<circle cx="1850.71" cy="957.00" r="1.8" fill="#fff" stroke="#14cca5" stroke-width="1.2"/>
<circle cx="640.69" cy="957.00" r="1.8" fill="#fff" stroke="#5db4f2" stroke-width="1.2"/>
<circle cx="647.26" cy="957.00" r="1.8" fill="#fff" stroke="#5db4f2" stroke-width="1.2"/>
<circle cx="653.84" cy="957.00" r="1.8" fill="#fff" stroke="#5db4f2" stroke-width="1.2"/>
<circle cx="660.42" cy="957.00" r="1.8" fill="#fff" stroke="#5db4f2" stroke-width="1.2"/>
<circle cx="666.99" cy="957.00" r="1.8" fill="#fff" stroke="#5db4f2" stroke-width="1.2"/>
<circle cx="673.57" cy="957.00" r="1.8" fill="#fff" stroke="#5db4f2" stroke-width="1.2"/>
<circle cx="680.15" cy="957.00" r="1.8" fill="#fff" stroke="#5db4f2" stroke-width="1.2"/>
<circle cx="686.72" cy="957.00" r="1.8" fill="#fff" stroke="#5db4f2" stroke-width="1.2"/>
<circle cx="693.30" cy="957.00" r="1.8" fill="#fff" stroke="#5db4f2" stroke-width="1.2"/>
<circle cx="699.87" cy="957.00" r="1.8" fill="#fff" stroke="#5db4f2" stroke-width="1.2"/>
<circle cx="706.45" cy="957.00" r="1.8" fill="#fff" stroke="#5db4f2" stroke-width="1.2"/>
<circle cx="713.03" cy="957.00" r="1.8" fill="#fff" stroke="#5db4f2" stroke-width="1.2"/>
<circle cx="719.60" cy="957.00" r="1.8" fill="#fff" stroke="#5db4f2" stroke-width="1.2"/>
<circle cx="726.18" cy="957.00" r="1.8" fill="#fff" stroke="#5db4f2" stroke-width="1.2"/>
<circle cx="732.76" cy="957.00" r="1.8" fill="#fff" stroke="#5db4f2" stroke-width="1.2"/>
<circle cx="739.33" cy="957.00" r="1.8" fill="#fff" stroke="#5db4f2" stroke-width="1.2"/>
<circle cx="745.91" cy="957.00" r="1.8" fill="#fff" stroke="#5db4f2" stroke-width="1.2"/>
<circle cx="752.48" cy="957.00" r="1.8" fill="#fff" stroke="#5db4f2" stroke-width="1.2"/>
<circle cx="759.06" cy="957.00" r="1.8" fill="#fff" stroke="#5db4f2" stroke-width="1.2"/>
<circle cx="765.64" cy="957.00" r="1.8" fill="#fff" stroke="#5db4f2" stroke-width="1.2"/>
<circle cx="772.21" cy="957.00" r="1.8" fill="#fff" stroke="#5db4f2" stroke-width="1.2"/>
<circle cx="778.79" cy="957.00" r="1.8" fill="#fff" stroke="#5db4f2" stroke-width="1.2"/>
<circle cx="785.36" cy="957.00" r="1.8" fill="#fff" stroke="#5db4f2" stroke-width="1.2"/>
<circle cx="791.94" cy="957.00" r="1.8" fill="#fff" stroke="#5db4f2" stroke-width="1.2"/>
<circle cx="798.52" cy="957.00" r="1.8" fill="#fff" stroke="#5db4f2" stroke-width="1.2"/>
<circle cx="805.09" cy="957.00" r="1.8" fill="#fff" stroke="#5db4f2" stroke-width="1.2"/>
<circle cx="811.67" cy="957.00" r="1.8" fill="#fff" stroke="#5db4f2" stroke-width="1.2"/>
<circle cx="818.25" cy="957.00" r="1.8" fill="#fff" stroke="#5db4f2" stroke-width="1.2"/>
<circle cx="824.82" cy="957.00" r="1.8" fill="#fff" stroke="#5db4f2" stroke-width="1.2"/>
<circle cx="831.40" cy="957.00" r="1.8" fill="#fff" stroke="#5db4f2" stroke-width="1.2"/>
<circle cx="837.97" cy="957.00" r="1.8" fill="#fff" stroke="#5db4f2" stroke-width="1.2"/>
<circle cx="844.55" cy="957.00" r="1.8" fill="#fff" stroke="#5db4f2" stroke-width="1.2"/>
<circle cx="851.13" cy="957.00" r="1.8" fill="#fff" stroke="#5db4f2" stroke-width="1.2"/>
<circle cx="857.70" cy="957.00" r="1.8" fill="#fff" stroke="#5db4f2" stroke-width="1.2"/>
<circle cx="864.28" cy="957.00" r="1.8" fill="#fff" stroke="#5db4f2" stroke-width="1.2"/>
<circle cx="870.86" cy="957.00" r="1.8" fill="#fff" stroke="#5db4f2" stroke-width="1.2"/>
<circle cx="877.43" cy="957.00" r="1.8" fill="#fff" stroke="#5db4f2" stroke-width="1.2"/>
<circle cx="884.01" cy="957.00" r="1.8" fill="#fff" stroke="#5db4f2" stroke-width="1.2"/>
<circle cx="890.58" cy="957.00" r="1.8" fill="#fff" stroke="#5db4f2" stroke-width="1.2"/>
<circle cx="897.16" cy="957.00" r="1.8" fill="#fff" stroke="#5db4f2" stroke-width="1.2"/>
<circle cx="903.74" cy="957.00" r="1.8" fill="#fff" stroke="#5db4f2" stroke-width="1.2"/>
<circle cx="910.31" cy="957.00" r="1.8" fill="#fff" stroke="#5db4f2" stroke-width="1.2"/>
<circle cx="916.89" cy="957.00" r="1.8" fill="#fff" stroke="#5db4f2" stroke-width="1.2"/>
<circle cx="923.47" cy="957.00" r="1.8" fill="#fff" stroke="#5db4f2" stroke-width="1.2"/>
<circle cx="930.04" cy="957.00" r="1.8" fill="#fff" stroke="#5db4f2" stroke-width="1.2"/>
<circle cx="936.62" cy="957.00" r="1.8" fill="#fff" stroke="#5db4f2" stroke-width="1.2"/>
<circle cx="943.19" cy="957.00" r="1.8" fill="#fff" stroke="#5db4f2" stroke-width="1.2"/>
<circle cx="949.77" cy="957.00" r="1.8" fill="#fff" stroke="#5db4f2" stroke-width="1.2"/>
<circle cx="956.35" cy="957.00" r="1.8" fill="#fff" stroke="#5db4f2" stroke-width="1.2"/>
<circle cx="962.92" cy="957.00" r="1.8" fill="#fff" stroke="#5db4f2" stroke-width="1.2"/>
<circle cx="969.50" cy="957.00" r="1.8" fill="#fff" stroke="#5db4f2" stroke-width="1.2"/>
<circle cx="976.08" cy="957.00" r="1.8" fill="#fff" stroke="#5db4f2" stroke-width="1.2"/>
<circle cx="982.65" cy="957.00" r="1.8" fill="#fff" stroke="#5db4f2" stroke-width="1.2"/>
<circle cx="989.23" cy="957.00" r="1.8" fill="#fff" stroke="#5db4f2" stroke-width="1.2"/>
<circle cx="995.80" cy="957.00" r="1.8" fill="#fff" stroke="#5db4f2" stroke-width="1.2"/>
<circle cx="1002.38" cy="957.00" r="1.8" fill="#fff" stroke="#5db4f2" stroke-width="1.2"/>
<circle cx="1008.96" cy="957.00" r="1.8" fill="#fff" stroke="#5db4f2" stroke-width="1.2"/>
<circle cx="1015.53" cy="957.00" r="1.8" fill="#fff" stroke="#5db4f2" stroke-width="1.2"/>
<circle cx="1022.11" cy="957.00" r="1.8" fill="#fff" stroke="#5db4f2" stroke-width="1.2"/>
<circle cx="1028.68" cy="957.00" r="1.8" fill="#fff" stroke="#5db4f2" stroke-width="1.2"/>
<circle cx="1035.26" cy="957.00" r="1.8" fill="#fff" stroke="#5db4f2" stroke-width="1.2"/>
<circle cx="1041.84" cy="957.00" r="1.8" fill="#fff" stroke="#5db4f2" stroke-width="1.2"/>
<circle cx="1048.41" cy="957.00" r="1.8" fill="#fff" stroke="#5db4f2" stroke-width="1.2"/>
<circle cx="1054.99" cy="957.00" r="1.8" fill="#fff" stroke="#5db4f2" stroke-width="1.2"/>
<circle cx="1061.57" cy="957.00" r="1.8" fill="#fff" stroke="#5db4f2" stroke-width="1.2"/>
<circle cx="1068.14" cy="957.00" r="1.8" fill="#fff" stroke="#5db4f2" stroke-width="1.2"/>
<circle cx="1074.72" cy="957.00" r="1.8" fill="#fff" stroke="#5db4f2" stroke-width="1.2"/>
<circle cx="1081.29" cy="957.00" r="1.8" fill="#fff" stroke="#5db4f2" stroke-width="1.2"/>
<circle cx="1087.87" cy="957.00" r="1.8" fill="#fff" stroke="#5db4f2" stroke-width="1.2"/>
<circle cx="1094.45" cy="957.00" r="1.8" fill="#fff" stroke="#5db4f2" stroke-width="1.2"/>
<circle cx="1101.02" cy="957.00" r="1.8" fill="#fff" stroke="#5db4f2" stroke-width="1.2"/>
<circle cx="1107.60" cy="957.00" r="1.8" fill="#fff" stroke="#5db4f2" stroke-width="1.2"/>
<circle cx="1114.18" cy="957.00" r="1.8" fill="#fff" stroke="#5db4f2" stroke-width="1.2"/>
<circle cx="1120.75" cy="957.00" r="1.8" fill="#fff" stroke="#5db4f2" stroke-width="1.2"/>
<circle cx="1127.33" cy="957.00" r="1.8" fill="#fff" stroke="#5db4f2" stroke-width="1.2"/>
<circle cx="1133.90" cy="957.00" r="1.8" fill="#fff" stroke="#5db4f2" stroke-width="1.2"/>
<circle cx="1140.48" cy="957.00" r="1.8" fill="#fff" stroke="#5db4f2" stroke-width="1.2"/>
<circle cx="1147.06" cy="957.00" r="1.8" fill="#fff" stroke="#5db4f2" stroke-width="1.2"/>
<circle cx="1153.63" cy="957.00" r="1.8" fill="#fff" stroke="#5db4f2" stroke-width="1.2"/>
<circle cx="1160.21" cy="957.00" r="1.8" fill="#fff" stroke="#5db4f2" stroke-width="1.2"/>
<circle cx="1166.79" cy="957.00" r="1.8" fill="#fff" stroke="#5db4f2" stroke-width="1.2"/>
<circle cx="1173.36" cy="957.00" r="1.8" fill="#fff" stroke="#5db4f2" stroke-width="1.2"/>
<circle cx="1179.94" cy="957.00" r="1.8" fill="#fff" stroke="#5db4f2" stroke-width="1.2"/>
<circle cx="1186.51" cy="957.00" r="1.8" fill="#fff" stroke="#5db4f2" stroke-width="1.2"/>
<circle cx="1193.09" cy="957.00" r="1.8" fill="#fff" stroke="#5db4f2" stroke-width="1.2"/>
<circle cx="1199.67" cy="957.00" r="1.8" fill="#fff" stroke="#5db4f2" stroke-width="1.2"/>
<circle cx="1206.24" cy="957.00" r="1.8" fill="#fff" stroke="#5db4f2" stroke-width="1.2"/>
<circle cx="1212.82" cy="957.00" r="1.8" fill="#fff" stroke="#5db4f2" stroke-width="1.2"/>
<circle cx="1219.40" cy="957.00" r="1.8" fill="#fff" stroke="#5db4f2" stroke-width="1.2"/>
<circle cx="1225.97" cy="957.00" r="1.8" fill="#fff" stroke="#5db4f2" stroke-width="1.2"/>
<circle cx="1232.55" cy="957.00" r="1.8" fill="#fff" stroke="#5db4f2" stroke-width="1.2"/>
<circle cx="1239.12" cy="957.00" r="1.8" fill="#fff" stroke="#5db4f2" stroke-width="1.2"/>
<circle cx="1245.70" cy="957.00" r="1.8" fill="#fff" stroke="#5db4f2" stroke-width="1.2"/>
<circle cx="1252.28" cy="957.00" r="1.8" fill="#fff" stroke="#5db4f2" stroke-width="1.2"/>
<circle cx="1258.85" cy="957.00" r="1.8" fill="#fff" stroke="#5db4f2" stroke-width="1.2"/>
<circle cx="1265.43" cy="957.00" r="1.8" fill="#fff" stroke="#5db4f2" stroke-width="1.2"/>
<circle cx="1272.00" cy="957.00" r="1.8" fill="#fff" stroke="#5db4f2" stroke-width="1.2"/>
<circle cx="1278.58" cy="957.00" r="1.8" fill="#fff" stroke="#5db4f2" stroke-width="1.2"/>
<circle cx="1285.16" cy="957.00" r="1.8" fill="#fff" stroke="#5db4f2" stroke-width="1.2"/>
<circle cx="1291.73" cy="957.00" r="1.8" fill="#fff" stroke="#5db4f2" stroke-width="1.2"/>
<circle cx="1298.31" cy="957.00" r="1.8" fill="#fff" stroke="#5db4f2" stroke-width="1.2"/>
<circle cx="1304.89" cy="957.00" r="1.8" fill="#fff" stroke="#5db4f2" stroke-width="1.2"/>
<circle cx="1311.46" cy="957.00" r="1.8" fill="#fff" stroke="#5db4f2" stroke-width="1.2"/>
<circle cx="1318.04" cy="957.00" r="1.8" fill="#fff" stroke="#5db4f2" stroke-width="1.2"/>
<circle cx="1324.61" cy="957.00" r="1.8" fill="#fff" stroke="#5db4f2" stroke-width="1.2"/>
<circle cx="1331.19" cy="957.00" r="1.8" fill="#fff" stroke="#5db4f2" stroke-width="1.2"/>
<circle cx="1337.77" cy="957.00" r="1.8" fill="#fff" stroke="#5db4f2" stroke-width="1.2"/>
<circle cx="1344.34" cy="957.00" r="1.8" fill="#fff" stroke="#5db4f2" stroke-width="1.2"/>
<circle cx="1350.92" cy="957.00" r="1.8" fill="#fff" stroke="#5db4f2" stroke-width="1.2"/>
<circle cx="1357.50" cy="957.00" r="1.8" fill="#fff" stroke="#5db4f2" stroke-width="1.2"/>
<circle cx="1364.07" cy="957.00" r="1.8" fill="#fff" stroke="#5db4f2" stroke-width="1.2"/>
<circle cx="1370.65" cy="957.00" r="1.8" fill="#fff" stroke="#5db4f2" stroke-width="1.2"/>
<circle cx="1377.22" cy="957.00" r="1.8" fill="#fff" stroke="#5db4f2" stroke-width="1.2"/>
<circle cx="1383.80" cy="957.00" r="1.8" fill="#fff" stroke="#5db4f2" stroke-width="1.2"/>
<circle cx="1390.38" cy="957.00" r="1.8" fill="#fff" stroke="#5db4f2" stroke-width="1.2"/>
<circle cx="1396.95" cy="957.00" r="1.8" fill="#fff" stroke="#5db4f2" stroke-width="1.2"/>
<circle cx="1403.53" cy="957.00" r="1.8" fill="#fff" stroke="#5db4f2" stroke-width="1.2"/>
<circle cx="1410.11" cy="957.00" r="1.8" fill="#fff" stroke="#5db4f2" stroke-width="1.2"/>
<circle cx="1416.68" cy="957.00" r="1.8" fill="#fff" stroke="#5db4f2" stroke-width="1.2"/>
<circle cx="1423.26" cy="957.00" r="1.8" fill="#fff" stroke="#5db4f2" stroke-width="1.2"/>
<circle cx="1429.83" cy="957.00" r="1.8" fill="#fff" stroke="#5db4f2" stroke-width="1.2"/>
<circle cx="1436.41" cy="957.00" r="1.8" fill="#fff" stroke="#5db4f2" stroke-width="1.2"/>
<circle cx="1442.99" cy="957.00" r="1.8" fill="#fff" stroke="#5db4f2" stroke-width="1.2"/>
<circle cx="1449.56" cy="957.00" r="1.8" fill="#fff" stroke="#5db4f2" stroke-width="1.2"/>
<circle cx="1456.14" cy="957.00" r="1.8" fill="#fff" stroke="#5db4f2" stroke-width="1.2"/>
<circle cx="1462.72" cy="957.00" r="1.8" fill="#fff" stroke="#5db4f2" stroke-width="1.2"/>
<circle cx="1469.29" cy="957.00" r="1.8" fill="#fff" stroke="#5db4f2" stroke-width="1.2"/>
<circle cx="1475.87" cy="957.00" r="1.8" fill="#fff" stroke="#5db4f2" stroke-width="1.2"/>
<circle cx="1482.44" cy="957.00" r="1.8" fill="#fff" stroke="#5db4f2" stroke-width="1.2"/>
<circle cx="1489.02" cy="957.00" r="1.8" fill="#fff" stroke="#5db4f2" stroke-width="1.2"/>
<circle cx="1495.60" cy="957.00" r="1.8" fill="#fff" stroke="#5db4f2" stroke-width="1.2"/>
<circle cx="1502.17" cy="957.00" r="1.8" fill="#fff" stroke="#5db4f2" stroke-width="1.2"/>
<circle cx="1508.75" cy="957.00" r="1.8" fill="#fff" stroke="#5db4f2" stroke-width="1.2"/>
<circle cx="1515.32" cy="957.00" r="1.8" fill="#fff" stroke="#5db4f2" stroke-width="1.2"/>
<circle cx="1521.90" cy="957.00" r="1.8" fill="#fff" stroke="#5db4f2" stroke-width="1.2"/>
<circle cx="1528.48" cy="957.00" r="1.8" fill="#fff" stroke="#5db4f2" stroke-width="1.2"/>
<circle cx="1535.05" cy="957.00" r="1.8" fill="#fff" stroke="#5db4f2" stroke-width="1.2"/>
<circle cx="1541.63" cy="957.00" r="1.8" fill="#fff" stroke="#5db4f2" stroke-width="1.2"/>
<circle cx="1548.21" cy="957.00" r="1.8" fill="#fff" stroke="#5db4f2" stroke-width="1.2"/>
<circle cx="1554.78" cy="957.00" r="1.8" fill="#fff" stroke="#5db4f2" stroke-width="1.2"/>
<circle cx="1561.36" cy="957.00" r="1.8" fill="#fff" stroke="#5db4f2" stroke-width="1.2"/>
<circle cx="1567.93" cy="957.00" r="1.8" fill="#fff" stroke="#5db4f2" stroke-width="1.2"/>
<circle cx="1574.51" cy="957.00" r="1.8" fill="#fff" stroke="#5db4f2" stroke-width="1.2"/>
<circle cx="1581.09" cy="957.00" r="1.8" fill="#fff" stroke="#5db4f2" stroke-width="1.2"/>
<circle cx="1587.66" cy="957.00" r="1.8" fill="#fff" stroke="#5db4f2" stroke-width="1.2"/>
<circle cx="1594.24" cy="957.00" r="1.8" fill="#fff" stroke="#5db4f2" stroke-width="1.2"/>
<circle cx="1600.82" cy="957.00" r="1.8" fill="#fff" stroke="#5db4f2" stroke-width="1.2"/>
<circle cx="1607.39" cy="957.00" r="1.8" fill="#fff" stroke="#5db4f2" stroke-width="1.2"/>
<circle cx="1613.97" cy="957.00" r="1.8" fill="#fff" stroke="#5db4f2" stroke-width="1.2"/>
<circle cx="1620.54" cy="957.00" r="1.8" fill="#fff" stroke="#5db4f2" stroke-width="1.2"/>
<circle cx="1627.12" cy="957.00" r="1.8" fill="#fff" stroke="#5db4f2" stroke-width="1.2"/>
<circle cx="1633.70" cy="957.00" r="1.8" fill="#fff" stroke="#5db4f2" stroke-width="1.2"/>
<circle cx="1640.27" cy="957.00" r="1.8" fill="#fff" stroke="#5db4f2" stroke-width="1.2"/>
<circle cx="1646.85" cy="957.00" r="1.8" fill="#fff" stroke="#5db4f2" stroke-width="1.2"/>
<circle cx="1653.43" cy="957.00" r="1.8" fill="#fff" stroke="#5db4f2" stroke-width="1.2"/>
<circle cx="1660.00" cy="957.00" r="1.8" fill="#fff" stroke="#5db4f2" stroke-width="1.2"/>
<circle cx="1666.58" cy="957.00" r="1.8" fill="#fff" stroke="#5db4f2" stroke-width="1.2"/>
<circle cx="1673.15" cy="957.00" r="1.8" fill="#fff" stroke="#5db4f2" stroke-width="1.2"/>
<circle cx="1679.73" cy="957.00" r="1.8" fill="#fff" stroke="#5db4f2" stroke-width="1.2"/>
<circle cx="1686.31" cy="957.00" r="1.8" fill="#fff" stroke="#5db4f2" stroke-width="1.2"/>
<circle cx="1692.88" cy="957.00" r="1.8" fill="#fff" stroke="#5db4f2" stroke-width="1.2"/>
<circle cx="1699.46" cy="957.00" r="1.8" fill="#fff" stroke="#5db4f2" stroke-width="1.2"/>
<circle cx="1706.04" cy="957.00" r="1.8" fill="#fff" stroke="#5db4f2" stroke-width="1.2"/>
<circle cx="1712.61" cy="957.00" r="1.8" fill="#fff" stroke="#5db4f2" stroke-width="1.2"/>
<circle cx="1719.19" cy="957.00" r="1.8" fill="#fff" stroke="#5db4f2" stroke-width="1.2"/>
<circle cx="1725.76" cy="957.00" r="1.8" fill="#fff" stroke="#5db4f2" stroke-width="1.2"/>
<circle cx="1732.34" cy="957.00" r="1.8" fill="#fff" stroke="#5db4f2" stroke-width="1.2"/>
<circle cx="1738.92" cy="957.00" r="1.8" fill="#fff" stroke="#5db4f2" stroke-width="1.2"/>
<circle cx="1745.49" cy="957.00" r="1.8" fill="#fff" stroke="#5db4f2" stroke-width="1.2"/>
<circle cx="1752.07" cy="957.00" r="1.8" fill="#fff" stroke="#5db4f2" stroke-width="1.2"/>
<circle cx="1758.64" cy="957.00" r="1.8" fill="#fff" stroke="#5db4f2" stroke-width="1.2"/>
<circle cx="1765.22" cy="957.00" r="1.8" fill="#fff" stroke="#5db4f2" stroke-width="1.2"/>
<circle cx="1771.80" cy="957.00" r="1.8" fill="#fff" stroke="#5db4f2" stroke-width="1.2"/>
<circle cx="1778.37" cy="957.00" r="1.8" fill="#fff" stroke="#5db4f2" stroke-width="1.2"/>
<circle cx="1784.95" cy="957.00" r="1.8" fill="#fff" stroke="#5db4f2" stroke-width="1.2"/>
<circle cx="1791.53" cy="957.00" r="1.8" fill="#fff" stroke="#5db4f2" stroke-width="1.2"/>
<circle cx="1798.10" cy="957.00" r="1.8" fill="#fff" stroke="#5db4f2" stroke-width="1.2"/>
<circle cx="1804.68" cy="957.00" r="1.8" fill="#fff" stroke="#5db4f2" stroke-width="1.2"/>
<circle cx="1811.25" cy="957.00" r="1.8" fill="#fff" stroke="#5db4f2" stroke-width="1.2"/>
<circle cx="1817.83" cy="957.00" r="1.8" fill="#fff" stroke="#5db4f2" stroke-width="1.2"/>
<circle cx="1824.41" cy="957.00" r="1.8" fill="#fff" stroke="#5db4f2" stroke-width="1.2"/>
<circle cx="1830.98" cy="957.00" r="1.8" fill="#fff" stroke="#5db4f2" stroke-width="1.2"/>
<circle cx="1837.56" cy="957.00" r="1.8" fill="#fff" stroke="#5db4f2" stroke-width="1.2"/>
<circle cx="1844.14" cy="957.00" r="1.8" fill="#fff" stroke="#5db4f2" stroke-width="1.2"/>
<circle cx="1850.71" cy="957.00" r="1.8" fill="#fff" stroke="#5db4f2" stroke-width="1.2"/>
<circle cx="640.69" cy="957.00" r="1.8" fill="#fff" stroke="#f8698a" stroke-width="1.2"/>
<circle cx="647.26" cy="957.00" r="1.8" fill="#fff" stroke="#f8698a" stroke-width="1.2"/>
<circle cx="653.84" cy="957.00" r="1.8" fill="#fff" stroke="#f8698a" stroke-width="1.2"/>
<circle cx="660.42" cy="957.00" r="1.8" fill="#fff" stroke="#f8698a" stroke-width="1.2"/>
<circle cx="666.99" cy="957.00" r="1.8" fill="#fff" stroke="#f8698a" stroke-width="1.2"/>
<circle cx="673.57" cy="957.00" r="1.8" fill="#fff" stroke="#f8698a" stroke-width="1.2"/>
<circle cx="680.15" cy="957.00" r="1.8" fill="#fff" stroke="#f8698a" stroke-width="1.2"/>
<circle cx="686.72" cy="957.00" r="1.8" fill="#fff" stroke="#f8698a" stroke-width="1.2"/>
<circle cx="693.30" cy="957.00" r="1.8" fill="#fff" stroke="#f8698a" stroke-width="1.2"/>
<circle cx="699.87" cy="957.00" r="1.8" fill="#fff" stroke="#f8698a" stroke-width="1.2"/>
<circle cx="706.45" cy="957.00" r="1.8" fill="#fff" stroke="#f8698a" stroke-width="1.2"/>
<circle cx="713.03" cy="957.00" r="1.8" fill="#fff" stroke="#f8698a" stroke-width="1.2"/>
<circle cx="719.60" cy="957.00" r="1.8" fill="#fff" stroke="#f8698a" stroke-width="1.2"/>
<circle cx="726.18" cy="957.00" r="1.8" fill="#fff" stroke="#f8698a" stroke-width="1.2"/>
<circle cx="732.76" cy="957.00" r="1.8" fill="#fff" stroke="#f8698a" stroke-width="1.2"/>
<circle cx="739.33" cy="957.00" r="1.8" fill="#fff" stroke="#f8698a" stroke-width="1.2"/>
<circle cx="745.91" cy="957.00" r="1.8" fill="#fff" stroke="#f8698a" stroke-width="1.2"/>
<circle cx="752.48" cy="957.00" r="1.8" fill="#fff" stroke="#f8698a" stroke-width="1.2"/>
<circle cx="759.06" cy="957.00" r="1.8" fill="#fff" stroke="#f8698a" stroke-width="1.2"/>
<circle cx="765.64" cy="957.00" r="1.8" fill="#fff" stroke="#f8698a" stroke-width="1.2"/>
<circle cx="772.21" cy="957.00" r="1.8" fill="#fff" stroke="#f8698a" stroke-width="1.2"/>
<circle cx="778.79" cy="957.00" r="1.8" fill="#fff" stroke="#f8698a" stroke-width="1.2"/>
<circle cx="785.36" cy="957.00" r="1.8" fill="#fff" stroke="#f8698a" stroke-width="1.2"/>
<circle cx="791.94" cy="957.00" r="1.8" fill="#fff" stroke="#f8698a" stroke-width="1.2"/>
<circle cx="798.52" cy="957.00" r="1.8" fill="#fff" stroke="#f8698a" stroke-width="1.2"/>
<circle cx="805.09" cy="957.00" r="1.8" fill="#fff" stroke="#f8698a" stroke-width="1.2"/>
<circle cx="811.67" cy="957.00" r="1.8" fill="#fff" stroke="#f8698a" stroke-width="1.2"/>
<circle cx="818.25" cy="957.00" r="1.8" fill="#fff" stroke="#f8698a" stroke-width="1.2"/>
<circle cx="824.82" cy="957.00" r="1.8" fill="#fff" stroke="#f8698a" stroke-width="1.2"/>
<circle cx="831.40" cy="957.00" r="1.8" fill="#fff" stroke="#f8698a" stroke-width="1.2"/>
<circle cx="837.97" cy="957.00" r="1.8" fill="#fff" stroke="#f8698a" stroke-width="1.2"/>
<circle cx="844.55" cy="957.00" r="1.8" fill="#fff" stroke="#f8698a" stroke-width="1.2"/>
<circle cx="851.13" cy="957.00" r="1.8" fill="#fff" stroke="#f8698a" stroke-width="1.2"/>
<circle cx="857.70" cy="957.00" r="1.8" fill="#fff" stroke="#f8698a" stroke-width="1.2"/>
<circle cx="864.28" cy="957.00" r="1.8" fill="#fff" stroke="#f8698a" stroke-width="1.2"/>
<circle cx="870.86" cy="957.00" r="1.8" fill="#fff" stroke="#f8698a" stroke-width="1.2"/>
<circle cx="877.43" cy="957.00" r="1.8" fill="#fff" stroke="#f8698a" stroke-width="1.2"/>
<circle cx="884.01" cy="957.00" r="1.8" fill="#fff" stroke="#f8698a" stroke-width="1.2"/>
<circle cx="890.58" cy="957.00" r="1.8" fill="#fff" stroke="#f8698a" stroke-width="1.2"/>
<circle cx="897.16" cy="957.00" r="1.8" fill="#fff" stroke="#f8698a" stroke-width="1.2"/>
<circle cx="903.74" cy="957.00" r="1.8" fill="#fff" stroke="#f8698a" stroke-width="1.2"/>
<circle cx="910.31" cy="957.00" r="1.8" fill="#fff" stroke="#f8698a" stroke-width="1.2"/>
<circle cx="916.89" cy="957.00" r="1.8" fill="#fff" stroke="#f8698a" stroke-width="1.2"/>
<circle cx="923.47" cy="957.00" r="1.8" fill="#fff" stroke="#f8698a" stroke-width="1.2"/>
<circle cx="930.04" cy="957.00" r="1.8" fill="#fff" stroke="#f8698a" stroke-width="1.2"/>
<circle cx="936.62" cy="957.00" r="1.8" fill="#fff" stroke="#f8698a" stroke-width="1.2"/>
<circle cx="943.19" cy="957.00" r="1.8" fill="#fff" stroke="#f8698a" stroke-width="1.2"/>
<circle cx="949.77" cy="957.00" r="1.8" fill="#fff" stroke="#f8698a" stroke-width="1.2"/>
<circle cx="956.35" cy="957.00" r="1.8" fill="#fff" stroke="#f8698a" stroke-width="1.2"/>
<circle cx="962.92" cy="957.00" r="1.8" fill="#fff" stroke="#f8698a" stroke-width="1.2"/>
<circle cx="969.50" cy="957.00" r="1.8" fill="#fff" stroke="#f8698a" stroke-width="1.2"/>
<circle cx="976.08" cy="957.00" r="1.8" fill="#fff" stroke="#f8698a" stroke-width="1.2"/>
<circle cx="982.65" cy="957.00" r="1.8" fill="#fff" stroke="#f8698a" stroke-width="1.2"/>
<circle cx="989.23" cy="957.00" r="1.8" fill="#fff" stroke="#f8698a" stroke-width="1.2"/>
<circle cx="995.80" cy="957.00" r="1.8" fill="#fff" stroke="#f8698a" stroke-width="1.2"/>
<circle cx="1002.38" cy="957.00" r="1.8" fill="#fff" stroke="#f8698a" stroke-width="1.2"/>
<circle cx="1008.96" cy="957.00" r="1.8" fill="#fff" stroke="#f8698a" stroke-width="1.2"/>
<circle cx="1015.53" cy="957.00" r="1.8" fill="#fff" stroke="#f8698a" stroke-width="1.2"/>
<circle cx="1022.11" cy="957.00" r="1.8" fill="#fff" stroke="#f8698a" stroke-width="1.2"/>
<circle cx="1028.68" cy="957.00" r="1.8" fill="#fff" stroke="#f8698a" stroke-width="1.2"/>
<circle cx="1035.26" cy="957.00" r="1.8" fill="#fff" stroke="#f8698a" stroke-width="1.2"/>
<circle cx="1041.84" cy="957.00" r="1.8" fill="#fff" stroke="#f8698a" stroke-width="1.2"/>
<circle cx="1048.41" cy="957.00" r="1.8" fill="#fff" stroke="#f8698a" stroke-width="1.2"/>
<circle cx="1054.99" cy="957.00" r="1.8" fill="#fff" stroke="#f8698a" stroke-width="1.2"/>
<circle cx="1061.57" cy="957.00" r="1.8" fill="#fff" stroke="#f8698a" stroke-width="1.2"/>
<circle cx="1068.14" cy="957.00" r="1.8" fill="#fff" stroke="#f8698a" stroke-width="1.2"/>
<circle cx="1074.72" cy="957.00" r="1.8" fill="#fff" stroke="#f8698a" stroke-width="1.2"/>
<circle cx="1081.29" cy="957.00" r="1.8" fill="#fff" stroke="#f8698a" stroke-width="1.2"/>
<circle cx="1087.87" cy="957.00" r="1.8" fill="#fff" stroke="#f8698a" stroke-width="1.2"/>
<circle cx="1094.45" cy="957.00" r="1.8" fill="#fff" stroke="#f8698a" stroke-width="1.2"/>
<circle cx="1101.02" cy="957.00" r="1.8" fill="#fff" stroke="#f8698a" stroke-width="1.2"/>
<circle cx="1107.60" cy="957.00" r="1.8" fill="#fff" stroke="#f8698a" stroke-width="1.2"/>
<circle cx="1114.18" cy="957.00" r="1.8" fill="#fff" stroke="#f8698a" stroke-width="1.2"/>
<circle cx="1120.75" cy="957.00" r="1.8" fill="#fff" stroke="#f8698a" stroke-width="1.2"/>
<circle cx="1127.33" cy="957.00" r="1.8" fill="#fff" stroke="#f8698a" stroke-width="1.2"/>
<circle cx="1133.90" cy="957.00" r="1.8" fill="#fff" stroke="#f8698a" stroke-width="1.2"/>
<circle cx="1140.48" cy="957.00" r="1.8" fill="#fff" stroke="#f8698a" stroke-width="1.2"/>
<circle cx="1147.06" cy="957.00" r="1.8" fill="#fff" stroke="#f8698a" stroke-width="1.2"/>
<circle cx="1153.63" cy="957.00" r="1.8" fill="#fff" stroke="#f8698a" stroke-width="1.2"/>
<circle cx="1160.21" cy="957.00" r="1.8" fill="#fff" stroke="#f8698a" stroke-width="1.2"/>
<circle cx="1166.79" cy="957.00" r="1.8" fill="#fff" stroke="#f8698a" stroke-width="1.2"/>
<circle cx="1173.36" cy="957.00" r="1.8" fill="#fff" stroke="#f8698a" stroke-width="1.2"/>
<circle cx="1179.94" cy="957.00" r="1.8" fill="#fff" stroke="#f8698a" stroke-width="1.2"/>
<circle cx="1186.51" cy="957.00" r="1.8" fill="#fff" stroke="#f8698a" stroke-width="1.2"/>
<circle cx="1193.09" cy="957.00" r="1.8" fill="#fff" stroke="#f8698a" stroke-width="1.2"/>
<circle cx="1199.67" cy="957.00" r="1.8" fill="#fff" stroke="#f8698a" stroke-width="1.2"/>
<circle cx="1206.24" cy="957.00" r="1.8" fill="#fff" stroke="#f8698a" stroke-width="1.2"/>
<circle cx="1212.82" cy="957.00" r="1.8" fill="#fff" stroke="#f8698a" stroke-width="1.2"/>
<circle cx="1219.40" cy="957.00" r="1.8" fill="#fff" stroke="#f8698a" stroke-width="1.2"/>
<circle cx="1225.97" cy="957.00" r="1.8" fill="#fff" stroke="#f8698a" stroke-width="1.2"/>
<circle cx="1232.55" cy="957.00" r="1.8" fill="#fff" stroke="#f8698a" stroke-width="1.2"/>
<circle cx="1239.12" cy="957.00" r="1.8" fill="#fff" stroke="#f8698a" stroke-width="1.2"/>
<circle cx="1245.70" cy="957.00" r="1.8" fill="#fff" stroke="#f8698a" stroke-width="1.2"/>
<circle cx="1252.28" cy="957.00" r="1.8" fill="#fff" stroke="#f8698a" stroke-width="1.2"/>
<circle cx="1258.85" cy="957.00" r="1.8" fill="#fff" stroke="#f8698a" stroke-width="1.2"/>
<circle cx="1265.43" cy="938.50" r="1.8" fill="#fff" stroke="#f8698a" stroke-width="1.2"/>
<circle cx="1272.00" cy="957.00" r="1.8" fill="#fff" stroke="#f8698a" stroke-width="1.2"/>
<circle cx="1278.58" cy="943.30" r="1.8" fill="#fff" stroke="#f8698a" stroke-width="1.2"/>
<circle cx="1285.16" cy="957.00" r="1.8" fill="#fff" stroke="#f8698a" stroke-width="1.2"/>
<circle cx="1291.73" cy="957.00" r="1.8" fill="#fff" stroke="#f8698a" stroke-width="1.2"/>
<circle cx="1298.31" cy="957.00" r="1.8" fill="#fff" stroke="#f8698a" stroke-width="1.2"/>
<circle cx="1304.89" cy="957.00" r="1.8" fill="#fff" stroke="#f8698a" stroke-width="1.2"/>
<circle cx="1311.46" cy="957.00" r="1.8" fill="#fff" stroke="#f8698a" stroke-width="1.2"/>
<circle cx="1318.04" cy="957.00" r="1.8" fill="#fff" stroke="#f8698a" stroke-width="1.2"/>
<circle cx="1324.61" cy="957.00" r="1.8" fill="#fff" stroke="#f8698a" stroke-width="1.2"/>
<circle cx="1331.19" cy="957.00" r="1.8" fill="#fff" stroke="#f8698a" stroke-width="1.2"/>
<circle cx="1337.77" cy="957.00" r="1.8" fill="#fff" stroke="#f8698a" stroke-width="1.2"/>
<circle cx="1344.34" cy="957.00" r="1.8" fill="#fff" stroke="#f8698a" stroke-width="1.2"/>
<circle cx="1350.92" cy="957.00" r="1.8" fill="#fff" stroke="#f8698a" stroke-width="1.2"/>
<circle cx="1357.50" cy="951.10" r="1.8" fill="#fff" stroke="#f8698a" stroke-width="1.2"/>
<circle cx="1364.07" cy="957.00" r="1.8" fill="#fff" stroke="#f8698a" stroke-width="1.2"/>
<circle cx="1370.65" cy="957.00" r="1.8" fill="#fff" stroke="#f8698a" stroke-width="1.2"/>
<circle cx="1377.22" cy="937.50" r="1.8" fill="#fff" stroke="#f8698a" stroke-width="1.2"/>
<circle cx="1383.80" cy="957.00" r="1.8" fill="#fff" stroke="#f8698a" stroke-width="1.2"/>
<circle cx="1390.38" cy="957.00" r="1.8" fill="#fff" stroke="#f8698a" stroke-width="1.2"/>
<circle cx="1396.95" cy="944.30" r="1.8" fill="#fff" stroke="#f8698a" stroke-width="1.2"/>
<circle cx="1403.53" cy="957.00" r="1.8" fill="#fff" stroke="#f8698a" stroke-width="1.2"/>
<circle cx="1410.11" cy="957.00" r="1.8" fill="#fff" stroke="#f8698a" stroke-width="1.2"/>
<circle cx="1416.68" cy="957.00" r="1.8" fill="#fff" stroke="#f8698a" stroke-width="1.2"/>
<circle cx="1423.26" cy="957.00" r="1.8" fill="#fff" stroke="#f8698a" stroke-width="1.2"/>
<circle cx="1429.83" cy="957.00" r="1.8" fill="#fff" stroke="#f8698a" stroke-width="1.2"/>
<circle cx="1436.41" cy="957.00" r="1.8" fill="#fff" stroke="#f8698a" stroke-width="1.2"/>
<circle cx="1442.99" cy="957.00" r="1.8" fill="#fff" stroke="#f8698a" stroke-width="1.2"/>
<circle cx="1449.56" cy="957.00" r="1.8" fill="#fff" stroke="#f8698a" stroke-width="1.2"/>
<circle cx="1456.14" cy="957.00" r="1.8" fill="#fff" stroke="#f8698a" stroke-width="1.2"/>
<circle cx="1462.72" cy="955.00" r="1.8" fill="#fff" stroke="#f8698a" stroke-width="1.2"/>
<circle cx="1469.29" cy="957.00" r="1.8" fill="#fff" stroke="#f8698a" stroke-width="1.2"/>
<circle cx="1475.87" cy="957.00" r="1.8" fill="#fff" stroke="#f8698a" stroke-width="1.2"/>
<circle cx="1482.44" cy="957.00" r="1.8" fill="#fff" stroke="#f8698a" stroke-width="1.2"/>
<circle cx="1489.02" cy="955.00" r="1.8" fill="#fff" stroke="#f8698a" stroke-width="1.2"/>
<circle cx="1495.60" cy="957.00" r="1.8" fill="#fff" stroke="#f8698a" stroke-width="1.2"/>
<circle cx="1502.17" cy="957.00" r="1.8" fill="#fff" stroke="#f8698a" stroke-width="1.2"/>
<circle cx="1508.75" cy="957.00" r="1.8" fill="#fff" stroke="#f8698a" stroke-width="1.2"/>
<circle cx="1515.32" cy="957.00" r="1.8" fill="#fff" stroke="#f8698a" stroke-width="1.2"/>
<circle cx="1521.90" cy="957.00" r="1.8" fill="#fff" stroke="#f8698a" stroke-width="1.2"/>
<circle cx="1528.48" cy="957.00" r="1.8" fill="#fff" stroke="#f8698a" stroke-width="1.2"/>
<circle cx="1535.05" cy="957.00" r="1.8" fill="#fff" stroke="#f8698a" stroke-width="1.2"/>
<circle cx="1541.63" cy="957.00" r="1.8" fill="#fff" stroke="#f8698a" stroke-width="1.2"/>
<circle cx="1548.21" cy="957.00" r="1.8" fill="#fff" stroke="#f8698a" stroke-width="1.2"/>
<circle cx="1554.78" cy="957.00" r="1.8" fill="#fff" stroke="#f8698a" stroke-width="1.2"/>
<circle cx="1561.36" cy="957.00" r="1.8" fill="#fff" stroke="#f8698a" stroke-width="1.2"/>
<circle cx="1567.93" cy="957.00" r="1.8" fill="#fff" stroke="#f8698a" stroke-width="1.2"/>
<circle cx="1574.51" cy="957.00" r="1.8" fill="#fff" stroke="#f8698a" stroke-width="1.2"/>
<circle cx="1581.09" cy="957.00" r="1.8" fill="#fff" stroke="#f8698a" stroke-width="1.2"/>
<circle cx="1587.66" cy="957.00" r="1.8" fill="#fff" stroke="#f8698a" stroke-width="1.2"/>
<circle cx="1594.24" cy="957.00" r="1.8" fill="#fff" stroke="#f8698a" stroke-width="1.2"/>
<circle cx="1600.82" cy="957.00" r="1.8" fill="#fff" stroke="#f8698a" stroke-width="1.2"/>
<circle cx="1607.39" cy="957.00" r="1.8" fill="#fff" stroke="#f8698a" stroke-width="1.2"/>
<circle cx="1613.97" cy="957.00" r="1.8" fill="#fff" stroke="#f8698a" stroke-width="1.2"/>
<circle cx="1620.54" cy="957.00" r="1.8" fill="#fff" stroke="#f8698a" stroke-width="1.2"/>
<circle cx="1627.12" cy="957.00" r="1.8" fill="#fff" stroke="#f8698a" stroke-width="1.2"/>
<circle cx="1633.70" cy="951.90" r="1.8" fill="#fff" stroke="#f8698a" stroke-width="1.2"/>
<circle cx="1640.27" cy="951.00" r="1.8" fill="#fff" stroke="#f8698a" stroke-width="1.2"/>
<circle cx="1646.85" cy="957.00" r="1.8" fill="#fff" stroke="#f8698a" stroke-width="1.2"/>
<circle cx="1653.43" cy="957.00" r="1.8" fill="#fff" stroke="#f8698a" stroke-width="1.2"/>
<circle cx="1660.00" cy="957.00" r="1.8" fill="#fff" stroke="#f8698a" stroke-width="1.2"/>
<circle cx="1666.58" cy="951.50" r="1.8" fill="#fff" stroke="#f8698a" stroke-width="1.2"/>
<circle cx="1673.15" cy="957.00" r="1.8" fill="#fff" stroke="#f8698a" stroke-width="1.2"/>
<circle cx="1679.73" cy="957.00" r="1.8" fill="#fff" stroke="#f8698a" stroke-width="1.2"/>
<circle cx="1686.31" cy="957.00" r="1.8" fill="#fff" stroke="#f8698a" stroke-width="1.2"/>
<circle cx="1692.88" cy="957.00" r="1.8" fill="#fff" stroke="#f8698a" stroke-width="1.2"/>
<circle cx="1699.46" cy="957.00" r="1.8" fill="#fff" stroke="#f8698a" stroke-width="1.2"/>
<circle cx="1706.04" cy="957.00" r="1.8" fill="#fff" stroke="#f8698a" stroke-width="1.2"/>
<circle cx="1712.61" cy="957.00" r="1.8" fill="#fff" stroke="#f8698a" stroke-width="1.2"/>
<circle cx="1719.19" cy="957.00" r="1.8" fill="#fff" stroke="#f8698a" stroke-width="1.2"/>
<circle cx="1725.76" cy="947.70" r="1.8" fill="#fff" stroke="#f8698a" stroke-width="1.2"/>
<circle cx="1732.34" cy="957.00" r="1.8" fill="#fff" stroke="#f8698a" stroke-width="1.2"/>
<circle cx="1738.92" cy="957.00" r="1.8" fill="#fff" stroke="#f8698a" stroke-width="1.2"/>
<circle cx="1745.49" cy="957.00" r="1.8" fill="#fff" stroke="#f8698a" stroke-width="1.2"/>
<circle cx="1752.07" cy="957.00" r="1.8" fill="#fff" stroke="#f8698a" stroke-width="1.2"/>
<circle cx="1758.64" cy="957.00" r="1.8" fill="#fff" stroke="#f8698a" stroke-width="1.2"/>
<circle cx="1765.22" cy="957.00" r="1.8" fill="#fff" stroke="#f8698a" stroke-width="1.2"/>
<circle cx="1771.80" cy="957.00" r="1.8" fill="#fff" stroke="#f8698a" stroke-width="1.2"/>
<circle cx="1778.37" cy="957.00" r="1.8" fill="#fff" stroke="#f8698a" stroke-width="1.2"/>
<circle cx="1784.95" cy="957.00" r="1.8" fill="#fff" stroke="#f8698a" stroke-width="1.2"/>
<circle cx="1791.53" cy="957.00" r="1.8" fill="#fff" stroke="#f8698a" stroke-width="1.2"/>
<circle cx="1798.10" cy="957.00" r="1.8" fill="#fff" stroke="#f8698a" stroke-width="1.2"/>
<circle cx="1804.68" cy="948.30" r="1.8" fill="#fff" stroke="#f8698a" stroke-width="1.2"/>
<circle cx="1811.25" cy="957.00" r="1.8" fill="#fff" stroke="#f8698a" stroke-width="1.2"/>
<circle cx="1817.83" cy="957.00" r="1.8" fill="#fff" stroke="#f8698a" stroke-width="1.2"/>
<circle cx="1824.41" cy="957.00" r="1.8" fill="#fff" stroke="#f8698a" stroke-width="1.2"/>
<circle cx="1830.98" cy="957.00" r="1.8" fill="#fff" stroke="#f8698a" stroke-width="1.2"/>
<circle cx="1837.56" cy="957.00" r="1.8" fill="#fff" stroke="#f8698a" stroke-width="1.2"/>
<circle cx="1844.14" cy="957.00" r="1.8" fill="#fff" stroke="#f8698a" stroke-width="1.2"/>
<circle cx="1850.71" cy="948.75" r="1.8" fill="#fff" stroke="#f8698a" stroke-width="1.2"/>
<text x="640.7" y="974" text-anchor="middle" font-size="12" fill="#333" font-family="Liberation Sans">10 мая 2020</text>
<text x="772.2" y="974" text-anchor="middle" font-size="12" fill="#333" font-family="Liberation Sans">30 мая 2020</text>
<text x="903.7" y="974" text-anchor="middle" font-size="12" fill="#333" font-family="Liberation Sans">19 июня 2020</text>
<text x="1035.3" y="974" text-anchor="middle" font-size="12" fill="#333" font-family="Liberation Sans">9 июля 2020</text>
<text x="1166.8" y="974" text-anchor="middle" font-size="12" fill="#333" font-family="Liberation Sans">29 июля 2020</text>
<text x="1298.3" y="974" text-anchor="middle" font-size="12" fill="#333" font-family="Liberation Sans">18 августа 2020</text>
<text x="1429.8" y="974" text-anchor="middle" font-size="12" fill="#333" font-family="Liberation Sans">7 сентября 2020</text>
<text x="1561.4" y="974" text-anchor="middle" font-size="12" fill="#333" font-family="Liberation Sans">27 сентября 2020</text>
<text x="1692.9" y="974" text-anchor="middle" font-size="12" fill="#333" font-family="Liberation Sans">17 октября 2020</text>
<text x="1824.4" y="974" text-anchor="middle" font-size="12" fill="#333" font-family="Liberation Sans">6 ноября 2020</text>
<line x1="1009.2" y1="747.5" x2="1034.2" y2="747.5" stroke="#14cca5" stroke-width="1.5"/>
<circle cx="1021.8" cy="747.5" r="5.3" fill="#fff" stroke="#14cca5" stroke-width="1.7"/>
<text x="1039.8" y="751.5" font-size="12" fill="#333" font-family="Liberation Sans">Заправки</text>
<line x1="1102.0" y1="747.5" x2="1127.0" y2="747.5" stroke="#5db4f2" stroke-width="1.5"/>
<circle cx="1114.5" cy="747.5" r="5.3" fill="#fff" stroke="#5db4f2" stroke-width="1.7"/>
<text x="1132.5" y="751.5" font-size="12" fill="#333" font-family="Liberation Sans">Ремонты и запчасти</text>
<line x1="1255.2" y1="747.5" x2="1280.2" y2="747.5" stroke="#f8698a" stroke-width="1.5"/>
<circle cx="1267.8" cy="747.5" r="5.3" fill="#fff" stroke="#f8698a" stroke-width="1.7"/>
<text x="1285.8" y="751.5" font-size="12" fill="#333" font-family="Liberation Sans">Дополнительные расходы</text>
</svg>

</body></html>
